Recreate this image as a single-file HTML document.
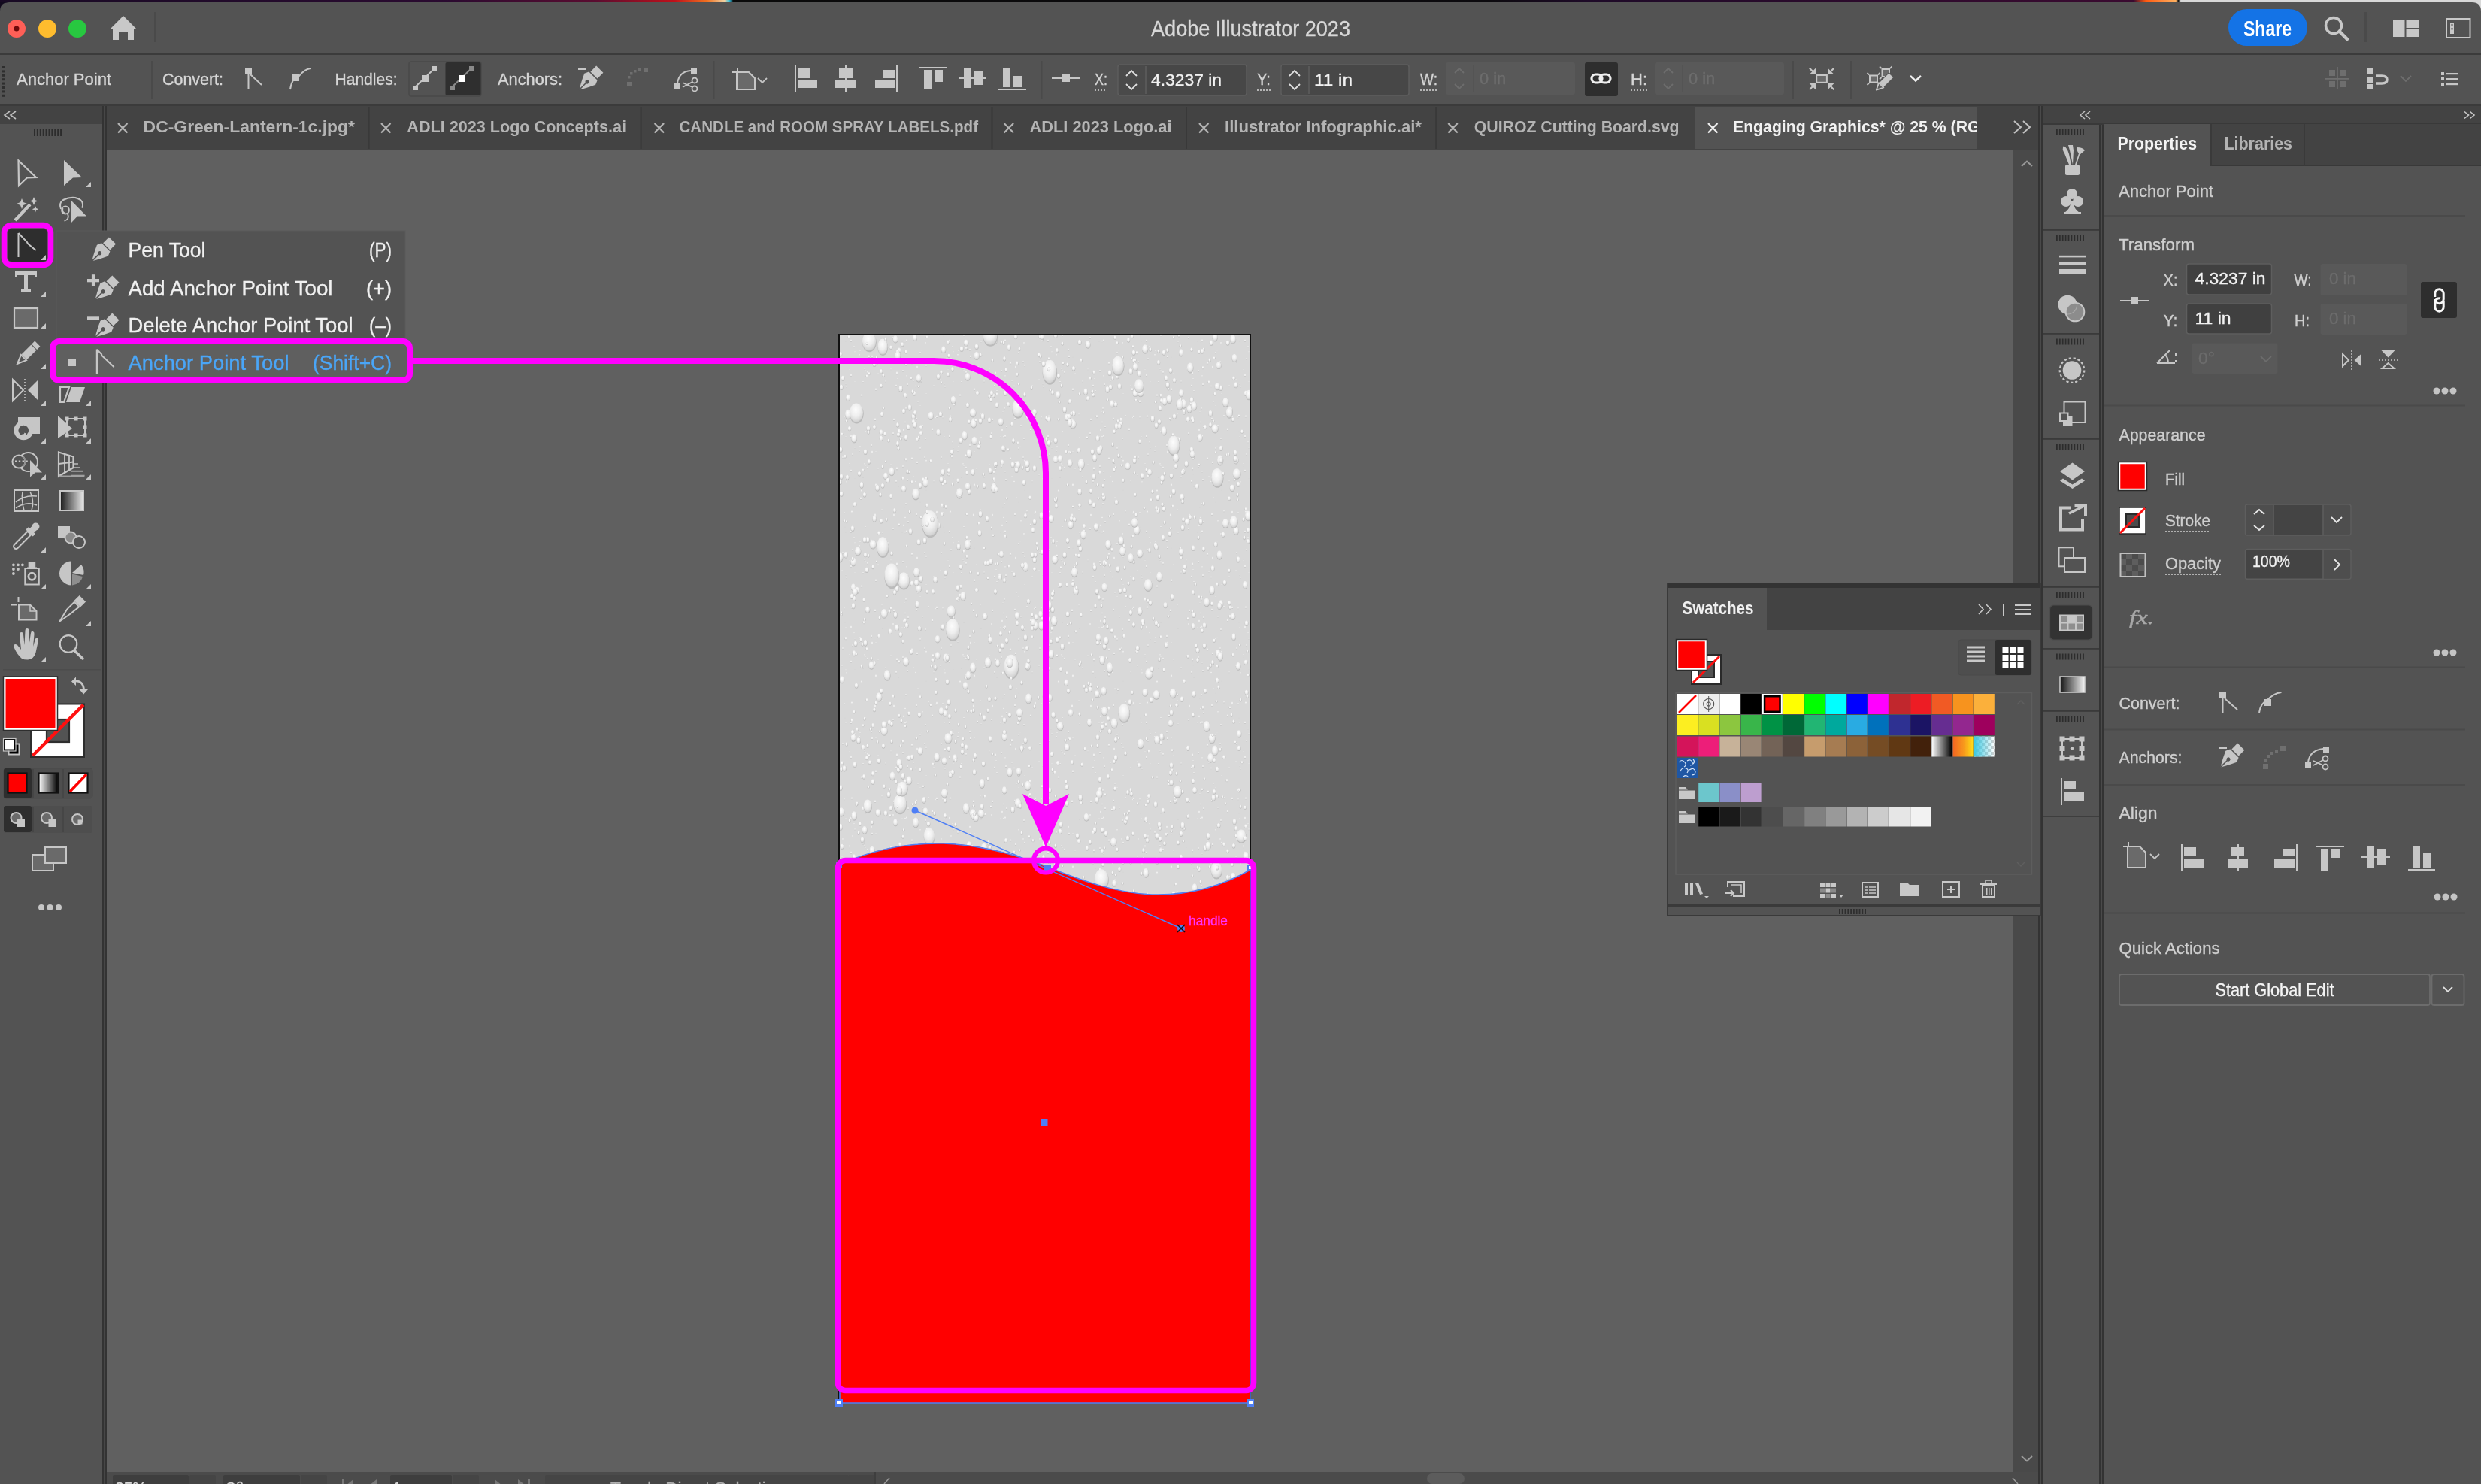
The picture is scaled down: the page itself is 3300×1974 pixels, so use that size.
<!DOCTYPE html>
<html><head><meta charset="utf-8"><title>Adobe Illustrator 2023</title>
<style>
*{margin:0;padding:0}
html,body{width:3300px;height:1974px;overflow:hidden;background:#535353}
svg{display:block;font-family:"Liberation Sans",sans-serif;will-change:transform}
</style></head><body>
<svg width="3300" height="1974" viewBox="0 0 3300 1974">
<rect x="0" y="0" width="3300" height="1974" rx="0" fill="#535353" />
<defs><linearGradient id="topg" x1="0" x2="1"><stop offset="0" stop-color="#180a24"/><stop offset="0.18" stop-color="#2a0a30"/><stop offset="0.24" stop-color="#5a0c30"/><stop offset="0.272" stop-color="#c0101a"/><stop offset="0.285" stop-color="#f07020"/><stop offset="0.292" stop-color="#f0d0a0"/><stop offset="0.294" stop-color="#30c0e0"/><stop offset="0.2955" stop-color="#0a0a0a"/><stop offset="0.6" stop-color="#0c0a0e"/><stop offset="0.64" stop-color="#1e0a28"/><stop offset="0.86" stop-color="#3a0a30"/><stop offset="0.865" stop-color="#ff5a10"/><stop offset="0.877" stop-color="#ffb060"/><stop offset="0.878" stop-color="#111"/><stop offset="0.879" stop-color="#d8d8d8"/><stop offset="1" stop-color="#d8d8d8"/></linearGradient></defs>
<rect x="0" y="0" width="3300" height="4" rx="0" fill="url(#topg)" />
<path d="M0 3 H3300 V72 H0 Z M0 3 V15 Q0 3 12 3 Z" fill="#535353" />
<path d="M0 3 H12 Q0 3 0 15 Z" fill="#120a1e" />
<path d="M3300 3 H3288 Q3300 3 3300 15 Z" fill="#d8d8d8" />
<rect x="0" y="71" width="3300" height="2" rx="0" fill="#3b3b3b" />
<rect x="0" y="139" width="3300" height="2" rx="0" fill="#3b3b3b" />
<rect x="0" y="141" width="136" height="1833" rx="0" fill="#535353" />
<rect x="0" y="141" width="136" height="24" rx="0" fill="#434343" />
<rect x="136" y="141" width="6" height="1833" rx="0" fill="#333333" />
<rect x="138" y="141" width="2" height="1833" rx="0" fill="#474747" />
<rect x="142" y="141" width="2570" height="58" rx="0" fill="#434343" />
<rect x="142" y="199" width="2536" height="1759" rx="0" fill="#606060" />
<rect x="2678" y="199" width="33" height="1759" rx="0" fill="#494949" />
<rect x="142" y="1958" width="2570" height="16" rx="0" fill="#4b4b4b" />
<rect x="2711" y="141" width="6" height="1833" rx="0" fill="#333333" />
<rect x="2713" y="141" width="2" height="1833" rx="0" fill="#4a4a4a" />
<rect x="2717" y="141" width="583" height="24" rx="0" fill="#434343" />
<rect x="2717" y="165" width="75" height="1809" rx="0" fill="#535353" />
<rect x="2792" y="165" width="6" height="1809" rx="0" fill="#333333" />
<rect x="2794" y="165" width="2" height="1809" rx="0" fill="#4a4a4a" />
<rect x="2798" y="165" width="502" height="1809" rx="0" fill="#535353" />
<circle cx="22" cy="38" r="12" fill="#fe5f57" />
<circle cx="22" cy="38" r="3.5" fill="#6e0a0a" />
<circle cx="63" cy="38" r="12" fill="#febc2e" />
<circle cx="103" cy="38" r="12" fill="#28c840" />
<path d="M164 21 L182 39 L178 39 L178 53 L170 53 L170 43 L158 43 L158 53 L150 53 L150 39 L146 39 Z" fill="#c8c8c8" />
<rect x="205" y="16" width="3" height="40" rx="0" fill="#4a4a4a" />
<text x="1531" y="47.5" font-size="29.07" fill="#d8d8d8" stroke="#d8d8d8" stroke-width="0.35" text-anchor="start" textLength="265" lengthAdjust="spacingAndGlyphs" >Adobe Illustrator 2023</text>
<rect x="2964" y="12" width="105" height="49" rx="24.5" fill="#1473e6" />
<text x="2984" y="47.5" font-size="29.07" font-weight="bold" fill="#ffffff" text-anchor="start" textLength="64" lengthAdjust="spacingAndGlyphs" >Share</text>
<circle cx="3104" cy="34" r="10.5" fill="none" stroke="#c8c8c8" stroke-width="3.5" />
<line x1="3112" y1="42" x2="3122" y2="52" stroke="#c8c8c8" stroke-width="4.5" stroke-linecap="round"/>
<rect x="3145" y="16" width="3" height="40" rx="0" fill="#4a4a4a" />
<rect x="3183" y="26" width="15.5" height="23" rx="0" fill="#c8c8c8" />
<rect x="3200.5" y="26" width="16.5" height="11" rx="0" fill="#c8c8c8" />
<rect x="3200.5" y="38.5" width="16.5" height="10.5" rx="0" fill="#c8c8c8" />
<rect x="3254" y="25" width="31.5" height="25" rx="0" fill="none" stroke="#c8c8c8" stroke-width="2" />
<rect x="3259" y="30" width="5" height="15" rx="0" fill="#c8c8c8" />
<rect x="3260.5" y="32" width="2" height="2.5" rx="0" fill="#535353" />
<rect x="3260.5" y="37" width="2" height="2.5" rx="0" fill="#535353" />
<rect x="3" y="88.0" width="4" height="3" rx="0" fill="#2e2e2e" />
<rect x="3" y="93.4" width="4" height="3" rx="0" fill="#2e2e2e" />
<rect x="3" y="98.8" width="4" height="3" rx="0" fill="#2e2e2e" />
<rect x="3" y="104.2" width="4" height="3" rx="0" fill="#2e2e2e" />
<rect x="3" y="109.6" width="4" height="3" rx="0" fill="#2e2e2e" />
<rect x="3" y="115.0" width="4" height="3" rx="0" fill="#2e2e2e" />
<rect x="3" y="120.4" width="4" height="3" rx="0" fill="#2e2e2e" />
<rect x="3" y="125.80000000000001" width="4" height="3" rx="0" fill="#2e2e2e" />
<text x="22" y="113" font-size="21.80" fill="#d6d6d6" stroke="#d6d6d6" stroke-width="0.35" text-anchor="start" textLength="126" lengthAdjust="spacingAndGlyphs" >Anchor Point</text>
<rect x="201" y="81" width="2" height="51" rx="0" fill="#4a4a4a" />
<text x="216" y="112.5" font-size="21.80" fill="#d6d6d6" stroke="#d6d6d6" stroke-width="0.35" text-anchor="start" textLength="81" lengthAdjust="spacingAndGlyphs" >Convert:</text>
<rect x="326" y="90" width="9" height="9" rx="0" fill="#c6c6c6" />
<line x1="330.5" y1="99" x2="330.5" y2="119" stroke="#c6c6c6" stroke-width="2" />
<line x1="333" y1="99" x2="348" y2="113" stroke="#c6c6c6" stroke-width="2" />
<rect x="389" y="99" width="9" height="9" rx="0" fill="#c6c6c6" />
<path d="M386 119 Q388 104 398 101 Q405 92 413 91" fill="none" stroke="#c6c6c6" stroke-width="2" />
<text x="445.5" y="112.5" font-size="21.80" fill="#d6d6d6" stroke="#d6d6d6" stroke-width="0.35" text-anchor="start" textLength="83" lengthAdjust="spacingAndGlyphs" >Handles:</text>
<rect x="544" y="82" width="96" height="46" rx="3" fill="none" stroke="#4a4a4a" stroke-width="1.5" />
<rect x="592.5" y="83" width="47" height="44" rx="2" fill="#2f2f2f" />
<line x1="551" y1="117" x2="578" y2="91" stroke="#c6c6c6" stroke-width="2" />
<rect x="550" y="114" width="6" height="6" rx="0" fill="#c6c6c6" />
<rect x="575" y="88" width="6" height="6" rx="0" fill="#c6c6c6" />
<rect x="561" y="100" width="9" height="9" rx="0" fill="#c6c6c6" />
<line x1="600" y1="117" x2="627" y2="91" stroke="#8a8a8a" stroke-width="2" />
<rect x="599" y="114" width="6" height="6" rx="0" fill="#8a8a8a" />
<rect x="624" y="88" width="6" height="6" rx="0" fill="#8a8a8a" />
<rect x="610" y="100" width="9" height="9" rx="0" fill="#ffffff" />
<text x="662" y="112.5" font-size="21.80" fill="#d6d6d6" stroke="#d6d6d6" stroke-width="0.35" text-anchor="start" textLength="86" lengthAdjust="spacingAndGlyphs" >Anchors:</text>
<rect x="769" y="90" width="11" height="3" rx="0" fill="#c6c6c6" />
<g transform="translate(784,106) rotate(45) scale(1.0)"><rect x="-6.5" y="-19.5" width="13" height="11" fill="#c6c6c6"/><path d="M-8 -7 L8 -7 L10.5 -1 Q5 11 0 19 Q-5 11 -10.5 -1 Z" fill="#c6c6c6"/><circle cx="0" cy="4.2" r="2.6" fill="#535353"/><line x1="0" y1="5" x2="0" y2="19.5" stroke="#535353" stroke-width="1.6"/></g>
<rect x="834" y="109" width="6" height="6" rx="0" fill="#6f6f6f" />
<rect x="835" y="101" width="3.5" height="3.5" rx="0" fill="#6f6f6f" />
<rect x="838" y="96" width="3.5" height="3.5" rx="0" fill="#6f6f6f" />
<rect x="843" y="93" width="3.5" height="3.5" rx="0" fill="#6f6f6f" />
<rect x="849" y="91" width="3.5" height="3.5" rx="0" fill="#6f6f6f" />
<rect x="856" y="90" width="6" height="6" rx="0" fill="#6f6f6f" />
<rect x="897" y="111" width="8" height="8" rx="0" fill="#c6c6c6" />
<rect x="919" y="91" width="8" height="8" rx="0" fill="#c6c6c6" />
<path d="M901 111 Q903 95 919 94" fill="none" stroke="#c6c6c6" stroke-width="2" />
<circle cx="924" cy="107" r="3.5" fill="none" stroke="#c6c6c6" stroke-width="1.8" />
<circle cx="924" cy="118" r="3.5" fill="none" stroke="#c6c6c6" stroke-width="1.8" />
<line x1="908" y1="110" x2="921" y2="116" stroke="#c6c6c6" stroke-width="1.8" />
<line x1="908" y1="116" x2="921" y2="109" stroke="#c6c6c6" stroke-width="1.8" />
<rect x="948.5" y="81" width="2" height="51" rx="0" fill="#4a4a4a" />
<rect x="974" y="95" width="8" height="2" rx="0" fill="#c6c6c6" />
<rect x="980" y="90" width="2" height="6" rx="0" fill="#c6c6c6" />
<path d="M980 96 H996 L1004 104 V119 H980 Z" fill="#6a6a6a" stroke="#c6c6c6" stroke-width="2" />
<path d="M1008 104 L1014 110 L1020 104" fill="none" stroke="#c6c6c6" stroke-width="1.8" />
<rect x="1057" y="87" width="2" height="36" rx="0" fill="#c6c6c6" />
<rect x="1061" y="91" width="16" height="13" rx="0" fill="#c6c6c6" />
<rect x="1061" y="107" width="26" height="10" rx="0" fill="#c6c6c6" />
<rect x="1124" y="87" width="2" height="36" rx="0" fill="#c6c6c6" />
<rect x="1116" y="91" width="18" height="13" rx="0" fill="#c6c6c6" />
<rect x="1111" y="107" width="27" height="10" rx="0" fill="#c6c6c6" />
<rect x="1192" y="87" width="2" height="36" rx="0" fill="#c6c6c6" />
<rect x="1174" y="93" width="16" height="11" rx="0" fill="#c6c6c6" />
<rect x="1164" y="107" width="26" height="10" rx="0" fill="#c6c6c6" />
<rect x="1223" y="89" width="36" height="2" rx="0" fill="#c6c6c6" />
<rect x="1229" y="93" width="10" height="26" rx="0" fill="#c6c6c6" />
<rect x="1243" y="93" width="11" height="16" rx="0" fill="#c6c6c6" />
<rect x="1275" y="103" width="37" height="2" rx="0" fill="#c6c6c6" />
<rect x="1282" y="91" width="10" height="26" rx="0" fill="#c6c6c6" />
<rect x="1296" y="95" width="12" height="18" rx="0" fill="#c6c6c6" />
<rect x="1328" y="118" width="37" height="2" rx="0" fill="#c6c6c6" />
<rect x="1334" y="91" width="10" height="25" rx="0" fill="#c6c6c6" />
<rect x="1348" y="101" width="12" height="15" rx="0" fill="#c6c6c6" />
<rect x="1384.5" y="81" width="2" height="51" rx="0" fill="#4a4a4a" />
<line x1="1399" y1="104" x2="1437" y2="104" stroke="#c6c6c6" stroke-width="1.8" />
<rect x="1413" y="99" width="10" height="10" rx="0" fill="#c6c6c6" />
<text x="1456" y="113" font-size="21.80" fill="#d6d6d6" stroke="#d6d6d6" stroke-width="0.35" text-anchor="start" textLength="17" lengthAdjust="spacingAndGlyphs" >X:</text>
<line x1="1456" y1="120" x2="1473" y2="120" stroke="#d6d6d6" stroke-width="1.5" stroke-dasharray="2 2"/>
<rect x="1487" y="86" width="171" height="41" rx="3" fill="#474747" stroke="#5e5e5e" stroke-width="1.5" />
<rect x="1488" y="87" width="36" height="39" rx="2" fill="#4a4a4a" />
<line x1="1524" y1="88" x2="1524" y2="125" stroke="#5e5e5e" stroke-width="1.5" />
<path d="M1498 101 L1505 94 L1512 101" fill="none" stroke="#e0e0e0" stroke-width="1.8" />
<path d="M1498 112 L1505 119 L1512 112" fill="none" stroke="#e0e0e0" stroke-width="1.8" />
<text x="1531" y="113.5" font-size="22.53" fill="#f2f2f2" stroke="#f2f2f2" stroke-width="0.35" text-anchor="start" textLength="94" lengthAdjust="spacingAndGlyphs" >4.3237 in</text>
<text x="1672" y="113" font-size="21.80" fill="#d6d6d6" stroke="#d6d6d6" stroke-width="0.35" text-anchor="start" textLength="18" lengthAdjust="spacingAndGlyphs" >Y:</text>
<line x1="1672" y1="120" x2="1690" y2="120" stroke="#d6d6d6" stroke-width="1.5" stroke-dasharray="2 2"/>
<rect x="1704" y="86" width="170" height="41" rx="3" fill="#474747" stroke="#5e5e5e" stroke-width="1.5" />
<rect x="1705" y="87" width="36" height="39" rx="2" fill="#4a4a4a" />
<line x1="1741" y1="88" x2="1741" y2="125" stroke="#5e5e5e" stroke-width="1.5" />
<path d="M1715 101 L1722 94 L1729 101" fill="none" stroke="#e0e0e0" stroke-width="1.8" />
<path d="M1715 112 L1722 119 L1729 112" fill="none" stroke="#e0e0e0" stroke-width="1.8" />
<text x="1748" y="113.5" font-size="22.53" fill="#f2f2f2" stroke="#f2f2f2" stroke-width="0.35" text-anchor="start" textLength="51" lengthAdjust="spacingAndGlyphs" >11 in</text>
<text x="1889" y="113" font-size="21.80" fill="#d6d6d6" stroke="#d6d6d6" stroke-width="0.35" text-anchor="start" textLength="23" lengthAdjust="spacingAndGlyphs" >W:</text>
<line x1="1889" y1="120" x2="1912" y2="120" stroke="#d6d6d6" stroke-width="1.5" stroke-dasharray="2 2"/>
<rect x="1923" y="83" width="172" height="43" rx="3" fill="#595959" />
<line x1="1960" y1="87" x2="1960" y2="122" stroke="#535353" stroke-width="1.5" />
<path d="M1935 97 L1941 91 L1947 97" fill="none" stroke="#6d6d6d" stroke-width="1.8" />
<path d="M1935 112 L1941 118 L1947 112" fill="none" stroke="#6d6d6d" stroke-width="1.8" />
<text x="1968" y="112.0" font-size="21.80" fill="#6d6d6d" stroke="#6d6d6d" stroke-width="0.35" text-anchor="start" >0 in</text>
<rect x="2108" y="83" width="44" height="45" rx="3" fill="#2e2e2e" />
<g fill="none" stroke="#f0f0f0" stroke-width="3.2"><rect x="2117" y="99" width="14" height="11" rx="5.5"/><rect x="2128" y="99" width="14" height="11" rx="5.5"/></g>
<text x="2169" y="113" font-size="21.80" fill="#d6d6d6" stroke="#d6d6d6" stroke-width="0.35" text-anchor="start" textLength="22" lengthAdjust="spacingAndGlyphs" >H:</text>
<line x1="2169" y1="120" x2="2191" y2="120" stroke="#d6d6d6" stroke-width="1.5" stroke-dasharray="2 2"/>
<rect x="2201" y="83" width="172" height="43" rx="3" fill="#595959" />
<line x1="2238" y1="87" x2="2238" y2="122" stroke="#535353" stroke-width="1.5" />
<path d="M2213 97 L2219 91 L2225 97" fill="none" stroke="#6d6d6d" stroke-width="1.8" />
<path d="M2213 112 L2219 118 L2225 112" fill="none" stroke="#6d6d6d" stroke-width="1.8" />
<text x="2246" y="112.0" font-size="21.80" fill="#6d6d6d" stroke="#6d6d6d" stroke-width="0.35" text-anchor="start" >0 in</text>
<rect x="2384" y="81" width="2" height="51" rx="0" fill="#4a4a4a" />
<rect x="2416.2" y="100" width="13.7" height="9.8" rx="0" fill="#6a6a6a" stroke="#c6c6c6" stroke-width="2" />
<path d="M2415.2 99 L2415.2 90.5 L2406.7 99 Z" fill="#c6c6c6" />
<line x1="2412.2" y1="96" x2="2406.8999999999996" y2="90.7" stroke="#c6c6c6" stroke-width="2.2" />
<path d="M2431 99 L2431 90.5 L2439.5 99 Z" fill="#c6c6c6" />
<line x1="2434" y1="96" x2="2439.3" y2="90.7" stroke="#c6c6c6" stroke-width="2.2" />
<path d="M2415.2 111 L2415.2 119.5 L2406.7 111 Z" fill="#c6c6c6" />
<line x1="2412.2" y1="114" x2="2406.8999999999996" y2="119.3" stroke="#c6c6c6" stroke-width="2.2" />
<path d="M2431 111 L2431 119.5 L2439.5 111 Z" fill="#c6c6c6" />
<line x1="2434" y1="114" x2="2439.3" y2="119.3" stroke="#c6c6c6" stroke-width="2.2" />
<rect x="2461" y="81" width="2" height="51" rx="0" fill="#4a4a4a" />
<rect x="2487" y="100.5" width="10" height="9.0" rx="0" fill="#6a6a6a" stroke="#c6c6c6" stroke-width="2" />
<line x1="2486" y1="99.5" x2="2483.5" y2="97.0" stroke="#c6c6c6" stroke-width="1.8" />
<line x1="2498" y1="99.5" x2="2500.5" y2="97.0" stroke="#c6c6c6" stroke-width="1.8" />
<line x1="2486" y1="110.5" x2="2483.5" y2="113.0" stroke="#c6c6c6" stroke-width="1.8" />
<line x1="2498" y1="110.5" x2="2500.5" y2="113.0" stroke="#c6c6c6" stroke-width="1.8" />
<rect x="2503.5" y="92" width="9.5" height="10" rx="0" fill="#6a6a6a" stroke="#c6c6c6" stroke-width="2" />
<line x1="2502.5" y1="91" x2="2500.0" y2="88.5" stroke="#c6c6c6" stroke-width="1.8" />
<line x1="2514" y1="91" x2="2516.5" y2="88.5" stroke="#c6c6c6" stroke-width="1.8" />
<line x1="2502.5" y1="103" x2="2500.0" y2="105.5" stroke="#c6c6c6" stroke-width="1.8" />
<line x1="2514" y1="103" x2="2516.5" y2="105.5" stroke="#c6c6c6" stroke-width="1.8" />
<g transform="translate(2505,110.5) rotate(45)"><rect x="-4.5" y="-15" width="9" height="19" fill="#c6c6c6" stroke="#535353" stroke-width="1"/><path d="M-4.5 4 L4.5 4 L0 13 Z" fill="#5a5a5a" stroke="#c6c6c6" stroke-width="1.8" stroke-linejoin="round"/></g>
<path d="M2541 101 L2548 107.5 L2555 101" fill="none" stroke="#f0f0f0" stroke-width="2.4" />
<rect x="3093" y="104" width="31" height="1.8" rx="0" fill="#6e6e6e" />
<rect x="3108" y="89" width="1.8" height="30" rx="0" fill="#6e6e6e" />
<rect x="3098" y="93" width="8" height="8" rx="0" fill="#6e6e6e" />
<rect x="3112" y="93" width="8" height="8" rx="0" fill="#6e6e6e" />
<rect x="3098" y="108" width="8" height="8" rx="0" fill="#6e6e6e" />
<rect x="3112" y="108" width="8" height="8" rx="0" fill="#6e6e6e" />
<rect x="3148" y="91" width="9" height="8" rx="0" fill="#c6c6c6" />
<rect x="3148" y="102" width="9" height="9" rx="0" fill="#c6c6c6" />
<rect x="3148" y="112" width="9" height="7" rx="0" fill="#c6c6c6" />
<path d="M3160 101 H3168 Q3175 101 3175 106 Q3175 111 3168 111 H3160" fill="none" stroke="#c6c6c6" stroke-width="3.5" />
<path d="M3193 101 L3200 108 L3207 101" fill="none" stroke="#6e6e6e" stroke-width="1.8" />
<rect x="3247" y="96" width="4" height="4" rx="0" fill="#c6c6c6" />
<rect x="3254" y="97" width="16" height="2.2" rx="0" fill="#c6c6c6" />
<rect x="3247" y="103" width="4" height="4" rx="0" fill="#c6c6c6" />
<rect x="3254" y="104" width="16" height="2.2" rx="0" fill="#c6c6c6" />
<rect x="3247" y="110" width="4" height="4" rx="0" fill="#c6c6c6" />
<rect x="3254" y="111" width="16" height="2.2" rx="0" fill="#c6c6c6" />
<rect x="489.6" y="142" width="2" height="56" rx="0" fill="#393939" />
<rect x="851.6" y="142" width="2" height="56" rx="0" fill="#393939" />
<rect x="1318.5" y="142" width="2" height="56" rx="0" fill="#393939" />
<rect x="1577" y="142" width="2" height="56" rx="0" fill="#393939" />
<rect x="1909.2" y="142" width="2" height="56" rx="0" fill="#393939" />
<rect x="2254" y="142" width="376" height="56" rx="0" fill="#535353" />
<line x1="157" y1="164" x2="169.5" y2="176.5" stroke="#b4b4b4" stroke-width="2.2" />
<line x1="169.5" y1="164" x2="157" y2="176.5" stroke="#b4b4b4" stroke-width="2.2" />
<text x="190.6" y="175.6" font-size="22.53" font-weight="bold" fill="#b4b4b4" text-anchor="start" textLength="281.4" lengthAdjust="spacingAndGlyphs" >DC-Green-Lantern-1c.jpg*</text>
<line x1="507" y1="164" x2="519.5" y2="176.5" stroke="#b4b4b4" stroke-width="2.2" />
<line x1="519.5" y1="164" x2="507" y2="176.5" stroke="#b4b4b4" stroke-width="2.2" />
<text x="541.3" y="175.6" font-size="22.53" font-weight="bold" fill="#b4b4b4" text-anchor="start" textLength="291.70000000000005" lengthAdjust="spacingAndGlyphs" >ADLI 2023 Logo Concepts.ai</text>
<line x1="870.6" y1="164" x2="883.1" y2="176.5" stroke="#b4b4b4" stroke-width="2.2" />
<line x1="883.1" y1="164" x2="870.6" y2="176.5" stroke="#b4b4b4" stroke-width="2.2" />
<text x="903.5" y="175.6" font-size="22.53" font-weight="bold" fill="#b4b4b4" text-anchor="start" textLength="397.5" lengthAdjust="spacingAndGlyphs" >CANDLE and ROOM SPRAY LABELS.pdf</text>
<line x1="1335.6" y1="164" x2="1348.1" y2="176.5" stroke="#b4b4b4" stroke-width="2.2" />
<line x1="1348.1" y1="164" x2="1335.6" y2="176.5" stroke="#b4b4b4" stroke-width="2.2" />
<text x="1369.5" y="175.6" font-size="22.53" font-weight="bold" fill="#b4b4b4" text-anchor="start" textLength="189.0" lengthAdjust="spacingAndGlyphs" >ADLI 2023 Logo.ai</text>
<line x1="1595" y1="164" x2="1607.5" y2="176.5" stroke="#b4b4b4" stroke-width="2.2" />
<line x1="1607.5" y1="164" x2="1595" y2="176.5" stroke="#b4b4b4" stroke-width="2.2" />
<text x="1629" y="175.6" font-size="22.53" font-weight="bold" fill="#b4b4b4" text-anchor="start" textLength="262" lengthAdjust="spacingAndGlyphs" >Illustrator Infographic.ai*</text>
<line x1="1926.3" y1="164" x2="1938.8" y2="176.5" stroke="#b4b4b4" stroke-width="2.2" />
<line x1="1938.8" y1="164" x2="1926.3" y2="176.5" stroke="#b4b4b4" stroke-width="2.2" />
<text x="1960.8" y="175.6" font-size="22.53" font-weight="bold" fill="#b4b4b4" text-anchor="start" textLength="272.79999999999995" lengthAdjust="spacingAndGlyphs" >QUIROZ Cutting Board.svg</text>
<line x1="2272" y1="164" x2="2284.5" y2="176.5" stroke="#f0f0f0" stroke-width="2.2" />
<line x1="2284.5" y1="164" x2="2272" y2="176.5" stroke="#f0f0f0" stroke-width="2.2" />
<clipPath id="tabclip"><rect x="2254" y="142" width="376" height="56"/></clipPath>
<text x="2305" y="175.8" font-size="22.53" font-weight="bold" fill="#f2f2f2" text-anchor="start" textLength="437" lengthAdjust="spacingAndGlyphs" clip-path="url(#tabclip)" id="acttab">Engaging Graphics* @ 25 % (RGB/Preview)</text>
<path d="M2679 161 L2688 169 L2679 177 M2691 161 L2700 169 L2691 177" fill="none" stroke="#c0c0c0" stroke-width="2" />
<path d="M13 148 L6 153 L13 158 M21 148 L14 153 L21 158" fill="none" stroke="#c0c0c0" stroke-width="1.6" />
<rect x="45.0" y="172" width="2" height="9" rx="0" fill="#2c2c2c" />
<rect x="48.9" y="172" width="2" height="9" rx="0" fill="#2c2c2c" />
<rect x="52.8" y="172" width="2" height="9" rx="0" fill="#2c2c2c" />
<rect x="56.7" y="172" width="2" height="9" rx="0" fill="#2c2c2c" />
<rect x="60.6" y="172" width="2" height="9" rx="0" fill="#2c2c2c" />
<rect x="64.5" y="172" width="2" height="9" rx="0" fill="#2c2c2c" />
<rect x="68.4" y="172" width="2" height="9" rx="0" fill="#2c2c2c" />
<rect x="72.3" y="172" width="2" height="9" rx="0" fill="#2c2c2c" />
<rect x="76.2" y="172" width="2" height="9" rx="0" fill="#2c2c2c" />
<rect x="80.1" y="172" width="2" height="9" rx="0" fill="#2c2c2c" />
<path d="M2689 221 L2696 214.5 L2703 221" fill="none" stroke="#9a9a9a" stroke-width="2" />
<path d="M2689 1937 L2696 1943.5 L2703 1937" fill="none" stroke="#9a9a9a" stroke-width="2" />
<path d="M2773 148 L2767 153 L2773 158 M2780 148 L2774 153 L2780 158" fill="none" stroke="#c0c0c0" stroke-width="1.6" />
<path d="M3278 148.5 L3283.5 153 L3278 157.5 M3285.5 148.5 L3291 153 L3285.5 157.5" fill="none" stroke="#c8c8c8" stroke-width="1.6" />
<rect x="2717" y="164" width="583" height="2" rx="0" fill="#393939" />
<path d="M24.5 213.5 L48 236 L36 236.5 L25 247 Z" fill="none" stroke="#c6c6c6" stroke-width="2.2" stroke-linejoin="miter"/>
<path d="M85 213 L109 236 L97 236.5 L85 247 Z" fill="#c6c6c6" />
<path d="M121 249 L121 242 L114 249 Z" fill="#c6c6c6" />
<line x1="20" y1="293" x2="40" y2="272" stroke="#c6c6c6" stroke-width="4" />
<g fill="#c6c6c6"><path d="M29 264 l2 5 l5 2 l-5 2 l-2 5 l-2 -5 l-5 -2 l5 -2z"/><path d="M45 262 l1.5 4 l4 1.5 l-4 1.5 l-1.5 4 l-1.5 -4 l-4 -1.5 l4 -1.5z"/><path d="M47 274 l1.2 3 l3 1.2 l-3 1.2 l-1.2 3 l-1.2 -3 l-3 -1.2 l3 -1.2z"/></g>
<path d="M81 278 Q78 270 84 266 Q92 262 100 263 Q109 265 110 271 Q110.5 274 109 276.5" fill="none" stroke="#c6c6c6" stroke-width="2" />
<circle cx="87" cy="279.5" r="5" fill="none" stroke="#c6c6c6" stroke-width="1.8" />
<path d="M83.5 277 Q82 282 86 283.5 M89 283.5 Q92 287 90 291 Q88.5 293 85.5 293.5" fill="none" stroke="#c6c6c6" stroke-width="1.8" />
<path d="M95 267 L95 296 L103 287.5 L115 287.5 Z" fill="#c6c6c6" />
<rect x="10" y="304" width="53" height="44" rx="6" fill="#2e2e2e" />
<line x1="24.5" y1="310" x2="24.5" y2="342" stroke="#c6c6c6" stroke-width="2" />
<path d="M24.5 310 L36 322 L37 324 L47.7 333" fill="none" stroke="#c6c6c6" stroke-width="2" />
<path d="M61 346 L61 339 L54 346 Z" fill="#c6c6c6" />
<rect x="5.5" y="299.5" width="62" height="53" rx="10" fill="none" stroke="#ff00ff" stroke-width="7.5" />
<path d="M20 361 H49 V369 H46 V366 H37 V384 H41 V388 H28 V384 H32 V366 H23 V369 H20 Z" fill="#c6c6c6" />
<path d="M61 395 L61 388 L54 395 Z" fill="#c6c6c6" />
<rect x="19" y="410" width="31" height="26" rx="0" fill="#6a6a6a" stroke="#c6c6c6" stroke-width="2.2" />
<path d="M61 437 L61 430 L54 437 Z" fill="#c6c6c6" />
<g transform="translate(35,472) rotate(45)"><rect x="-5" y="-21" width="10" height="6" fill="#c6c6c6"/><rect x="-5" y="-14" width="10" height="18" fill="#c6c6c6"/><path d="M-5 5 L5 5 L0 17 Z" fill="none" stroke="#c6c6c6" stroke-width="2"/></g>
<path d="M61 491 L61 484 L54 491 Z" fill="#c6c6c6" />
<path d="M17 505 L31 519 L17 533 Z" fill="none" stroke="#c6c6c6" stroke-width="2" />
<path d="M51 505 L37 519 L51 533 Z" fill="#c6c6c6" />
<line x1="33" y1="504" x2="33" y2="535" stroke="#c6c6c6" stroke-width="1.6" stroke-dasharray="2 2"/>
<path d="M61 540 L61 533 L54 540 Z" fill="#c6c6c6" />
<path d="M80 515 H92 L85 535 H80 Z" fill="none" stroke="#c6c6c6" stroke-width="2.2" />
<path d="M95 515 H113 L106 535 H88 Z" fill="#c6c6c6" />
<path d="M121 540 L121 533 L114 540 Z" fill="#c6c6c6" />
<rect x="24" y="555" width="29" height="22" rx="0" fill="#c6c6c6" />
<circle cx="31.3" cy="572.5" r="9.8" fill="none" stroke="#c6c6c6" stroke-width="6" />
<circle cx="31.3" cy="572.5" r="6.8" fill="#535353" />
<circle cx="32.3" cy="578.6" r="2.8" fill="#c6c6c6" />
<circle cx="30.8" cy="576.2" r="1.3" fill="#535353" />
<path d="M61 590 L61 583 L54 590 Z" fill="#c6c6c6" />
<path d="M77 553 L96 570 L77 583 Z" fill="#c6c6c6" />
<rect x="89" y="557" width="24" height="22" rx="0" fill="none" stroke="#c6c6c6" stroke-width="2" />
<rect x="86.5" y="554.5" width="5" height="5" rx="0" fill="#c6c6c6" />
<rect x="110.5" y="554.5" width="5" height="5" rx="0" fill="#c6c6c6" />
<rect x="86.5" y="576.5" width="5" height="5" rx="0" fill="#c6c6c6" />
<rect x="110.5" y="576.5" width="5" height="5" rx="0" fill="#c6c6c6" />
<rect x="98.5" y="554.5" width="5" height="5" rx="0" fill="#c6c6c6" />
<rect x="98.5" y="576.5" width="5" height="5" rx="0" fill="#c6c6c6" />
<rect x="110.5" y="565.5" width="5" height="5" rx="0" fill="#c6c6c6" />
<path d="M121 590 L121 583 L114 590 Z" fill="#c6c6c6" />
<circle cx="37.5" cy="614.5" r="12.5" fill="none" stroke="#c6c6c6" stroke-width="2" />
<circle cx="25" cy="614" r="8.6" fill="#535353" stroke="#c6c6c6" stroke-width="2" />
<path d="M30 607 A8.6 8.6 0 0 1 30 621" fill="none" stroke="#8f8f8f" stroke-width="2" />
<line x1="20" y1="613.8" x2="39" y2="613.8" stroke="#c6c6c6" stroke-width="2.4" stroke-dasharray="2.4 2.4"/>
<path d="M40 612 L56 628.5 L47 628.5 L40 634.5 Z" fill="#c6c6c6" />
<path d="M61 638 L61 631 L54 638 Z" fill="#c6c6c6" />
<line x1="95" y1="617" x2="104" y2="617" stroke="#a0a0a0" stroke-width="2" />
<line x1="95" y1="622" x2="106.7" y2="622" stroke="#a0a0a0" stroke-width="2" />
<line x1="95" y1="626.8" x2="110" y2="626.8" stroke="#a0a0a0" stroke-width="2" />
<line x1="95" y1="632.7" x2="112.6" y2="632.7" stroke="#a0a0a0" stroke-width="2" />
<path d="M78 601.5 L97.5 607.5 V622 L78 633.5 Z" fill="#535353" stroke="#c6c6c6" stroke-width="2.2" />
<line x1="78" y1="617" x2="97.5" y2="614.5" stroke="#c6c6c6" stroke-width="1.8" />
<line x1="86" y1="604" x2="86" y2="628.5" stroke="#c6c6c6" stroke-width="1.8" />
<line x1="92" y1="606" x2="92" y2="625" stroke="#c6c6c6" stroke-width="1.8" />
<line x1="78" y1="633.5" x2="112" y2="633.5" stroke="#a0a0a0" stroke-width="2" />
<path d="M121 638 L121 631 L114 638 Z" fill="#c6c6c6" />
<rect x="19" y="652" width="32" height="28" rx="0" fill="none" stroke="#c6c6c6" stroke-width="2" />
<path d="M21 668 Q32 658 49 660 M21 676 Q35 666 49 672 M30 654 Q28 665 32 679 M40 654 Q46 666 42 679" fill="none" stroke="#c6c6c6" stroke-width="1.5" />
<defs><linearGradient id="gtool" x1="0" x2="1"><stop offset="0" stop-color="#1a1a1a"/><stop offset="1" stop-color="#e8e8e8"/></linearGradient></defs>
<rect x="80" y="653" width="31" height="26" rx="0" fill="url(#gtool)" stroke="#c6c6c6" stroke-width="2" />
<g transform="translate(34,714) rotate(45)"><circle cx="0" cy="-19" r="5" fill="#c6c6c6"/><rect x="-4" y="-19" width="8" height="8" fill="#c6c6c6"/><rect x="-6.5" y="-12" width="13" height="5" rx="1" fill="#c6c6c6"/><path d="M-3.2 -7 H3.2 V18 A3.2 3.2 0 0 1 -3.2 18 Z" fill="none" stroke="#c6c6c6" stroke-width="2"/></g>
<path d="M61 735 L61 728 L54 735 Z" fill="#c6c6c6" />
<rect x="77" y="700" width="16" height="16" rx="0" fill="#c6c6c6" />
<circle cx="94" cy="715" r="7.5" fill="#8a8a8a" stroke="#c6c6c6" stroke-width="2" />
<circle cx="105" cy="721" r="8" fill="#535353" stroke="#c6c6c6" stroke-width="2" />
<circle cx="17.9" cy="751.3" r="1.9" fill="#c6c6c6" />
<circle cx="24" cy="751.3" r="1.9" fill="#c6c6c6" />
<circle cx="29.9" cy="751.3" r="1.9" fill="#c6c6c6" />
<circle cx="17.9" cy="757" r="1.9" fill="#c6c6c6" />
<circle cx="24" cy="757" r="1.9" fill="#c6c6c6" />
<circle cx="17.9" cy="763" r="1.9" fill="#c6c6c6" />
<rect x="33.3" y="756" width="18.5" height="21.5" rx="0" fill="none" stroke="#c6c6c6" stroke-width="2" />
<rect x="37.7" y="747.5" width="9.5" height="8" rx="0" fill="#c6c6c6" />
<rect x="36" y="754.5" width="13" height="2.5" rx="0" fill="#c6c6c6" />
<circle cx="42.5" cy="766.8" r="4.6" fill="none" stroke="#c6c6c6" stroke-width="2.8" />
<path d="M61 784 L61 777 L54 784 Z" fill="#c6c6c6" />
<path d="M95 762.5 L95 746.5 A16 16 0 0 0 95 778.5 Z" fill="#c6c6c6" />
<path d="M96 762 L108 751 A16 16 0 0 1 111 765 Z" fill="#c6c6c6" />
<path d="M96 763.5 L110 767 A15 15 0 0 1 96 778.5 Z" fill="#8e8e8e" />
<path d="M121 784 L121 777 L114 784 Z" fill="#c6c6c6" />
<line x1="14" y1="804.5" x2="22" y2="804.5" stroke="#c6c6c6" stroke-width="2" />
<line x1="24.5" y1="794" x2="24.5" y2="801" stroke="#c6c6c6" stroke-width="2" />
<path d="M25 804.5 H40 L48.5 813 V824.5 H25 Z" fill="#6a6a6a" stroke="#c6c6c6" stroke-width="2" />
<path d="M40 804.5 V813 H48.5" fill="none" stroke="#c6c6c6" stroke-width="1.5" />
<g transform="translate(95,811) rotate(45)"><rect x="-6" y="-21" width="12" height="10" fill="#c6c6c6"/><path d="M-4.5 -10 H4.5 L3 4 L0 22 L-4.5 4 Z" fill="none" stroke="#c6c6c6" stroke-width="2" stroke-linejoin="round"/></g>
<path d="M121 833 L121 826 L114 833 Z" fill="#c6c6c6" />
<path d="M29 876 Q23 871 19 862 L18.5 858 Q20 856 23 858 L28 864 L26 844 Q26 841 28.5 841 Q31 841 31 844 L32.5 858 L33.5 839 Q33.5 836 36 836 Q38.5 836 38.5 839 L38.5 858 L41 842 Q41.5 839 44 840 Q46 841 45.5 844 L44 860 L47 850 Q48 847.5 50 848.5 Q51.5 849.5 51 852 L47.5 868 Q45 877 37 877.5 Q32 877.5 29 876 Z" fill="#c6c6c6"/>
<path d="M61 881 L61 874 L54 881 Z" fill="#c6c6c6" />
<circle cx="91" cy="856.5" r="11.3" fill="none" stroke="#c6c6c6" stroke-width="2.2" />
<line x1="98.5" y1="865" x2="110" y2="876" stroke="#c6c6c6" stroke-width="3.5" stroke-linecap="round"/>
<rect x="4" y="890" width="130" height="1.5" rx="0" fill="#4c4c4c" />
<rect x="41" y="936.5" width="71" height="70.5" rx="0" fill="#ffffff" stroke="#2e2e2e" stroke-width="2" />
<rect x="62" y="957" width="30" height="30" rx="0" fill="#535353" stroke="#2e2e2e" stroke-width="2.2" />
<line x1="43.5" y1="1005" x2="111" y2="937.5" stroke="#ff1010" stroke-width="4.5" />
<rect x="6" y="901.5" width="69" height="68.5" rx="0" fill="#ff0000" stroke="#ffffff" stroke-width="3" />
<rect x="4.5" y="900" width="72" height="71.5" rx="0" fill="none" stroke="#2e2e2e" stroke-width="1.5" />
<path d="M99 906 Q111 905 111.5 918" fill="none" stroke="#c6c6c6" stroke-width="2.8" />
<path d="M95 906.5 L101 900.5 L101 912 Z M105.5 917 L117 917 L111.2 923.5 Z" fill="#c6c6c6" />
<rect x="11.5" y="989.5" width="14" height="14" rx="0" fill="#000" stroke="#c6c6c6" stroke-width="2" />
<rect x="6" y="984" width="13.5" height="13.5" rx="0" fill="#fff" stroke="#000" stroke-width="2" />
<rect x="4.5" y="982.5" width="16.5" height="16.5" rx="0" fill="none" stroke="#c6c6c6" stroke-width="1.2" />
<rect x="5" y="1022" width="118" height="40" rx="3" fill="#4e4e4e" stroke="#4a4a4a" stroke-width="1" />
<rect x="5" y="1022" width="37" height="40" rx="3" fill="#2e2e2e" />
<rect x="10.5" y="1028.5" width="25" height="26" rx="0" fill="#ff0000" stroke="#111" stroke-width="2.2" />
<rect x="51.5" y="1028.5" width="25.5" height="26" rx="0" fill="url(#gtool2)" stroke="#111" stroke-width="2.2" />
<defs><linearGradient id="gtool2" x1="0" x2="1"><stop offset="0" stop-color="#fff"/><stop offset="1" stop-color="#000"/></linearGradient></defs>
<rect x="91.5" y="1028.5" width="25" height="26" rx="0" fill="#fff" stroke="#111" stroke-width="2.2" />
<line x1="93" y1="1053" x2="115" y2="1030" stroke="#ff0000" stroke-width="3.5" />
<line x1="44" y1="1023" x2="44" y2="1061" stroke="#454545" stroke-width="1.5" />
<line x1="84" y1="1023" x2="84" y2="1061" stroke="#454545" stroke-width="1.5" />
<rect x="5" y="1072" width="118" height="36" rx="3" fill="#4e4e4e" />
<rect x="5" y="1072" width="37" height="35" rx="3" fill="#2e2e2e" />
<line x1="44" y1="1073" x2="44" y2="1107" stroke="#454545" stroke-width="1.5" />
<line x1="84" y1="1073" x2="84" y2="1107" stroke="#454545" stroke-width="1.5" />
<circle cx="21.5" cy="1088" r="7" fill="#6a6a6a" stroke="#c6c6c6" stroke-width="2" />
<rect x="22" y="1089" width="11" height="11" rx="0" fill="#c6c6c6" />
<circle cx="62" cy="1088" r="7" fill="#6a6a6a" stroke="#c6c6c6" stroke-width="2" />
<rect x="64.5" y="1090" width="10" height="10" rx="0" fill="#c6c6c6" />
<circle cx="103" cy="1090" r="7" fill="#6a6a6a" stroke="#c6c6c6" stroke-width="2" />
<rect x="103.5" y="1090.5" width="6" height="6" rx="0" fill="#c6c6c6" />
<rect x="43" y="1137" width="28" height="21" rx="0" fill="#6a6a6a" stroke="#c6c6c6" stroke-width="2" />
<rect x="60" y="1127" width="28" height="21" rx="0" fill="#6a6a6a" stroke="#c6c6c6" stroke-width="2" />
<circle cx="55.0" cy="1207" r="4" fill="#c6c6c6" />
<circle cx="66.5" cy="1207" r="4" fill="#c6c6c6" />
<circle cx="78.0" cy="1207" r="4" fill="#c6c6c6" />
<rect x="1115" y="444" width="549" height="1422" rx="0" fill="#111111" />
<defs><linearGradient id="wg" x1="0" y1="0" x2="1" y2="1"><stop offset="0" stop-color="#dcdcdc"/><stop offset="1" stop-color="#d6d6d7"/></linearGradient><radialGradient id="drop" cx="0.45" cy="0.4" r="0.6"><stop offset="0" stop-color="#f4f4f4"/><stop offset="0.6" stop-color="#e4e4e4"/><stop offset="0.85" stop-color="#c4c4c4"/><stop offset="1" stop-color="#b8b8b8"/></radialGradient><clipPath id="abclip"><rect x="1117" y="446" width="545" height="1418"/></clipPath></defs>
<rect x="1117" y="446" width="545" height="1418" rx="0" fill="#d9d9d9" />
<defs><radialGradient id="dg" cx="0.45" cy="0.35" r="0.65"><stop offset="0" stop-color="#fcfcfc"/><stop offset="0.55" stop-color="#eeeeee"/><stop offset="0.9" stop-color="#d8d8d8"/><stop offset="1" stop-color="#cfcfcf"/></radialGradient><g id="dp"><ellipse cx="0.04" cy="0.16" rx="1" ry="1.3" fill="#b3b3b3" opacity="0.8"/><ellipse cx="0" cy="0" rx="0.96" ry="1.26" fill="url(#dg)"/></g><pattern id="spk" width="131" height="127" patternUnits="userSpaceOnUse" x="1117" y="446"><ellipse cx="42" cy="19" rx="0.9" ry="1.2" fill="#f0f0f0"/><ellipse cx="42" cy="20.2" rx="0.9" ry="0.5" fill="#bdbdbd" opacity="0.7"/><ellipse cx="9" cy="68" rx="0.7" ry="0.9" fill="#f0f0f0"/><ellipse cx="9" cy="68.9" rx="0.7" ry="0.5" fill="#bdbdbd" opacity="0.7"/><ellipse cx="8" cy="64" rx="0.5" ry="0.7" fill="#f0f0f0"/><ellipse cx="8" cy="65.1" rx="0.5" ry="0.5" fill="#bdbdbd" opacity="0.7"/><ellipse cx="57" cy="9" rx="0.6" ry="0.7" fill="#f0f0f0"/><ellipse cx="57" cy="9.5" rx="0.6" ry="0.5" fill="#bdbdbd" opacity="0.7"/><ellipse cx="56" cy="105" rx="0.6" ry="0.7" fill="#f0f0f0"/><ellipse cx="56" cy="105.7" rx="0.6" ry="0.5" fill="#bdbdbd" opacity="0.7"/><ellipse cx="29" cy="80" rx="1.1" ry="1.4" fill="#f0f0f0"/><ellipse cx="29" cy="81.0" rx="1.1" ry="0.5" fill="#bdbdbd" opacity="0.7"/><ellipse cx="76" cy="50" rx="1.1" ry="1.4" fill="#f0f0f0"/><ellipse cx="76" cy="51.7" rx="1.1" ry="0.5" fill="#bdbdbd" opacity="0.7"/><ellipse cx="6" cy="109" rx="0.7" ry="0.9" fill="#f0f0f0"/><ellipse cx="6" cy="109.8" rx="0.7" ry="0.5" fill="#bdbdbd" opacity="0.7"/><ellipse cx="19" cy="15" rx="0.7" ry="0.9" fill="#f0f0f0"/><ellipse cx="19" cy="15.8" rx="0.7" ry="0.5" fill="#bdbdbd" opacity="0.7"/><ellipse cx="107" cy="23" rx="0.8" ry="1.1" fill="#f0f0f0"/><ellipse cx="107" cy="24.0" rx="0.8" ry="0.5" fill="#bdbdbd" opacity="0.7"/><ellipse cx="84" cy="47" rx="0.8" ry="1.1" fill="#f0f0f0"/><ellipse cx="84" cy="48.3" rx="0.8" ry="0.5" fill="#bdbdbd" opacity="0.7"/><ellipse cx="8" cy="8" rx="0.6" ry="0.8" fill="#f0f0f0"/><ellipse cx="8" cy="8.3" rx="0.6" ry="0.5" fill="#bdbdbd" opacity="0.7"/><ellipse cx="89" cy="54" rx="0.7" ry="0.9" fill="#f0f0f0"/><ellipse cx="89" cy="55.1" rx="0.7" ry="0.5" fill="#bdbdbd" opacity="0.7"/><ellipse cx="77" cy="58" rx="0.7" ry="0.9" fill="#f0f0f0"/><ellipse cx="77" cy="58.4" rx="0.7" ry="0.5" fill="#bdbdbd" opacity="0.7"/><ellipse cx="104" cy="89" rx="0.6" ry="0.8" fill="#f0f0f0"/><ellipse cx="104" cy="89.5" rx="0.6" ry="0.5" fill="#bdbdbd" opacity="0.7"/><ellipse cx="75" cy="67" rx="1.0" ry="1.3" fill="#f0f0f0"/><ellipse cx="75" cy="67.9" rx="1.0" ry="0.5" fill="#bdbdbd" opacity="0.7"/><ellipse cx="96" cy="37" rx="1.1" ry="1.4" fill="#f0f0f0"/><ellipse cx="96" cy="37.9" rx="1.1" ry="0.5" fill="#bdbdbd" opacity="0.7"/><ellipse cx="15" cy="53" rx="1.0" ry="1.2" fill="#f0f0f0"/><ellipse cx="15" cy="54.2" rx="1.0" ry="0.5" fill="#bdbdbd" opacity="0.7"/><ellipse cx="20" cy="62" rx="0.5" ry="0.7" fill="#f0f0f0"/><ellipse cx="20" cy="62.7" rx="0.5" ry="0.5" fill="#bdbdbd" opacity="0.7"/><ellipse cx="88" cy="97" rx="0.8" ry="1.1" fill="#f0f0f0"/><ellipse cx="88" cy="98.1" rx="0.8" ry="0.5" fill="#bdbdbd" opacity="0.7"/><ellipse cx="115" cy="40" rx="0.9" ry="1.2" fill="#f0f0f0"/><ellipse cx="115" cy="40.9" rx="0.9" ry="0.5" fill="#bdbdbd" opacity="0.7"/><ellipse cx="78" cy="74" rx="0.8" ry="1.0" fill="#f0f0f0"/><ellipse cx="78" cy="74.6" rx="0.8" ry="0.5" fill="#bdbdbd" opacity="0.7"/><ellipse cx="110" cy="120" rx="0.8" ry="1.0" fill="#f0f0f0"/><ellipse cx="110" cy="120.9" rx="0.8" ry="0.5" fill="#bdbdbd" opacity="0.7"/><ellipse cx="87" cy="8" rx="0.9" ry="1.2" fill="#f0f0f0"/><ellipse cx="87" cy="8.8" rx="0.9" ry="0.5" fill="#bdbdbd" opacity="0.7"/><ellipse cx="85" cy="126" rx="1.0" ry="1.3" fill="#f0f0f0"/><ellipse cx="85" cy="127.3" rx="1.0" ry="0.5" fill="#bdbdbd" opacity="0.7"/><ellipse cx="37" cy="49" rx="0.9" ry="1.2" fill="#f0f0f0"/><ellipse cx="37" cy="50.1" rx="0.9" ry="0.5" fill="#bdbdbd" opacity="0.7"/><ellipse cx="3" cy="59" rx="0.6" ry="0.8" fill="#f0f0f0"/><ellipse cx="3" cy="59.4" rx="0.6" ry="0.5" fill="#bdbdbd" opacity="0.7"/><ellipse cx="15" cy="7" rx="1.0" ry="1.2" fill="#f0f0f0"/><ellipse cx="15" cy="8.6" rx="1.0" ry="0.5" fill="#bdbdbd" opacity="0.7"/><ellipse cx="17" cy="31" rx="0.7" ry="1.0" fill="#f0f0f0"/><ellipse cx="17" cy="32.3" rx="0.7" ry="0.5" fill="#bdbdbd" opacity="0.7"/><ellipse cx="114" cy="10" rx="0.8" ry="1.0" fill="#f0f0f0"/><ellipse cx="114" cy="11.2" rx="0.8" ry="0.5" fill="#bdbdbd" opacity="0.7"/><ellipse cx="72" cy="112" rx="1.0" ry="1.3" fill="#f0f0f0"/><ellipse cx="72" cy="113.4" rx="1.0" ry="0.5" fill="#bdbdbd" opacity="0.7"/><ellipse cx="113" cy="35" rx="0.7" ry="1.0" fill="#f0f0f0"/><ellipse cx="113" cy="36.3" rx="0.7" ry="0.5" fill="#bdbdbd" opacity="0.7"/><ellipse cx="47" cy="112" rx="1.1" ry="1.4" fill="#f0f0f0"/><ellipse cx="47" cy="113.6" rx="1.1" ry="0.5" fill="#bdbdbd" opacity="0.7"/><ellipse cx="20" cy="22" rx="0.6" ry="0.8" fill="#f0f0f0"/><ellipse cx="20" cy="23.1" rx="0.6" ry="0.5" fill="#bdbdbd" opacity="0.7"/><ellipse cx="31" cy="62" rx="0.9" ry="1.1" fill="#f0f0f0"/><ellipse cx="31" cy="62.6" rx="0.9" ry="0.5" fill="#bdbdbd" opacity="0.7"/><ellipse cx="34" cy="1" rx="0.8" ry="1.0" fill="#f0f0f0"/><ellipse cx="34" cy="1.4" rx="0.8" ry="0.5" fill="#bdbdbd" opacity="0.7"/><ellipse cx="48" cy="72" rx="1.1" ry="1.4" fill="#f0f0f0"/><ellipse cx="48" cy="73.2" rx="1.1" ry="0.5" fill="#bdbdbd" opacity="0.7"/><ellipse cx="90" cy="65" rx="0.9" ry="1.1" fill="#f0f0f0"/><ellipse cx="90" cy="66.5" rx="0.9" ry="0.5" fill="#bdbdbd" opacity="0.7"/><ellipse cx="89" cy="7" rx="1.0" ry="1.4" fill="#f0f0f0"/><ellipse cx="89" cy="8.1" rx="1.0" ry="0.5" fill="#bdbdbd" opacity="0.7"/><ellipse cx="102" cy="111" rx="1.0" ry="1.3" fill="#f0f0f0"/><ellipse cx="102" cy="112.2" rx="1.0" ry="0.5" fill="#bdbdbd" opacity="0.7"/><ellipse cx="51" cy="51" rx="0.6" ry="0.7" fill="#f0f0f0"/><ellipse cx="51" cy="51.3" rx="0.6" ry="0.5" fill="#bdbdbd" opacity="0.7"/><ellipse cx="83" cy="8" rx="0.5" ry="0.7" fill="#f0f0f0"/><ellipse cx="83" cy="8.6" rx="0.5" ry="0.5" fill="#bdbdbd" opacity="0.7"/><ellipse cx="27" cy="21" rx="0.7" ry="0.9" fill="#f0f0f0"/><ellipse cx="27" cy="21.5" rx="0.7" ry="0.5" fill="#bdbdbd" opacity="0.7"/><ellipse cx="7" cy="0" rx="0.6" ry="0.8" fill="#f0f0f0"/><ellipse cx="7" cy="0.7" rx="0.6" ry="0.5" fill="#bdbdbd" opacity="0.7"/><ellipse cx="13" cy="46" rx="0.5" ry="0.7" fill="#f0f0f0"/><ellipse cx="13" cy="46.8" rx="0.5" ry="0.5" fill="#bdbdbd" opacity="0.7"/><ellipse cx="115" cy="78" rx="0.6" ry="0.8" fill="#f0f0f0"/><ellipse cx="115" cy="78.7" rx="0.6" ry="0.5" fill="#bdbdbd" opacity="0.7"/><ellipse cx="33" cy="44" rx="0.7" ry="0.9" fill="#f0f0f0"/><ellipse cx="33" cy="45.0" rx="0.7" ry="0.5" fill="#bdbdbd" opacity="0.7"/><ellipse cx="16" cy="108" rx="1.1" ry="1.4" fill="#f0f0f0"/><ellipse cx="16" cy="109.1" rx="1.1" ry="0.5" fill="#bdbdbd" opacity="0.7"/><ellipse cx="61" cy="61" rx="0.6" ry="0.7" fill="#f0f0f0"/><ellipse cx="61" cy="62.1" rx="0.6" ry="0.5" fill="#bdbdbd" opacity="0.7"/><ellipse cx="13" cy="44" rx="0.7" ry="0.9" fill="#f0f0f0"/><ellipse cx="13" cy="44.3" rx="0.7" ry="0.5" fill="#bdbdbd" opacity="0.7"/><ellipse cx="109" cy="21" rx="0.5" ry="0.7" fill="#f0f0f0"/><ellipse cx="109" cy="21.1" rx="0.5" ry="0.5" fill="#bdbdbd" opacity="0.7"/><ellipse cx="125" cy="67" rx="0.6" ry="0.8" fill="#f0f0f0"/><ellipse cx="125" cy="67.8" rx="0.6" ry="0.5" fill="#bdbdbd" opacity="0.7"/><ellipse cx="71" cy="3" rx="0.8" ry="1.1" fill="#f0f0f0"/><ellipse cx="71" cy="4.4" rx="0.8" ry="0.5" fill="#bdbdbd" opacity="0.7"/><ellipse cx="128" cy="110" rx="0.9" ry="1.2" fill="#f0f0f0"/><ellipse cx="128" cy="110.7" rx="0.9" ry="0.5" fill="#bdbdbd" opacity="0.7"/><ellipse cx="34" cy="47" rx="0.6" ry="0.8" fill="#f0f0f0"/><ellipse cx="34" cy="47.3" rx="0.6" ry="0.5" fill="#bdbdbd" opacity="0.7"/><ellipse cx="101" cy="68" rx="1.0" ry="1.3" fill="#f0f0f0"/><ellipse cx="101" cy="68.8" rx="1.0" ry="0.5" fill="#bdbdbd" opacity="0.7"/><ellipse cx="43" cy="28" rx="1.0" ry="1.3" fill="#f0f0f0"/><ellipse cx="43" cy="29.5" rx="1.0" ry="0.5" fill="#bdbdbd" opacity="0.7"/><ellipse cx="129" cy="108" rx="1.0" ry="1.3" fill="#f0f0f0"/><ellipse cx="129" cy="109.5" rx="1.0" ry="0.5" fill="#bdbdbd" opacity="0.7"/><ellipse cx="107" cy="94" rx="0.6" ry="0.8" fill="#f0f0f0"/><ellipse cx="107" cy="94.7" rx="0.6" ry="0.5" fill="#bdbdbd" opacity="0.7"/><ellipse cx="68" cy="45" rx="0.5" ry="0.7" fill="#f0f0f0"/><ellipse cx="68" cy="45.8" rx="0.5" ry="0.5" fill="#bdbdbd" opacity="0.7"/><ellipse cx="4" cy="35" rx="0.7" ry="0.9" fill="#f0f0f0"/><ellipse cx="4" cy="36.3" rx="0.7" ry="0.5" fill="#bdbdbd" opacity="0.7"/><ellipse cx="91" cy="121" rx="0.8" ry="1.0" fill="#f0f0f0"/><ellipse cx="91" cy="122.4" rx="0.8" ry="0.5" fill="#bdbdbd" opacity="0.7"/><ellipse cx="123" cy="125" rx="1.1" ry="1.4" fill="#f0f0f0"/><ellipse cx="123" cy="126.8" rx="1.1" ry="0.5" fill="#bdbdbd" opacity="0.7"/><ellipse cx="48" cy="28" rx="0.6" ry="0.8" fill="#f0f0f0"/><ellipse cx="48" cy="28.8" rx="0.6" ry="0.5" fill="#bdbdbd" opacity="0.7"/><ellipse cx="26" cy="26" rx="0.9" ry="1.1" fill="#f0f0f0"/><ellipse cx="26" cy="27.0" rx="0.9" ry="0.5" fill="#bdbdbd" opacity="0.7"/><ellipse cx="118" cy="107" rx="0.8" ry="1.0" fill="#f0f0f0"/><ellipse cx="118" cy="107.7" rx="0.8" ry="0.5" fill="#bdbdbd" opacity="0.7"/><ellipse cx="86" cy="102" rx="0.6" ry="0.7" fill="#f0f0f0"/><ellipse cx="86" cy="102.2" rx="0.6" ry="0.5" fill="#bdbdbd" opacity="0.7"/><ellipse cx="87" cy="116" rx="1.0" ry="1.3" fill="#f0f0f0"/><ellipse cx="87" cy="116.7" rx="1.0" ry="0.5" fill="#bdbdbd" opacity="0.7"/><ellipse cx="98" cy="61" rx="0.6" ry="0.8" fill="#f0f0f0"/><ellipse cx="98" cy="61.4" rx="0.6" ry="0.5" fill="#bdbdbd" opacity="0.7"/><ellipse cx="103" cy="42" rx="1.0" ry="1.3" fill="#f0f0f0"/><ellipse cx="103" cy="43.4" rx="1.0" ry="0.5" fill="#bdbdbd" opacity="0.7"/></pattern></defs>
<rect x="1117" y="446" width="545" height="800" rx="0" fill="url(#spk)" />
<g clip-path="url(#abclip)"><use href="#dp" transform="translate(1647,744) scale(2.5,3.0)"/><use href="#dp" transform="translate(1210,542) scale(2.5,3.0)"/><use href="#dp" transform="translate(1197,1069) scale(8.9,9.7)"/><use href="#dp" transform="translate(1416,545) scale(2.6,3.0)"/><use href="#dp" transform="translate(1404,1150) scale(2.4,2.9)"/><use href="#dp" transform="translate(1232,636) scale(1.5,1.8)"/><use href="#dp" transform="translate(1258,762) scale(2.5,2.7)"/><use href="#dp" transform="translate(1367,886) scale(3.4,4.2)"/><use href="#dp" transform="translate(1390,847) scale(1.2,1.4)"/><use href="#dp" transform="translate(1217,449) scale(2.9,3.3)"/><use href="#dp" transform="translate(1512,866) scale(1.9,2.2)"/><use href="#dp" transform="translate(1544,526) scale(1.5,1.7)"/><use href="#dp" transform="translate(1538,829) scale(2.3,2.8)"/><use href="#dp" transform="translate(1359,908) scale(1.9,2.2)"/><use href="#dp" transform="translate(1364,848) scale(2.5,3.0)"/><use href="#dp" transform="translate(1595,1156) scale(2.0,2.5)"/><use href="#dp" transform="translate(1575,549) scale(1.8,1.9)"/><use href="#dp" transform="translate(1248,501) scale(2.3,2.8)"/><use href="#dp" transform="translate(1201,986) scale(1.4,1.7)"/><use href="#dp" transform="translate(1644,612) scale(3.4,3.8)"/><use href="#dp" transform="translate(1656,1074) scale(1.8,2.0)"/><use href="#dp" transform="translate(1302,594) scale(2.2,2.2)"/><use href="#dp" transform="translate(1419,778) scale(1.7,1.9)"/><use href="#dp" transform="translate(1396,494) scale(9.7,12.1)"/><use href="#dp" transform="translate(1174,646) scale(2.3,2.4)"/><use href="#dp" transform="translate(1188,764) scale(4.2,4.4)"/><use href="#dp" transform="translate(1198,1139) scale(2.2,2.2)"/><use href="#dp" transform="translate(1148,965) scale(1.3,1.6)"/><use href="#dp" transform="translate(1463,1050) scale(2.4,2.4)"/><use href="#dp" transform="translate(1587,788) scale(2.0,2.4)"/><use href="#dp" transform="translate(1263,543) scale(1.5,1.6)"/><use href="#dp" transform="translate(1205,484) scale(1.6,1.8)"/><use href="#dp" transform="translate(1531,665) scale(1.4,1.6)"/><use href="#dp" transform="translate(1127,635) scale(2.2,2.5)"/><use href="#dp" transform="translate(1220,804) scale(2.8,3.4)"/><use href="#dp" transform="translate(1353,819) scale(3.3,3.8)"/><use href="#dp" transform="translate(1492,1187) scale(2.4,2.8)"/><use href="#dp" transform="translate(1464,751) scale(1.3,1.3)"/><use href="#dp" transform="translate(1156,1005) scale(1.4,1.5)"/><use href="#dp" transform="translate(1575,1102) scale(1.6,1.7)"/><use href="#dp" transform="translate(1277,792) scale(1.8,1.9)"/><use href="#dp" transform="translate(1641,1179) scale(1.5,1.9)"/><use href="#dp" transform="translate(1286,715) scale(1.7,1.9)"/><use href="#dp" transform="translate(1391,598) scale(1.2,1.3)"/><use href="#dp" transform="translate(1166,747) scale(1.2,1.3)"/><use href="#dp" transform="translate(1244,888) scale(2.3,2.6)"/><use href="#dp" transform="translate(1507,1109) scale(1.7,2.1)"/><use href="#dp" transform="translate(1198,992) scale(1.3,1.5)"/><use href="#dp" transform="translate(1603,919) scale(2.3,2.4)"/><use href="#dp" transform="translate(1402,826) scale(4.1,5.0)"/><use href="#dp" transform="translate(1435,1119) scale(2.2,2.3)"/><use href="#dp" transform="translate(1134,546) scale(1.3,1.6)"/><use href="#dp" transform="translate(1421,919) scale(2.2,2.4)"/><use href="#dp" transform="translate(1119,1047) scale(1.9,2.2)"/><use href="#dp" transform="translate(1476,496) scale(1.6,1.6)"/><use href="#dp" transform="translate(1262,996) scale(2.2,2.8)"/><use href="#dp" transform="translate(1386,734) scale(2.2,2.6)"/><use href="#dp" transform="translate(1453,931) scale(1.4,1.5)"/><use href="#dp" transform="translate(1522,676) scale(1.2,1.2)"/><use href="#dp" transform="translate(1263,953) scale(2.1,2.3)"/><use href="#dp" transform="translate(1399,796) scale(1.4,1.7)"/><use href="#dp" transform="translate(1226,1184) scale(2.6,2.9)"/><use href="#dp" transform="translate(1564,1176) scale(1.6,1.7)"/><use href="#dp" transform="translate(1632,605) scale(1.4,1.6)"/><use href="#dp" transform="translate(1636,546) scale(3.6,4.4)"/><use href="#dp" transform="translate(1500,620) scale(3.5,3.5)"/><use href="#dp" transform="translate(1119,817) scale(1.6,1.7)"/><use href="#dp" transform="translate(1304,684) scale(2.6,3.1)"/><use href="#dp" transform="translate(1574,537) scale(4.0,4.8)"/><use href="#dp" transform="translate(1275,727) scale(2.6,3.0)"/><use href="#dp" transform="translate(1314,769) scale(1.3,1.3)"/><use href="#dp" transform="translate(1572,661) scale(3.1,3.3)"/><use href="#dp" transform="translate(1395,589) scale(2.5,3.1)"/><use href="#dp" transform="translate(1560,922) scale(4.4,5.0)"/><use href="#dp" transform="translate(1509,483) scale(1.8,2.2)"/><use href="#dp" transform="translate(1468,662) scale(2.5,2.6)"/><use href="#dp" transform="translate(1374,705) scale(2.2,2.8)"/><use href="#dp" transform="translate(1259,941) scale(2.0,2.2)"/><use href="#dp" transform="translate(1208,568) scale(2.5,2.8)"/><use href="#dp" transform="translate(1237,1129) scale(7.7,8.0)"/><use href="#dp" transform="translate(1222,514) scale(1.3,1.4)"/><use href="#dp" transform="translate(1258,875) scale(4.0,4.4)"/><use href="#dp" transform="translate(1343,841) scale(1.7,1.7)"/><use href="#dp" transform="translate(1268,1176) scale(1.9,2.2)"/><use href="#dp" transform="translate(1587,609) scale(1.5,1.7)"/><use href="#dp" transform="translate(1360,1165) scale(4.3,4.3)"/><use href="#dp" transform="translate(1135,981) scale(3.5,4.0)"/><use href="#dp" transform="translate(1117,741) scale(4.2,5.1)"/><use href="#dp" transform="translate(1647,633) scale(1.4,1.6)"/><use href="#dp" transform="translate(1489,1156) scale(2.1,2.5)"/><use href="#dp" transform="translate(1366,862) scale(2.3,2.4)"/><use href="#dp" transform="translate(1618,933) scale(1.4,1.5)"/><use href="#dp" transform="translate(1464,973) scale(1.3,1.5)"/><use href="#dp" transform="translate(1435,739) scale(2.0,2.0)"/><use href="#dp" transform="translate(1281,793) scale(3.8,4.7)"/><use href="#dp" transform="translate(1376,623) scale(2.5,3.0)"/><use href="#dp" transform="translate(1285,462) scale(2.1,2.4)"/><use href="#dp" transform="translate(1257,949) scale(3.0,3.1)"/><use href="#dp" transform="translate(1301,763) scale(1.5,1.8)"/><use href="#dp" transform="translate(1520,827) scale(2.6,2.8)"/><use href="#dp" transform="translate(1564,620) scale(2.3,2.4)"/><use href="#dp" transform="translate(1636,820) scale(1.5,1.7)"/><use href="#dp" transform="translate(1480,1161) scale(1.8,1.8)"/><use href="#dp" transform="translate(1648,553) scale(1.3,1.4)"/><use href="#dp" transform="translate(1607,1112) scale(2.6,3.2)"/><use href="#dp" transform="translate(1296,586) scale(4.0,4.1)"/><use href="#dp" transform="translate(1479,731) scale(1.7,1.7)"/><use href="#dp" transform="translate(1119,657) scale(2.5,2.6)"/><use href="#dp" transform="translate(1643,602) scale(2.4,2.8)"/><use href="#dp" transform="translate(1353,483) scale(1.7,2.1)"/><use href="#dp" transform="translate(1222,721) scale(2.7,2.9)"/><use href="#dp" transform="translate(1559,1024) scale(1.2,1.3)"/><use href="#dp" transform="translate(1618,640) scale(2.5,2.7)"/><use href="#dp" transform="translate(1265,1168) scale(1.6,1.8)"/><use href="#dp" transform="translate(1289,654) scale(2.3,2.8)"/><use href="#dp" transform="translate(1463,1157) scale(1.5,1.7)"/><use href="#dp" transform="translate(1638,1165) scale(1.6,1.7)"/><use href="#dp" transform="translate(1386,1146) scale(2.3,2.8)"/><use href="#dp" transform="translate(1565,1029) scale(1.7,1.8)"/><use href="#dp" transform="translate(1314,1036) scale(1.5,1.8)"/><use href="#dp" transform="translate(1252,495) scale(2.0,2.1)"/><use href="#dp" transform="translate(1651,1112) scale(6.6,6.7)"/><use href="#dp" transform="translate(1170,822) scale(1.8,1.9)"/><use href="#dp" transform="translate(1344,914) scale(2.2,2.7)"/><use href="#dp" transform="translate(1479,537) scale(3.2,3.6)"/><use href="#dp" transform="translate(1320,1003) scale(1.5,1.6)"/><use href="#dp" transform="translate(1201,1113) scale(1.7,1.8)"/><use href="#dp" transform="translate(1658,829) scale(2.3,2.7)"/><use href="#dp" transform="translate(1657,523) scale(2.3,2.8)"/><use href="#dp" transform="translate(1615,476) scale(1.4,1.4)"/><use href="#dp" transform="translate(1647,886) scale(3.3,4.0)"/><use href="#dp" transform="translate(1362,642) scale(2.5,2.6)"/><use href="#dp" transform="translate(1442,913) scale(1.7,1.8)"/><use href="#dp" transform="translate(1228,638) scale(2.1,2.2)"/><use href="#dp" transform="translate(1123,693) scale(1.5,1.6)"/><use href="#dp" transform="translate(1228,1046) scale(1.3,1.3)"/><use href="#dp" transform="translate(1332,861) scale(1.3,1.4)"/><use href="#dp" transform="translate(1496,755) scale(1.6,2.0)"/><use href="#dp" transform="translate(1287,873) scale(1.8,2.2)"/><use href="#dp" transform="translate(1660,720) scale(2.2,2.3)"/><use href="#dp" transform="translate(1120,1126) scale(2.3,2.6)"/><use href="#dp" transform="translate(1598,794) scale(1.2,1.4)"/><use href="#dp" transform="translate(1466,1132) scale(2.1,2.3)"/><use href="#dp" transform="translate(1392,556) scale(1.9,2.4)"/><use href="#dp" transform="translate(1176,816) scale(4.4,4.7)"/><use href="#dp" transform="translate(1186,1157) scale(7.9,8.0)"/><use href="#dp" transform="translate(1622,738) scale(3.8,4.6)"/><use href="#dp" transform="translate(1204,1039) scale(1.8,2.1)"/><use href="#dp" transform="translate(1569,584) scale(1.8,2.0)"/><use href="#dp" transform="translate(1326,539) scale(2.2,2.7)"/><use href="#dp" transform="translate(1139,870) scale(1.3,1.5)"/><use href="#dp" transform="translate(1181,898) scale(2.1,2.2)"/><use href="#dp" transform="translate(1346,885) scale(2.1,2.4)"/><use href="#dp" transform="translate(1356,464) scale(1.9,2.0)"/><use href="#dp" transform="translate(1533,1034) scale(1.5,1.6)"/><use href="#dp" transform="translate(1175,543) scale(1.3,1.5)"/><use href="#dp" transform="translate(1395,477) scale(1.3,1.6)"/><use href="#dp" transform="translate(1541,832) scale(1.9,2.1)"/><use href="#dp" transform="translate(1635,549) scale(4.5,5.3)"/><use href="#dp" transform="translate(1561,592) scale(8.0,9.9)"/><use href="#dp" transform="translate(1616,570) scale(4.4,4.4)"/><use href="#dp" transform="translate(1308,1016) scale(2.5,2.6)"/><use href="#dp" transform="translate(1562,554) scale(2.5,2.6)"/><use href="#dp" transform="translate(1260,828) scale(1.3,1.3)"/><use href="#dp" transform="translate(1205,1152) scale(2.5,2.6)"/><use href="#dp" transform="translate(1545,533) scale(2.1,2.3)"/><use href="#dp" transform="translate(1593,865) scale(2.4,2.5)"/><use href="#dp" transform="translate(1658,921) scale(2.3,2.5)"/><use href="#dp" transform="translate(1657,881) scale(2.3,2.5)"/><use href="#dp" transform="translate(1213,1007) scale(2.3,2.5)"/><use href="#dp" transform="translate(1465,1188) scale(2.1,2.3)"/><use href="#dp" transform="translate(1118,471) scale(2.1,2.3)"/><use href="#dp" transform="translate(1396,1121) scale(1.5,1.8)"/><use href="#dp" transform="translate(1129,448) scale(1.3,1.5)"/><use href="#dp" transform="translate(1239,886) scale(1.5,1.7)"/><use href="#dp" transform="translate(1376,548) scale(3.1,3.2)"/><use href="#dp" transform="translate(1169,927) scale(4.1,4.5)"/><use href="#dp" transform="translate(1261,455) scale(2.0,2.2)"/><use href="#dp" transform="translate(1469,781) scale(4.0,4.2)"/><use href="#dp" transform="translate(1609,479) scale(1.8,1.9)"/><use href="#dp" transform="translate(1149,1033) scale(2.0,2.4)"/><use href="#dp" transform="translate(1195,596) scale(1.9,2.2)"/><use href="#dp" transform="translate(1560,578) scale(1.6,1.6)"/><use href="#dp" transform="translate(1602,1036) scale(1.2,1.5)"/><use href="#dp" transform="translate(1523,797) scale(1.8,1.9)"/><use href="#dp" transform="translate(1174,621) scale(1.7,2.0)"/><use href="#dp" transform="translate(1496,1083) scale(1.6,1.8)"/><use href="#dp" transform="translate(1355,1040) scale(1.6,1.8)"/><use href="#dp" transform="translate(1643,610) scale(2.6,2.8)"/><use href="#dp" transform="translate(1246,1007) scale(4.0,4.3)"/><use href="#dp" transform="translate(1597,694) scale(2.5,2.9)"/><use href="#dp" transform="translate(1495,948) scale(7.8,9.5)"/><use href="#dp" transform="translate(1497,1093) scale(2.2,2.5)"/><use href="#dp" transform="translate(1285,606) scale(1.3,1.6)"/><use href="#dp" transform="translate(1196,466) scale(2.5,2.7)"/><use href="#dp" transform="translate(1194,468) scale(2.2,2.5)"/><use href="#dp" transform="translate(1497,1002) scale(2.0,2.2)"/><use href="#dp" transform="translate(1563,1064) scale(2.7,3.3)"/><use href="#dp" transform="translate(1615,1158) scale(1.5,1.5)"/><use href="#dp" transform="translate(1136,1085) scale(3.8,4.6)"/><use href="#dp" transform="translate(1461,663) scale(1.3,1.6)"/><use href="#dp" transform="translate(1229,687) scale(1.2,1.3)"/><use href="#dp" transform="translate(1271,986) scale(1.6,2.0)"/><use href="#dp" transform="translate(1392,1088) scale(1.2,1.4)"/><use href="#dp" transform="translate(1355,1029) scale(2.2,2.5)"/><use href="#dp" transform="translate(1235,1096) scale(2.3,2.4)"/><use href="#dp" transform="translate(1118,598) scale(2.6,2.6)"/><use href="#dp" transform="translate(1384,817) scale(3.0,3.3)"/><use href="#dp" transform="translate(1306,1073) scale(2.5,2.7)"/><use href="#dp" transform="translate(1234,973) scale(1.4,1.6)"/><use href="#dp" transform="translate(1161,1040) scale(2.3,2.7)"/><use href="#dp" transform="translate(1311,749) scale(2.4,2.5)"/><use href="#dp" transform="translate(1601,465) scale(1.6,1.9)"/><use href="#dp" transform="translate(1390,732) scale(3.0,3.4)"/><use href="#dp" transform="translate(1407,1015) scale(2.1,2.3)"/><use href="#dp" transform="translate(1295,563) scale(3.9,4.6)"/><use href="#dp" transform="translate(1209,777) scale(2.0,2.1)"/><use href="#dp" transform="translate(1369,1113) scale(1.5,1.6)"/><use href="#dp" transform="translate(1500,1082) scale(1.4,1.5)"/><use href="#dp" transform="translate(1295,840) scale(1.7,1.7)"/><use href="#dp" transform="translate(1648,995) scale(2.5,2.6)"/><use href="#dp" transform="translate(1326,1188) scale(4.0,4.4)"/><use href="#dp" transform="translate(1224,927) scale(1.5,1.6)"/><use href="#dp" transform="translate(1135,747) scale(3.9,4.4)"/><use href="#dp" transform="translate(1462,795) scale(2.0,2.3)"/><use href="#dp" transform="translate(1521,1131) scale(2.0,2.4)"/><use href="#dp" transform="translate(1347,618) scale(2.4,2.9)"/><use href="#dp" transform="translate(1499,1089) scale(2.1,2.3)"/><use href="#dp" transform="translate(1288,920) scale(1.8,2.1)"/><use href="#dp" transform="translate(1506,921) scale(1.8,2.0)"/><use href="#dp" transform="translate(1456,755) scale(2.5,2.6)"/><use href="#dp" transform="translate(1474,1033) scale(1.9,2.3)"/><use href="#dp" transform="translate(1138,856) scale(2.3,2.8)"/><use href="#dp" transform="translate(1400,522) scale(2.0,2.3)"/><use href="#dp" transform="translate(1396,928) scale(3.6,4.0)"/><use href="#dp" transform="translate(1634,604) scale(1.7,2.1)"/><use href="#dp" transform="translate(1184,1188) scale(1.3,1.4)"/><use href="#dp" transform="translate(1335,456) scale(1.8,2.1)"/><use href="#dp" transform="translate(1309,646) scale(2.2,2.8)"/><use href="#dp" transform="translate(1404,611) scale(3.3,3.5)"/><use href="#dp" transform="translate(1187,1032) scale(3.8,4.3)"/><use href="#dp" transform="translate(1423,616) scale(3.3,3.8)"/><use href="#dp" transform="translate(1563,1061) scale(1.6,1.8)"/><use href="#dp" transform="translate(1185,1075) scale(2.4,2.6)"/><use href="#dp" transform="translate(1322,637) scale(1.5,1.5)"/><use href="#dp" transform="translate(1510,658) scale(1.6,1.8)"/><use href="#dp" transform="translate(1351,927) scale(1.7,2.1)"/><use href="#dp" transform="translate(1583,489) scale(4.3,5.2)"/><use href="#dp" transform="translate(1194,1073) scale(1.2,1.2)"/><use href="#dp" transform="translate(1636,941) scale(1.3,1.4)"/><use href="#dp" transform="translate(1244,1031) scale(1.4,1.7)"/><use href="#dp" transform="translate(1548,573) scale(3.8,4.5)"/><use href="#dp" transform="translate(1481,1120) scale(4.2,4.4)"/><use href="#dp" transform="translate(1495,846) scale(1.8,2.2)"/><use href="#dp" transform="translate(1420,645) scale(1.4,1.6)"/><use href="#dp" transform="translate(1149,798) scale(1.9,2.1)"/><use href="#dp" transform="translate(1411,1097) scale(2.4,2.7)"/><use href="#dp" transform="translate(1424,948) scale(3.3,3.7)"/><use href="#dp" transform="translate(1641,503) scale(2.1,2.1)"/><use href="#dp" transform="translate(1449,961) scale(3.2,4.0)"/><use href="#dp" transform="translate(1395,811) scale(2.7,3.1)"/><use href="#dp" transform="translate(1458,701) scale(3.3,3.7)"/><use href="#dp" transform="translate(1403,1027) scale(1.8,2.0)"/><use href="#dp" transform="translate(1419,1069) scale(2.4,2.6)"/><use href="#dp" transform="translate(1392,651) scale(2.6,3.0)"/><use href="#dp" transform="translate(1549,695) scale(1.6,1.9)"/><use href="#dp" transform="translate(1463,1037) scale(2.2,2.7)"/><use href="#dp" transform="translate(1414,483) scale(1.2,1.3)"/><use href="#dp" transform="translate(1619,905) scale(2.3,2.8)"/><use href="#dp" transform="translate(1450,911) scale(2.2,2.5)"/><use href="#dp" transform="translate(1488,606) scale(1.8,2.2)"/><use href="#dp" transform="translate(1172,583) scale(2.3,2.8)"/><use href="#dp" transform="translate(1474,724) scale(4.1,4.7)"/><use href="#dp" transform="translate(1258,674) scale(1.6,1.8)"/><use href="#dp" transform="translate(1467,1150) scale(2.0,2.0)"/><use href="#dp" transform="translate(1182,1057) scale(2.5,2.8)"/><use href="#dp" transform="translate(1125,738) scale(2.5,3.1)"/><use href="#dp" transform="translate(1376,757) scale(2.1,2.2)"/><use href="#dp" transform="translate(1200,458) scale(2.2,2.2)"/><use href="#dp" transform="translate(1644,512) scale(2.8,2.9)"/><use href="#dp" transform="translate(1509,629) scale(1.5,1.5)"/><use href="#dp" transform="translate(1539,984) scale(4.0,4.1)"/><use href="#dp" transform="translate(1460,981) scale(2.5,2.7)"/><use href="#dp" transform="translate(1643,987) scale(1.2,1.4)"/><use href="#dp" transform="translate(1562,506) scale(2.2,2.3)"/><use href="#dp" transform="translate(1586,813) scale(1.7,2.0)"/><use href="#dp" transform="translate(1356,956) scale(2.3,2.5)"/><use href="#dp" transform="translate(1468,921) scale(1.7,2.1)"/><use href="#dp" transform="translate(1632,1038) scale(1.6,1.6)"/><use href="#dp" transform="translate(1648,976) scale(3.2,3.7)"/><use href="#dp" transform="translate(1650,1073) scale(1.6,1.8)"/><use href="#dp" transform="translate(1601,730) scale(2.0,2.5)"/><use href="#dp" transform="translate(1557,660) scale(1.6,1.7)"/><use href="#dp" transform="translate(1437,1061) scale(2.7,3.2)"/><use href="#dp" transform="translate(1559,1100) scale(1.6,1.9)"/><use href="#dp" transform="translate(1557,962) scale(3.3,3.3)"/><use href="#dp" transform="translate(1419,1047) scale(2.3,2.8)"/><use href="#dp" transform="translate(1245,904) scale(1.9,1.9)"/><use href="#dp" transform="translate(1256,1012) scale(3.5,3.5)"/><use href="#dp" transform="translate(1557,1028) scale(2.0,2.5)"/><use href="#dp" transform="translate(1599,839) scale(2.0,2.1)"/><use href="#dp" transform="translate(1222,582) scale(1.7,1.9)"/><use href="#dp" transform="translate(1336,836) scale(1.3,1.6)"/><use href="#dp" transform="translate(1321,526) scale(2.3,2.4)"/><use href="#dp" transform="translate(1442,706) scale(1.2,1.2)"/><use href="#dp" transform="translate(1657,1099) scale(2.0,2.1)"/><use href="#dp" transform="translate(1542,767) scale(4.1,4.9)"/><use href="#dp" transform="translate(1642,638) scale(1.5,1.5)"/><use href="#dp" transform="translate(1163,484) scale(2.4,2.7)"/><use href="#dp" transform="translate(1633,1132) scale(2.0,2.2)"/><use href="#dp" transform="translate(1182,1169) scale(2.0,2.3)"/><use href="#dp" transform="translate(1638,951) scale(1.8,1.9)"/><use href="#dp" transform="translate(1643,1194) scale(1.3,1.3)"/><use href="#dp" transform="translate(1309,1127) scale(4.2,4.2)"/><use href="#dp" transform="translate(1546,981) scale(2.6,2.6)"/><use href="#dp" transform="translate(1196,1015) scale(3.9,4.2)"/><use href="#dp" transform="translate(1439,1017) scale(1.7,1.8)"/><use href="#dp" transform="translate(1185,809) scale(1.5,1.6)"/><use href="#dp" transform="translate(1486,456) scale(1.5,1.5)"/><use href="#dp" transform="translate(1623,612) scale(4.2,5.2)"/><use href="#dp" transform="translate(1193,783) scale(2.5,3.0)"/><use href="#dp" transform="translate(1459,787) scale(2.4,2.6)"/><use href="#dp" transform="translate(1459,554) scale(1.3,1.5)"/><use href="#dp" transform="translate(1419,555) scale(3.1,3.4)"/><use href="#dp" transform="translate(1202,650) scale(3.2,3.4)"/><use href="#dp" transform="translate(1385,686) scale(2.8,3.5)"/><use href="#dp" transform="translate(1148,1121) scale(1.5,1.7)"/><use href="#dp" transform="translate(1273,640) scale(1.7,2.1)"/><use href="#dp" transform="translate(1661,1144) scale(1.6,2.0)"/><use href="#dp" transform="translate(1148,994) scale(2.6,2.6)"/><use href="#dp" transform="translate(1557,703) scale(1.2,1.5)"/><use href="#dp" transform="translate(1404,586) scale(2.5,2.6)"/><use href="#dp" transform="translate(1428,550) scale(2.3,2.7)"/><use href="#dp" transform="translate(1224,506) scale(2.1,2.3)"/><use href="#dp" transform="translate(1266,601) scale(2.2,2.6)"/><use href="#dp" transform="translate(1435,599) scale(2.2,2.5)"/><use href="#dp" transform="translate(1510,488) scale(3.2,3.9)"/><use href="#dp" transform="translate(1588,818) scale(2.5,2.8)"/><use href="#dp" transform="translate(1592,647) scale(2.4,2.6)"/><use href="#dp" transform="translate(1206,726) scale(1.2,1.4)"/><use href="#dp" transform="translate(1360,835) scale(2.2,2.6)"/><use href="#dp" transform="translate(1589,688) scale(1.7,2.1)"/><use href="#dp" transform="translate(1150,1104) scale(3.5,4.0)"/><use href="#dp" transform="translate(1406,851) scale(2.6,2.7)"/><use href="#dp" transform="translate(1216,523) scale(2.3,2.4)"/><use href="#dp" transform="translate(1170,973) scale(1.2,1.4)"/><use href="#dp" transform="translate(1431,840) scale(1.3,1.6)"/><use href="#dp" transform="translate(1508,480) scale(1.9,2.1)"/><use href="#dp" transform="translate(1269,538) scale(1.4,1.6)"/><use href="#dp" transform="translate(1586,557) scale(2.2,2.3)"/><use href="#dp" transform="translate(1567,1153) scale(1.8,2.2)"/><use href="#dp" transform="translate(1403,744) scale(4.1,4.4)"/><use href="#dp" transform="translate(1248,699) scale(2.6,3.1)"/><use href="#dp" transform="translate(1614,1061) scale(2.7,3.1)"/><use href="#dp" transform="translate(1639,1150) scale(1.8,2.1)"/><use href="#dp" transform="translate(1316,846) scale(1.8,2.0)"/><use href="#dp" transform="translate(1128,551) scale(4.1,5.0)"/><use href="#dp" transform="translate(1462,1056) scale(4.3,4.3)"/><use href="#dp" transform="translate(1467,646) scale(1.6,1.8)"/><use href="#dp" transform="translate(1621,914) scale(1.9,2.1)"/><use href="#dp" transform="translate(1635,663) scale(2.1,2.2)"/><use href="#dp" transform="translate(1441,1167) scale(1.6,1.8)"/><use href="#dp" transform="translate(1408,558) scale(1.4,1.5)"/><use href="#dp" transform="translate(1339,663) scale(1.3,1.5)"/><use href="#dp" transform="translate(1575,906) scale(2.1,2.2)"/><use href="#dp" transform="translate(1504,794) scale(2.1,2.3)"/><use href="#dp" transform="translate(1286,629) scale(1.9,2.1)"/><use href="#dp" transform="translate(1436,455) scale(2.4,2.6)"/><use href="#dp" transform="translate(1420,817) scale(2.6,2.8)"/><use href="#dp" transform="translate(1538,566) scale(2.4,2.7)"/><use href="#dp" transform="translate(1151,738) scale(2.2,2.3)"/><use href="#dp" transform="translate(1240,1169) scale(1.4,1.5)"/><use href="#dp" transform="translate(1309,955) scale(2.4,2.9)"/><use href="#dp" transform="translate(1399,1003) scale(2.3,2.5)"/><use href="#dp" transform="translate(1545,980) scale(2.8,3.5)"/><use href="#dp" transform="translate(1119,1023) scale(1.9,2.4)"/><use href="#dp" transform="translate(1429,761) scale(4.3,4.9)"/><use href="#dp" transform="translate(1324,787) scale(2.2,2.4)"/><use href="#dp" transform="translate(1330,865) scale(1.7,2.0)"/><use href="#dp" transform="translate(1580,823) scale(1.5,1.6)"/><use href="#dp" transform="translate(1196,880) scale(1.3,1.6)"/><use href="#dp" transform="translate(1294,1082) scale(4.4,4.6)"/><use href="#dp" transform="translate(1349,1133) scale(1.3,1.4)"/><use href="#dp" transform="translate(1388,1140) scale(2.0,2.4)"/><use href="#dp" transform="translate(1399,836) scale(1.7,1.9)"/><use href="#dp" transform="translate(1441,711) scale(3.9,4.4)"/><use href="#dp" transform="translate(1171,728) scale(2.0,2.3)"/><use href="#dp" transform="translate(1597,1173) scale(1.8,2.1)"/><use href="#dp" transform="translate(1660,705) scale(2.3,2.4)"/><use href="#dp" transform="translate(1290,1184) scale(3.6,3.7)"/><use href="#dp" transform="translate(1605,966) scale(4.5,5.5)"/><use href="#dp" transform="translate(1346,564) scale(1.9,2.2)"/><use href="#dp" transform="translate(1220,584) scale(2.0,2.2)"/><use href="#dp" transform="translate(1659,926) scale(1.8,2.1)"/><use href="#dp" transform="translate(1284,967) scale(1.6,2.0)"/><use href="#dp" transform="translate(1436,950) scale(1.9,2.2)"/><use href="#dp" transform="translate(1262,934) scale(2.6,3.0)"/><use href="#dp" transform="translate(1341,538) scale(2.3,2.3)"/><use href="#dp" transform="translate(1172,575) scale(2.4,2.7)"/><use href="#dp" transform="translate(1557,493) scale(2.3,2.5)"/><use href="#dp" transform="translate(1507,713) scale(1.6,1.6)"/><use href="#dp" transform="translate(1610,885) scale(1.8,2.0)"/><use href="#dp" transform="translate(1147,1117) scale(2.5,2.8)"/><use href="#dp" transform="translate(1455,634) scale(2.5,3.0)"/><use href="#dp" transform="translate(1289,1124) scale(3.2,3.7)"/><use href="#dp" transform="translate(1640,820) scale(3.1,3.4)"/><use href="#dp" transform="translate(1509,613) scale(2.4,2.7)"/><use href="#dp" transform="translate(1549,630) scale(1.7,1.8)"/><use href="#dp" transform="translate(1646,665) scale(1.4,1.5)"/><use href="#dp" transform="translate(1327,750) scale(1.4,1.7)"/><use href="#dp" transform="translate(1308,631) scale(1.6,1.7)"/><use href="#dp" transform="translate(1136,947) scale(1.4,1.7)"/><use href="#dp" transform="translate(1167,649) scale(2.8,3.2)"/><use href="#dp" transform="translate(1573,1053) scale(1.7,2.0)"/><use href="#dp" transform="translate(1322,1169) scale(2.5,2.9)"/><use href="#dp" transform="translate(1241,787) scale(2.2,2.3)"/><use href="#dp" transform="translate(1607,889) scale(1.5,1.8)"/><use href="#dp" transform="translate(1233,1104) scale(1.9,2.2)"/><use href="#dp" transform="translate(1264,1028) scale(2.1,2.4)"/><use href="#dp" transform="translate(1286,740) scale(1.4,1.8)"/><use href="#dp" transform="translate(1292,946) scale(2.0,2.2)"/><use href="#dp" transform="translate(1390,670) scale(1.6,1.7)"/><use href="#dp" transform="translate(1186,986) scale(1.8,2.2)"/><use href="#dp" transform="translate(1539,1112) scale(2.9,3.0)"/><use href="#dp" transform="translate(1133,958) scale(1.7,1.9)"/><use href="#dp" transform="translate(1476,973) scale(2.4,2.6)"/><use href="#dp" transform="translate(1460,583) scale(2.5,2.9)"/><use href="#dp" transform="translate(1505,477) scale(1.4,1.5)"/><use href="#dp" transform="translate(1282,733) scale(1.6,1.9)"/><use href="#dp" transform="translate(1215,1079) scale(2.2,2.3)"/><use href="#dp" transform="translate(1354,962) scale(1.2,1.5)"/><use href="#dp" transform="translate(1540,662) scale(2.4,2.8)"/><use href="#dp" transform="translate(1143,630) scale(2.3,2.4)"/><use href="#dp" transform="translate(1615,1011) scale(2.2,2.4)"/><use href="#dp" transform="translate(1524,1071) scale(1.3,1.6)"/><use href="#dp" transform="translate(1348,1147) scale(2.2,2.7)"/><use href="#dp" transform="translate(1459,787) scale(2.2,2.4)"/><use href="#dp" transform="translate(1396,1146) scale(2.3,2.3)"/><use href="#dp" transform="translate(1500,1054) scale(2.0,2.4)"/><use href="#dp" transform="translate(1464,856) scale(1.3,1.4)"/><use href="#dp" transform="translate(1341,598) scale(1.4,1.6)"/><use href="#dp" transform="translate(1482,625) scale(1.9,2.1)"/><use href="#dp" transform="translate(1627,711) scale(2.4,2.5)"/><use href="#dp" transform="translate(1424,698) scale(3.6,4.3)"/><use href="#dp" transform="translate(1209,949) scale(1.8,2.2)"/><use href="#dp" transform="translate(1570,532) scale(1.7,1.8)"/><use href="#dp" transform="translate(1150,658) scale(2.2,2.4)"/><use href="#dp" transform="translate(1179,691) scale(1.7,1.8)"/><use href="#dp" transform="translate(1156,454) scale(9.5,9.7)"/><use href="#dp" transform="translate(1508,1185) scale(1.4,1.5)"/><use href="#dp" transform="translate(1354,589) scale(1.2,1.5)"/><use href="#dp" transform="translate(1468,919) scale(3.8,4.1)"/><use href="#dp" transform="translate(1251,551) scale(2.3,2.8)"/><use href="#dp" transform="translate(1278,586) scale(2.4,2.9)"/><use href="#dp" transform="translate(1209,1038) scale(4.0,4.3)"/><use href="#dp" transform="translate(1218,1068) scale(1.7,2.0)"/><use href="#dp" transform="translate(1318,1073) scale(1.3,1.4)"/><use href="#dp" transform="translate(1459,1064) scale(2.5,3.1)"/><use href="#dp" transform="translate(1386,823) scale(1.6,1.9)"/><use href="#dp" transform="translate(1161,965) scale(1.8,2.3)"/><use href="#dp" transform="translate(1166,476) scale(1.5,1.7)"/><use href="#dp" transform="translate(1119,1080) scale(4.1,4.5)"/><use href="#dp" transform="translate(1271,945) scale(1.8,1.9)"/><use href="#dp" transform="translate(1356,948) scale(4.3,4.5)"/><use href="#dp" transform="translate(1278,780) scale(1.7,1.8)"/><use href="#dp" transform="translate(1163,690) scale(2.6,3.1)"/><use href="#dp" transform="translate(1589,1181) scale(3.8,4.5)"/><use href="#dp" transform="translate(1150,956) scale(1.6,1.8)"/><use href="#dp" transform="translate(1636,808) scale(1.6,1.8)"/><use href="#dp" transform="translate(1599,467) scale(2.2,2.4)"/><use href="#dp" transform="translate(1163,944) scale(2.0,2.2)"/><use href="#dp" transform="translate(1406,872) scale(1.4,1.4)"/><use href="#dp" transform="translate(1602,859) scale(2.4,2.6)"/><use href="#dp" transform="translate(1169,846) scale(1.9,2.1)"/><use href="#dp" transform="translate(1240,878) scale(1.9,2.2)"/><use href="#dp" transform="translate(1161,754) scale(1.8,2.2)"/><use href="#dp" transform="translate(1417,985) scale(1.4,1.7)"/><use href="#dp" transform="translate(1510,523) scale(3.3,3.5)"/><use href="#dp" transform="translate(1640,871) scale(1.4,1.7)"/><use href="#dp" transform="translate(1148,625) scale(1.2,1.4)"/><use href="#dp" transform="translate(1233,672) scale(1.8,2.2)"/><use href="#dp" transform="translate(1456,1104) scale(2.5,3.0)"/><use href="#dp" transform="translate(1209,1008) scale(2.3,2.7)"/><use href="#dp" transform="translate(1567,539) scale(2.2,2.8)"/><use href="#dp" transform="translate(1510,479) scale(1.3,1.5)"/><use href="#dp" transform="translate(1555,531) scale(3.9,4.1)"/><use href="#dp" transform="translate(1222,783) scale(3.7,3.8)"/><use href="#dp" transform="translate(1128,529) scale(3.0,3.4)"/><use href="#dp" transform="translate(1275,964) scale(1.4,1.7)"/><use href="#dp" transform="translate(1410,966) scale(4.4,4.4)"/><use href="#dp" transform="translate(1304,560) scale(2.4,2.9)"/><use href="#dp" transform="translate(1136,583) scale(3.9,4.3)"/><use href="#dp" transform="translate(1376,565) scale(3.3,4.1)"/><use href="#dp" transform="translate(1450,503) scale(1.5,1.8)"/><use href="#dp" transform="translate(1438,479) scale(1.7,1.9)"/><use href="#dp" transform="translate(1431,738) scale(1.2,1.4)"/><use href="#dp" transform="translate(1299,461) scale(2.6,2.6)"/><use href="#dp" transform="translate(1196,952) scale(1.6,1.8)"/><use href="#dp" transform="translate(1260,875) scale(2.5,3.2)"/><use href="#dp" transform="translate(1136,869) scale(2.4,2.9)"/><use href="#dp" transform="translate(1462,925) scale(1.6,1.9)"/><use href="#dp" transform="translate(1593,1154) scale(1.6,1.9)"/><use href="#dp" transform="translate(1520,830) scale(1.7,1.9)"/><use href="#dp" transform="translate(1338,492) scale(1.7,2.1)"/><use href="#dp" transform="translate(1379,723) scale(1.5,1.7)"/><use href="#dp" transform="translate(1191,451) scale(3.5,3.8)"/><use href="#dp" transform="translate(1427,674) scale(1.3,1.4)"/><use href="#dp" transform="translate(1285,994) scale(2.5,2.7)"/><use href="#dp" transform="translate(1619,886) scale(1.5,1.7)"/><use href="#dp" transform="translate(1655,715) scale(1.8,2.2)"/><use href="#dp" transform="translate(1154,811) scale(3.1,3.3)"/><use href="#dp" transform="translate(1130,570) scale(2.2,2.3)"/><use href="#dp" transform="translate(1335,597) scale(2.4,2.8)"/><use href="#dp" transform="translate(1224,999) scale(3.7,3.8)"/><use href="#dp" transform="translate(1558,1106) scale(1.4,1.5)"/><use href="#dp" transform="translate(1410,1106) scale(2.5,2.6)"/><use href="#dp" transform="translate(1295,1011) scale(1.8,2.1)"/><use href="#dp" transform="translate(1301,489) scale(1.3,1.5)"/><use href="#dp" transform="translate(1299,819) scale(1.6,1.7)"/><use href="#dp" transform="translate(1124,1144) scale(2.6,2.6)"/><use href="#dp" transform="translate(1452,992) scale(1.3,1.4)"/><use href="#dp" transform="translate(1195,1024) scale(2.3,2.6)"/><use href="#dp" transform="translate(1411,890) scale(2.1,2.4)"/><use href="#dp" transform="translate(1297,1005) scale(2.2,2.6)"/><use href="#dp" transform="translate(1540,679) scale(2.6,2.9)"/><use href="#dp" transform="translate(1269,841) scale(2.9,2.9)"/><use href="#dp" transform="translate(1376,940) scale(1.7,2.1)"/><use href="#dp" transform="translate(1241,1016) scale(1.2,1.3)"/><use href="#dp" transform="translate(1150,824) scale(1.5,1.8)"/><use href="#dp" transform="translate(1316,559) scale(2.2,2.7)"/><use href="#dp" transform="translate(1205,468) scale(1.5,1.9)"/><use href="#dp" transform="translate(1389,926) scale(2.3,2.6)"/><use href="#dp" transform="translate(1293,1127) scale(2.2,2.3)"/><use href="#dp" transform="translate(1469,749) scale(2.7,3.1)"/><use href="#dp" transform="translate(1340,1139) scale(3.8,4.0)"/><use href="#dp" transform="translate(1254,644) scale(1.5,1.6)"/><use href="#dp" transform="translate(1531,931) scale(2.6,2.7)"/><use href="#dp" transform="translate(1427,564) scale(4.3,4.5)"/><use href="#dp" transform="translate(1527,1066) scale(1.7,1.9)"/><use href="#dp" transform="translate(1603,568) scale(2.0,2.3)"/><use href="#dp" transform="translate(1433,1112) scale(2.4,2.7)"/><use href="#dp" transform="translate(1542,1097) scale(2.4,3.0)"/><use href="#dp" transform="translate(1279,464) scale(2.6,2.6)"/><use href="#dp" transform="translate(1614,560) scale(1.3,1.4)"/><use href="#dp" transform="translate(1489,514) scale(2.5,2.9)"/><use href="#dp" transform="translate(1598,1185) scale(1.5,1.8)"/><use href="#dp" transform="translate(1493,475) scale(1.5,1.7)"/><use href="#dp" transform="translate(1174,461) scale(6.9,8.4)"/><use href="#dp" transform="translate(1183,813) scale(1.8,1.9)"/><use href="#dp" transform="translate(1491,558) scale(1.9,2.0)"/><use href="#dp" transform="translate(1310,820) scale(3.3,3.4)"/><use href="#dp" transform="translate(1644,1112) scale(1.6,1.7)"/><use href="#dp" transform="translate(1261,498) scale(1.9,2.1)"/><use href="#dp" transform="translate(1420,719) scale(2.2,2.5)"/><use href="#dp" transform="translate(1413,860) scale(2.6,3.1)"/><use href="#dp" transform="translate(1508,747) scale(1.8,2.2)"/><use href="#dp" transform="translate(1328,737) scale(1.4,1.7)"/><use href="#dp" transform="translate(1120,904) scale(3.1,3.6)"/><use href="#dp" transform="translate(1322,628) scale(1.4,1.6)"/><use href="#dp" transform="translate(1544,1131) scale(2.2,2.3)"/><use href="#dp" transform="translate(1469,860) scale(2.6,2.6)"/><use href="#dp" transform="translate(1524,1090) scale(2.0,2.5)"/><use href="#dp" transform="translate(1245,921) scale(1.7,2.0)"/><use href="#dp" transform="translate(1331,843) scale(2.1,2.3)"/><use href="#dp" transform="translate(1460,855) scale(2.1,2.2)"/><use href="#dp" transform="translate(1612,803) scale(1.9,2.2)"/><use href="#dp" transform="translate(1238,553) scale(3.6,4.1)"/><use href="#dp" transform="translate(1404,1059) scale(1.4,1.7)"/><use href="#dp" transform="translate(1368,929) scale(4.3,5.2)"/><use href="#dp" transform="translate(1141,733) scale(4.2,4.3)"/><use href="#dp" transform="translate(1201,636) scale(1.7,2.0)"/><use href="#dp" transform="translate(1401,787) scale(1.8,2.2)"/><use href="#dp" transform="translate(1496,785) scale(2.3,2.8)"/><use href="#dp" transform="translate(1199,959) scale(1.9,2.0)"/><use href="#dp" transform="translate(1319,702) scale(1.2,1.3)"/><use href="#dp" transform="translate(1428,490) scale(2.2,2.4)"/><use href="#dp" transform="translate(1294,628) scale(2.8,3.2)"/><use href="#dp" transform="translate(1585,598) scale(2.3,2.7)"/><use href="#dp" transform="translate(1320,479) scale(1.7,2.0)"/><use href="#dp" transform="translate(1278,754) scale(2.3,2.5)"/><use href="#dp" transform="translate(1327,882) scale(3.0,3.7)"/><use href="#dp" transform="translate(1505,727) scale(1.7,1.7)"/><use href="#dp" transform="translate(1529,732) scale(1.9,2.3)"/><use href="#dp" transform="translate(1530,465) scale(1.8,2.1)"/><use href="#dp" transform="translate(1575,759) scale(2.4,2.7)"/><use href="#dp" transform="translate(1385,832) scale(3.9,4.6)"/><use href="#dp" transform="translate(1336,477) scale(2.0,2.4)"/><use href="#dp" transform="translate(1537,535) scale(1.3,1.6)"/><use href="#dp" transform="translate(1172,513) scale(2.0,2.0)"/><use href="#dp" transform="translate(1488,982) scale(1.3,1.5)"/><use href="#dp" transform="translate(1345,886) scale(9.9,12.1)"/><use href="#dp" transform="translate(1196,698) scale(1.2,1.5)"/><use href="#dp" transform="translate(1267,644) scale(1.6,1.9)"/><use href="#dp" transform="translate(1420,831) scale(1.3,1.4)"/><use href="#dp" transform="translate(1589,1051) scale(3.1,3.2)"/><use href="#dp" transform="translate(1145,851) scale(1.8,2.1)"/><use href="#dp" transform="translate(1435,722) scale(3.0,3.7)"/><use href="#dp" transform="translate(1420,485) scale(1.9,2.1)"/><use href="#dp" transform="translate(1425,690) scale(2.3,2.5)"/><use href="#dp" transform="translate(1504,1051) scale(1.8,2.3)"/><use href="#dp" transform="translate(1359,1108) scale(1.8,2.1)"/><use href="#dp" transform="translate(1144,1096) scale(2.0,2.1)"/><use href="#dp" transform="translate(1620,869) scale(3.5,4.1)"/><use href="#dp" transform="translate(1485,668) scale(2.4,2.5)"/><use href="#dp" transform="translate(1617,602) scale(1.3,1.6)"/><use href="#dp" transform="translate(1635,759) scale(1.6,1.9)"/><use href="#dp" transform="translate(1491,563) scale(2.2,2.2)"/><use href="#dp" transform="translate(1573,667) scale(2.0,2.2)"/><use href="#dp" transform="translate(1423,562) scale(3.2,3.9)"/><use href="#dp" transform="translate(1200,1049) scale(7.3,7.4)"/><use href="#dp" transform="translate(1324,929) scale(2.0,2.0)"/><use href="#dp" transform="translate(1370,995) scale(2.2,2.2)"/><use href="#dp" transform="translate(1569,538) scale(4.5,5.5)"/><use href="#dp" transform="translate(1404,665) scale(2.3,2.5)"/><use href="#dp" transform="translate(1624,516) scale(2.4,2.8)"/><use href="#dp" transform="translate(1412,513) scale(1.6,1.9)"/><use href="#dp" transform="translate(1578,617) scale(2.7,3.1)"/><use href="#dp" transform="translate(1644,706) scale(3.8,3.9)"/><use href="#dp" transform="translate(1299,785) scale(2.2,2.3)"/><use href="#dp" transform="translate(1546,671) scale(2.0,2.0)"/><use href="#dp" transform="translate(1418,1040) scale(1.8,1.9)"/><use href="#dp" transform="translate(1397,519) scale(1.4,1.6)"/><use href="#dp" transform="translate(1309,729) scale(1.4,1.5)"/><use href="#dp" transform="translate(1630,696) scale(4.3,4.8)"/><use href="#dp" transform="translate(1198,517) scale(2.8,3.2)"/><use href="#dp" transform="translate(1409,535) scale(1.4,1.6)"/><use href="#dp" transform="translate(1393,723) scale(1.8,1.9)"/><use href="#dp" transform="translate(1186,627) scale(3.6,4.3)"/><use href="#dp" transform="translate(1125,1157) scale(2.3,2.6)"/><use href="#dp" transform="translate(1492,619) scale(1.4,1.5)"/><use href="#dp" transform="translate(1134,743) scale(1.6,2.0)"/><use href="#dp" transform="translate(1163,882) scale(2.0,2.4)"/><use href="#dp" transform="translate(1504,493) scale(2.0,2.5)"/><use href="#dp" transform="translate(1139,912) scale(2.3,2.5)"/><use href="#dp" transform="translate(1559,794) scale(2.6,3.2)"/><use href="#dp" transform="translate(1342,753) scale(1.5,1.8)"/><use href="#dp" transform="translate(1487,560) scale(1.4,1.5)"/><use href="#dp" transform="translate(1237,696) scale(11.0,13.2)"/><use href="#dp" transform="translate(1378,821) scale(2.5,2.9)"/><use href="#dp" transform="translate(1464,596) scale(2.4,2.9)"/><use href="#dp" transform="translate(1167,987) scale(1.4,1.8)"/><use href="#dp" transform="translate(1484,1008) scale(2.4,2.9)"/><use href="#dp" transform="translate(1610,1008) scale(4.1,4.7)"/><use href="#dp" transform="translate(1354,1068) scale(4.3,4.6)"/><use href="#dp" transform="translate(1641,847) scale(2.8,3.5)"/><use href="#dp" transform="translate(1546,636) scale(3.0,3.2)"/><use href="#dp" transform="translate(1367,624) scale(2.5,2.9)"/><use href="#dp" transform="translate(1504,742) scale(4.1,4.8)"/><use href="#dp" transform="translate(1630,1069) scale(1.3,1.5)"/><use href="#dp" transform="translate(1573,702) scale(2.4,2.8)"/><use href="#dp" transform="translate(1119,815) scale(1.4,1.6)"/><use href="#dp" transform="translate(1345,902) scale(1.7,1.8)"/><use href="#dp" transform="translate(1310,1083) scale(1.6,1.6)"/><use href="#dp" transform="translate(1265,975) scale(2.1,2.6)"/><use href="#dp" transform="translate(1183,961) scale(2.4,2.5)"/><use href="#dp" transform="translate(1265,1168) scale(1.5,1.9)"/><use href="#dp" transform="translate(1450,1120) scale(1.9,2.4)"/><use href="#dp" transform="translate(1393,1191) scale(2.4,2.5)"/><use href="#dp" transform="translate(1404,446) scale(2.5,2.8)"/><use href="#dp" transform="translate(1558,635) scale(1.3,1.5)"/><use href="#dp" transform="translate(1587,833) scale(2.5,3.1)"/><use href="#dp" transform="translate(1480,503) scale(1.8,2.3)"/><use href="#dp" transform="translate(1314,945) scale(1.7,2.0)"/><use href="#dp" transform="translate(1486,1130) scale(1.7,2.1)"/><use href="#dp" transform="translate(1148,1075) scale(2.0,2.2)"/><use href="#dp" transform="translate(1526,1118) scale(2.2,2.3)"/><use href="#dp" transform="translate(1294,549) scale(4.3,4.4)"/><use href="#dp" transform="translate(1437,881) scale(1.7,2.1)"/><use href="#dp" transform="translate(1467,658) scale(1.6,1.8)"/><use href="#dp" transform="translate(1346,1184) scale(2.3,2.7)"/><use href="#dp" transform="translate(1324,1172) scale(2.2,2.3)"/><use href="#dp" transform="translate(1205,880) scale(4.1,4.5)"/><use href="#dp" transform="translate(1193,835) scale(2.9,3.4)"/><use href="#dp" transform="translate(1210,681) scale(1.6,1.8)"/><use href="#dp" transform="translate(1644,1171) scale(1.6,2.0)"/><use href="#dp" transform="translate(1225,688) scale(1.4,1.4)"/><use href="#dp" transform="translate(1332,737) scale(3.1,3.3)"/><use href="#dp" transform="translate(1612,785) scale(3.8,4.6)"/><use href="#dp" transform="translate(1289,561) scale(1.9,2.1)"/><use href="#dp" transform="translate(1482,1013) scale(1.7,2.1)"/><use href="#dp" transform="translate(1405,663) scale(1.6,1.9)"/><use href="#dp" transform="translate(1140,1069) scale(1.7,2.1)"/><use href="#dp" transform="translate(1262,630) scale(2.0,2.3)"/><use href="#dp" transform="translate(1487,757) scale(2.8,3.0)"/><use href="#dp" transform="translate(1468,1175) scale(2.2,2.6)"/><use href="#dp" transform="translate(1332,1155) scale(1.7,1.8)"/><use href="#dp" transform="translate(1556,710) scale(2.4,2.7)"/><use href="#dp" transform="translate(1401,951) scale(2.9,3.1)"/><use href="#dp" transform="translate(1153,758) scale(2.4,2.8)"/><use href="#dp" transform="translate(1432,750) scale(1.6,1.9)"/><use href="#dp" transform="translate(1547,1078) scale(2.1,2.5)"/><use href="#dp" transform="translate(1390,1123) scale(4.0,4.8)"/><use href="#dp" transform="translate(1471,1109) scale(2.2,2.6)"/><use href="#dp" transform="translate(1451,653) scale(2.0,2.5)"/><use href="#dp" transform="translate(1266,607) scale(1.3,1.6)"/><use href="#dp" transform="translate(1648,1051) scale(2.2,2.2)"/><use href="#dp" transform="translate(1574,691) scale(2.1,2.2)"/><use href="#dp" transform="translate(1267,491) scale(2.0,2.4)"/><use href="#dp" transform="translate(1139,1070) scale(1.5,1.8)"/><use href="#dp" transform="translate(1302,696) scale(1.5,1.8)"/><use href="#dp" transform="translate(1231,1079) scale(3.6,3.6)"/><use href="#dp" transform="translate(1541,467) scale(1.8,1.8)"/><use href="#dp" transform="translate(1460,992) scale(1.8,2.0)"/><use href="#dp" transform="translate(1438,617) scale(4.5,5.4)"/><use href="#dp" transform="translate(1641,694) scale(5.4,6.1)"/><use href="#dp" transform="translate(1190,788) scale(2.2,2.4)"/><use href="#dp" transform="translate(1303,589) scale(1.6,1.7)"/><use href="#dp" transform="translate(1518,835) scale(1.5,1.7)"/><use href="#dp" transform="translate(1224,646) scale(2.2,2.7)"/><use href="#dp" transform="translate(1524,1161) scale(4.0,4.7)"/><use href="#dp" transform="translate(1151,601) scale(2.4,2.8)"/><use href="#dp" transform="translate(1460,645) scale(1.4,1.7)"/><use href="#dp" transform="translate(1657,677) scale(1.4,1.6)"/><use href="#dp" transform="translate(1607,1053) scale(1.3,1.4)"/><use href="#dp" transform="translate(1201,1032) scale(2.6,3.2)"/><use href="#dp" transform="translate(1550,805) scale(2.8,2.9)"/><use href="#dp" transform="translate(1424,829) scale(1.6,1.6)"/><use href="#dp" transform="translate(1612,982) scale(4.5,5.0)"/><use href="#dp" transform="translate(1516,736) scale(4.2,4.3)"/><use href="#dp" transform="translate(1124,607) scale(1.7,1.7)"/><use href="#dp" transform="translate(1570,1039) scale(1.3,1.5)"/><use href="#dp" transform="translate(1408,500) scale(2.1,2.5)"/><use href="#dp" transform="translate(1381,928) scale(1.5,1.9)"/><use href="#dp" transform="translate(1326,524) scale(1.4,1.4)"/><use href="#dp" transform="translate(1366,887) scale(2.2,2.4)"/><use href="#dp" transform="translate(1154,992) scale(1.9,2.0)"/><use href="#dp" transform="translate(1484,984) scale(2.1,2.5)"/><use href="#dp" transform="translate(1374,553) scale(3.7,3.8)"/><use href="#dp" transform="translate(1247,1190) scale(1.7,2.1)"/><use href="#dp" transform="translate(1566,924) scale(1.3,1.3)"/><use href="#dp" transform="translate(1649,1051) scale(1.3,1.3)"/><use href="#dp" transform="translate(1624,612) scale(2.5,2.9)"/><use href="#dp" transform="translate(1618,644) scale(1.2,1.5)"/><use href="#dp" transform="translate(1174,1180) scale(1.5,1.8)"/><use href="#dp" transform="translate(1206,832) scale(2.3,2.8)"/><use href="#dp" transform="translate(1616,448) scale(3.7,4.4)"/><use href="#dp" transform="translate(1391,913) scale(2.3,2.4)"/><use href="#dp" transform="translate(1147,857) scale(1.8,1.8)"/><use href="#dp" transform="translate(1523,464) scale(4.1,4.6)"/><use href="#dp" transform="translate(1184,936) scale(1.8,1.9)"/><use href="#dp" transform="translate(1649,858) scale(1.3,1.6)"/><use href="#dp" transform="translate(1580,1086) scale(1.7,1.8)"/><use href="#dp" transform="translate(1533,557) scale(2.6,3.1)"/><use href="#dp" transform="translate(1121,503) scale(2.2,2.5)"/><use href="#dp" transform="translate(1400,790) scale(2.1,2.4)"/><use href="#dp" transform="translate(1616,998) scale(4.3,5.2)"/><use href="#dp" transform="translate(1508,469) scale(2.4,2.6)"/><use href="#dp" transform="translate(1596,582) scale(3.4,4.0)"/><use href="#dp" transform="translate(1255,673) scale(1.7,1.7)"/><use href="#dp" transform="translate(1358,1186) scale(2.5,3.0)"/><use href="#dp" transform="translate(1573,1196) scale(1.6,1.7)"/><use href="#dp" transform="translate(1342,462) scale(2.4,3.0)"/><use href="#dp" transform="translate(1296,1027) scale(2.4,2.9)"/><use href="#dp" transform="translate(1407,525) scale(3.2,3.7)"/><use href="#dp" transform="translate(1317,851) scale(2.9,3.3)"/><use href="#dp" transform="translate(1471,852) scale(3.4,4.1)"/><use href="#dp" transform="translate(1493,1175) scale(1.5,1.6)"/><use href="#dp" transform="translate(1611,456) scale(2.2,2.7)"/><use href="#dp" transform="translate(1213,776) scale(2.2,2.6)"/><use href="#dp" transform="translate(1527,633) scale(1.2,1.5)"/><use href="#dp" transform="translate(1231,642) scale(3.8,4.4)"/><use href="#dp" transform="translate(1475,897) scale(1.6,1.7)"/><use href="#dp" transform="translate(1153,457) scale(1.4,1.4)"/><use href="#dp" transform="translate(1386,1177) scale(1.6,1.9)"/><use href="#dp" transform="translate(1214,521) scale(1.8,2.1)"/><use href="#dp" transform="translate(1359,995) scale(2.5,2.7)"/><use href="#dp" transform="translate(1571,469) scale(3.0,3.7)"/><use href="#dp" transform="translate(1555,952) scale(1.2,1.3)"/><use href="#dp" transform="translate(1610,565) scale(2.0,2.4)"/><use href="#dp" transform="translate(1215,554) scale(2.6,2.8)"/><use href="#dp" transform="translate(1472,875) scale(1.3,1.3)"/><use href="#dp" transform="translate(1582,544) scale(3.3,3.9)"/><use href="#dp" transform="translate(1192,1040) scale(1.7,1.9)"/><use href="#dp" transform="translate(1178,633) scale(3.1,3.4)"/><use href="#dp" transform="translate(1534,615) scale(1.5,1.7)"/><use href="#dp" transform="translate(1316,930) scale(2.4,2.4)"/><use href="#dp" transform="translate(1479,1077) scale(1.2,1.4)"/><use href="#dp" transform="translate(1180,793) scale(1.3,1.4)"/><use href="#dp" transform="translate(1378,577) scale(1.8,1.9)"/><use href="#dp" transform="translate(1154,718) scale(2.5,2.9)"/><use href="#dp" transform="translate(1156,614) scale(2.0,2.4)"/><use href="#dp" transform="translate(1642,1093) scale(2.5,2.9)"/><use href="#dp" transform="translate(1248,575) scale(3.0,3.1)"/><use href="#dp" transform="translate(1262,1143) scale(2.2,2.3)"/><use href="#dp" transform="translate(1364,686) scale(2.1,2.3)"/><use href="#dp" transform="translate(1182,1188) scale(1.5,1.5)"/><use href="#dp" transform="translate(1473,834) scale(1.9,2.2)"/><use href="#dp" transform="translate(1410,623) scale(2.0,2.4)"/><use href="#dp" transform="translate(1196,1052) scale(4.0,4.9)"/><use href="#dp" transform="translate(1317,1127) scale(1.5,1.7)"/><use href="#dp" transform="translate(1608,508) scale(1.3,1.4)"/><use href="#dp" transform="translate(1194,590) scale(2.0,2.5)"/><use href="#dp" transform="translate(1336,958) scale(2.5,2.7)"/><use href="#dp" transform="translate(1377,832) scale(3.5,4.4)"/><use href="#dp" transform="translate(1456,609) scale(3.0,3.7)"/><use href="#dp" transform="translate(1366,617) scale(3.2,3.5)"/><use href="#dp" transform="translate(1304,950) scale(1.7,1.8)"/><use href="#dp" transform="translate(1568,446) scale(1.6,1.7)"/><use href="#dp" transform="translate(1423,983) scale(1.5,1.6)"/><use href="#dp" transform="translate(1640,558) scale(1.9,2.2)"/><use href="#dp" transform="translate(1600,489) scale(1.4,1.6)"/><use href="#dp" transform="translate(1364,754) scale(3.9,4.7)"/><use href="#dp" transform="translate(1639,649) scale(3.4,3.4)"/><use href="#dp" transform="translate(1616,524) scale(1.6,1.7)"/><use href="#dp" transform="translate(1644,1102) scale(1.9,2.4)"/><use href="#dp" transform="translate(1557,939) scale(1.4,1.4)"/><use href="#dp" transform="translate(1476,888) scale(4.3,5.3)"/><use href="#dp" transform="translate(1222,503) scale(3.7,3.9)"/><use href="#dp" transform="translate(1494,639) scale(1.7,1.9)"/><use href="#dp" transform="translate(1486,501) scale(2.1,2.3)"/><use href="#dp" transform="translate(1483,1049) scale(1.9,2.2)"/><use href="#dp" transform="translate(1503,934) scale(2.5,3.0)"/><use href="#dp" transform="translate(1244,771) scale(3.0,3.3)"/><use href="#dp" transform="translate(1641,1125) scale(2.2,2.4)"/><use href="#dp" transform="translate(1479,1024) scale(1.5,1.6)"/><use href="#dp" transform="translate(1262,473) scale(1.8,2.0)"/><use href="#dp" transform="translate(1159,885) scale(3.7,4.0)"/><use href="#dp" transform="translate(1501,776) scale(1.9,1.9)"/><use href="#dp" transform="translate(1485,567) scale(2.5,3.0)"/><use href="#dp" transform="translate(1572,930) scale(2.2,2.7)"/><use href="#dp" transform="translate(1224,1024) scale(1.6,1.9)"/><use href="#dp" transform="translate(1445,1087) scale(3.7,3.9)"/><use href="#dp" transform="translate(1125,849) scale(1.6,1.6)"/><use href="#dp" transform="translate(1120,577) scale(1.2,1.3)"/><use href="#dp" transform="translate(1261,982) scale(5.1,5.3)"/><use href="#dp" transform="translate(1626,1177) scale(1.7,1.9)"/><use href="#dp" transform="translate(1291,761) scale(1.6,1.6)"/><use href="#dp" transform="translate(1163,568) scale(2.1,2.4)"/><use href="#dp" transform="translate(1260,1043) scale(1.7,1.9)"/><use href="#dp" transform="translate(1220,1146) scale(1.3,1.3)"/><use href="#dp" transform="translate(1494,736) scale(1.5,1.8)"/><use href="#dp" transform="translate(1554,517) scale(1.5,1.7)"/><use href="#dp" transform="translate(1555,1043) scale(1.3,1.6)"/><use href="#dp" transform="translate(1425,550) scale(2.0,2.1)"/><use href="#dp" transform="translate(1463,628) scale(1.8,2.0)"/><use href="#dp" transform="translate(1512,469) scale(1.5,1.6)"/><use href="#dp" transform="translate(1466,967) scale(2.5,2.6)"/><use href="#dp" transform="translate(1287,946) scale(1.4,1.5)"/><use href="#dp" transform="translate(1537,1070) scale(2.5,3.0)"/><use href="#dp" transform="translate(1286,684) scale(1.3,1.5)"/><use href="#dp" transform="translate(1166,483) scale(1.4,1.7)"/><use href="#dp" transform="translate(1595,794) scale(1.4,1.5)"/><use href="#dp" transform="translate(1401,720) scale(1.9,2.3)"/><use href="#dp" transform="translate(1175,499) scale(1.9,2.0)"/><use href="#dp" transform="translate(1481,613) scale(1.9,2.2)"/><use href="#dp" transform="translate(1537,726) scale(2.5,3.1)"/><use href="#dp" transform="translate(1454,525) scale(2.1,2.2)"/><use href="#dp" transform="translate(1137,1186) scale(2.8,3.2)"/><use href="#dp" transform="translate(1455,672) scale(2.3,2.7)"/><use href="#dp" transform="translate(1355,511) scale(1.3,1.7)"/><use href="#dp" transform="translate(1145,663) scale(1.4,1.4)"/><use href="#dp" transform="translate(1155,570) scale(2.4,2.5)"/><use href="#dp" transform="translate(1212,1023) scale(1.7,1.7)"/><use href="#dp" transform="translate(1249,1179) scale(1.6,1.9)"/><use href="#dp" transform="translate(1603,1128) scale(2.5,2.9)"/><use href="#dp" transform="translate(1274,797) scale(2.2,2.3)"/><use href="#dp" transform="translate(1223,1169) scale(2.3,2.5)"/><use href="#dp" transform="translate(1252,638) scale(2.6,2.7)"/><use href="#dp" transform="translate(1583,688) scale(2.2,2.4)"/><use href="#dp" transform="translate(1219,761) scale(4.2,4.8)"/><use href="#dp" transform="translate(1123,1022) scale(2.5,3.0)"/><use href="#dp" transform="translate(1295,1086) scale(3.1,3.4)"/><use href="#dp" transform="translate(1321,712) scale(1.4,1.4)"/><use href="#dp" transform="translate(1613,756) scale(2.4,2.9)"/><use href="#dp" transform="translate(1250,1139) scale(4.5,5.3)"/><use href="#dp" transform="translate(1528,1059) scale(2.1,2.3)"/><use href="#dp" transform="translate(1575,547) scale(1.7,2.0)"/><use href="#dp" transform="translate(1305,1082) scale(4.3,4.4)"/><use href="#dp" transform="translate(1628,1007) scale(2.1,2.1)"/><use href="#dp" transform="translate(1591,859) scale(1.7,2.0)"/><use href="#dp" transform="translate(1543,1102) scale(1.7,1.8)"/><use href="#dp" transform="translate(1172,693) scale(2.3,2.4)"/><use href="#dp" transform="translate(1156,497) scale(1.5,1.6)"/><use href="#dp" transform="translate(1336,1051) scale(3.2,3.7)"/><use href="#dp" transform="translate(1605,801) scale(4.0,4.3)"/><use href="#dp" transform="translate(1593,878) scale(2.0,2.4)"/><use href="#dp" transform="translate(1400,811) scale(2.4,2.8)"/><use href="#dp" transform="translate(1230,719) scale(2.5,3.0)"/><use href="#dp" transform="translate(1185,1135) scale(2.0,2.2)"/><use href="#dp" transform="translate(1508,770) scale(1.9,2.3)"/><use href="#dp" transform="translate(1547,715) scale(2.2,2.7)"/><use href="#dp" transform="translate(1236,1112) scale(7.6,8.3)"/><use href="#dp" transform="translate(1504,1147) scale(1.6,1.8)"/><use href="#dp" transform="translate(1516,587) scale(1.9,2.2)"/><use href="#dp" transform="translate(1195,1167) scale(8.4,10.0)"/><use href="#dp" transform="translate(1217,1132) scale(2.3,2.8)"/><use href="#dp" transform="translate(1314,1143) scale(1.2,1.4)"/><use href="#dp" transform="translate(1607,1125) scale(3.6,4.4)"/><use href="#dp" transform="translate(1422,554) scale(2.3,2.6)"/><use href="#dp" transform="translate(1445,641) scale(1.8,2.0)"/><use href="#dp" transform="translate(1372,516) scale(1.7,2.0)"/><use href="#dp" transform="translate(1525,625) scale(1.9,2.0)"/><use href="#dp" transform="translate(1446,1128) scale(2.0,2.4)"/><use href="#dp" transform="translate(1525,983) scale(1.6,1.9)"/><use href="#dp" transform="translate(1621,486) scale(3.4,3.5)"/><use href="#dp" transform="translate(1155,1047) scale(1.4,1.6)"/><use href="#dp" transform="translate(1465,1198) scale(2.3,2.4)"/><use href="#dp" transform="translate(1225,568) scale(2.1,2.2)"/><use href="#dp" transform="translate(1205,611) scale(1.5,1.6)"/><use href="#dp" transform="translate(1392,584) scale(1.8,2.3)"/><use href="#dp" transform="translate(1382,1158) scale(1.5,1.7)"/><use href="#dp" transform="translate(1196,574) scale(2.2,2.7)"/><use href="#dp" transform="translate(1337,713) scale(1.7,2.0)"/><use href="#dp" transform="translate(1331,561) scale(3.7,3.7)"/><use href="#dp" transform="translate(1580,995) scale(2.1,2.6)"/><use href="#dp" transform="translate(1336,772) scale(2.0,2.3)"/><use href="#dp" transform="translate(1518,1162) scale(1.7,2.1)"/><use href="#dp" transform="translate(1548,891) scale(1.7,2.1)"/><use href="#dp" transform="translate(1416,750) scale(1.4,1.7)"/><use href="#dp" transform="translate(1553,466) scale(1.9,2.1)"/><use href="#dp" transform="translate(1315,1121) scale(1.9,2.4)"/><use href="#dp" transform="translate(1465,806) scale(1.7,2.0)"/><use href="#dp" transform="translate(1545,642) scale(1.7,1.9)"/><use href="#dp" transform="translate(1615,852) scale(1.7,2.0)"/><use href="#dp" transform="translate(1204,966) scale(1.5,1.5)"/><use href="#dp" transform="translate(1556,557) scale(1.3,1.4)"/><use href="#dp" transform="translate(1517,989) scale(4.4,5.0)"/><use href="#dp" transform="translate(1619,514) scale(3.4,3.6)"/><use href="#dp" transform="translate(1525,1093) scale(1.3,1.6)"/><use href="#dp" transform="translate(1528,896) scale(5.2,5.3)"/><use href="#dp" transform="translate(1185,462) scale(2.1,2.1)"/><use href="#dp" transform="translate(1205,582) scale(2.1,2.7)"/><use href="#dp" transform="translate(1314,1184) scale(1.7,1.9)"/><use href="#dp" transform="translate(1244,1181) scale(9.2,9.6)"/><use href="#dp" transform="translate(1215,561) scale(2.2,2.3)"/><use href="#dp" transform="translate(1406,959) scale(1.8,2.2)"/><use href="#dp" transform="translate(1431,786) scale(3.7,4.1)"/><use href="#dp" transform="translate(1333,1157) scale(4.3,4.9)"/><use href="#dp" transform="translate(1195,578) scale(2.2,2.2)"/><use href="#dp" transform="translate(1554,1039) scale(1.2,1.4)"/><use href="#dp" transform="translate(1343,951) scale(2.2,2.4)"/><use href="#dp" transform="translate(1640,1166) scale(3.8,4.1)"/><use href="#dp" transform="translate(1322,649) scale(4.1,4.9)"/><use href="#dp" transform="translate(1565,1193) scale(1.6,2.0)"/><use href="#dp" transform="translate(1260,907) scale(2.4,2.7)"/><use href="#dp" transform="translate(1267,1142) scale(2.5,3.0)"/><use href="#dp" transform="translate(1198,1020) scale(2.5,2.8)"/><use href="#dp" transform="translate(1350,1150) scale(2.3,2.3)"/><use href="#dp" transform="translate(1268,532) scale(3.4,4.1)"/><use href="#dp" transform="translate(1257,997) scale(1.3,1.5)"/><use href="#dp" transform="translate(1510,608) scale(1.6,1.7)"/><use href="#dp" transform="translate(1618,1157) scale(7.6,8.6)"/><use href="#dp" transform="translate(1558,1018) scale(2.4,2.7)"/><use href="#dp" transform="translate(1635,802) scale(2.2,2.3)"/><use href="#dp" transform="translate(1487,486) scale(8.2,9.8)"/><use href="#dp" transform="translate(1188,926) scale(1.5,1.9)"/><use href="#dp" transform="translate(1135,806) scale(2.4,2.9)"/><use href="#dp" transform="translate(1136,796) scale(2.2,2.6)"/><use href="#dp" transform="translate(1304,1149) scale(1.4,1.7)"/><use href="#dp" transform="translate(1182,586) scale(1.7,1.7)"/><use href="#dp" transform="translate(1624,803) scale(3.1,3.8)"/><use href="#dp" transform="translate(1238,1129) scale(2.6,3.1)"/><use href="#dp" transform="translate(1461,848) scale(3.4,3.5)"/><use href="#dp" transform="translate(1615,1053) scale(2.2,2.4)"/><use href="#dp" transform="translate(1370,1066) scale(4.4,4.5)"/><use href="#dp" transform="translate(1490,864) scale(1.4,1.5)"/><use href="#dp" transform="translate(1373,818) scale(1.7,2.0)"/><use href="#dp" transform="translate(1532,890) scale(2.4,2.7)"/><use href="#dp" transform="translate(1640,1186) scale(2.0,2.5)"/><use href="#dp" transform="translate(1327,859) scale(1.2,1.3)"/><use href="#dp" transform="translate(1185,660) scale(2.0,2.5)"/><use href="#dp" transform="translate(1491,719) scale(3.8,4.3)"/><use href="#dp" transform="translate(1587,951) scale(2.0,2.2)"/><use href="#dp" transform="translate(1645,630) scale(5.4,5.4)"/><use href="#dp" transform="translate(1418,601) scale(1.4,1.7)"/><use href="#dp" transform="translate(1482,962) scale(4.5,5.2)"/><use href="#dp" transform="translate(1506,447) scale(1.8,2.2)"/><use href="#dp" transform="translate(1288,875) scale(1.8,2.2)"/><use href="#dp" transform="translate(1438,1068) scale(1.5,1.6)"/><use href="#dp" transform="translate(1571,523) scale(3.1,3.8)"/><use href="#dp" transform="translate(1398,690) scale(3.4,4.0)"/><use href="#dp" transform="translate(1154,1072) scale(5.7,6.7)"/><use href="#dp" transform="translate(1264,558) scale(2.1,2.6)"/><use href="#dp" transform="translate(1659,1195) scale(2.1,2.2)"/><use href="#dp" transform="translate(1513,862) scale(2.5,2.6)"/><use href="#dp" transform="translate(1194,565) scale(2.0,2.4)"/><use href="#dp" transform="translate(1204,825) scale(2.0,2.2)"/><use href="#dp" transform="translate(1413,457) scale(1.8,1.9)"/><use href="#dp" transform="translate(1529,628) scale(3.1,3.1)"/><use href="#dp" transform="translate(1377,738) scale(2.3,2.4)"/><use href="#dp" transform="translate(1482,1075) scale(1.9,2.3)"/><use href="#dp" transform="translate(1446,582) scale(1.3,1.4)"/><use href="#dp" transform="translate(1165,935) scale(1.6,1.8)"/><use href="#dp" transform="translate(1627,630) scale(1.6,1.8)"/><use href="#dp" transform="translate(1613,978) scale(1.4,1.4)"/><use href="#dp" transform="translate(1184,1085) scale(1.4,1.6)"/><use href="#dp" transform="translate(1149,828) scale(1.3,1.6)"/><use href="#dp" transform="translate(1508,831) scale(2.1,2.4)"/><use href="#dp" transform="translate(1477,515) scale(2.6,2.8)"/><use href="#dp" transform="translate(1334,596) scale(2.2,2.7)"/><use href="#dp" transform="translate(1300,647) scale(1.5,1.7)"/><use href="#dp" transform="translate(1492,771) scale(1.3,1.5)"/><use href="#dp" transform="translate(1657,1140) scale(1.9,2.1)"/><use href="#dp" transform="translate(1223,951) scale(2.3,2.5)"/><use href="#dp" transform="translate(1626,1060) scale(1.4,1.6)"/><use href="#dp" transform="translate(1186,963) scale(2.0,2.5)"/><use href="#dp" transform="translate(1142,985) scale(2.8,3.0)"/><use href="#dp" transform="translate(1146,886) scale(1.7,2.0)"/><use href="#dp" transform="translate(1317,983) scale(2.6,2.9)"/><use href="#dp" transform="translate(1119,515) scale(2.4,2.8)"/><use href="#dp" transform="translate(1202,1104) scale(1.4,1.5)"/><use href="#dp" transform="translate(1483,449) scale(1.7,2.1)"/><use href="#dp" transform="translate(1660,686) scale(4.1,5.0)"/><use href="#dp" transform="translate(1438,1177) scale(2.5,2.9)"/><use href="#dp" transform="translate(1224,837) scale(1.7,1.8)"/><use href="#dp" transform="translate(1395,889) scale(1.6,1.8)"/><use href="#dp" transform="translate(1392,762) scale(1.5,1.7)"/><use href="#dp" transform="translate(1267,1027) scale(2.3,2.6)"/><use href="#dp" transform="translate(1253,1144) scale(1.7,1.9)"/><use href="#dp" transform="translate(1336,980) scale(3.5,4.2)"/><use href="#dp" transform="translate(1233,787) scale(1.6,1.8)"/><use href="#dp" transform="translate(1528,999) scale(1.5,1.8)"/><use href="#dp" transform="translate(1474,956) scale(2.2,2.3)"/><use href="#dp" transform="translate(1150,718) scale(2.5,2.9)"/><use href="#dp" transform="translate(1482,1175) scale(3.0,3.3)"/><use href="#dp" transform="translate(1176,1046) scale(1.9,2.1)"/><use href="#dp" transform="translate(1264,813) scale(2.5,3.0)"/><use href="#dp" transform="translate(1590,777) scale(1.6,2.0)"/><use href="#dp" transform="translate(1217,565) scale(2.5,3.0)"/><use href="#dp" transform="translate(1298,1088) scale(3.4,3.6)"/><use href="#dp" transform="translate(1538,728) scale(2.5,2.7)"/><use href="#dp" transform="translate(1334,895) scale(1.2,1.3)"/><use href="#dp" transform="translate(1324,454) scale(2.3,2.5)"/><use href="#dp" transform="translate(1487,917) scale(1.2,1.4)"/><use href="#dp" transform="translate(1450,668) scale(2.4,2.9)"/><use href="#dp" transform="translate(1244,888) scale(1.7,1.7)"/><use href="#dp" transform="translate(1294,932) scale(1.9,2.0)"/><use href="#dp" transform="translate(1233,681) scale(1.7,2.1)"/><use href="#dp" transform="translate(1180,1190) scale(2.4,2.5)"/><use href="#dp" transform="translate(1437,730) scale(2.3,2.8)"/><use href="#dp" transform="translate(1264,1031) scale(2.6,2.6)"/><use href="#dp" transform="translate(1324,618) scale(2.3,2.8)"/><use href="#dp" transform="translate(1416,738) scale(2.8,3.0)"/><use href="#dp" transform="translate(1527,778) scale(5.5,6.2)"/><use href="#dp" transform="translate(1233,448) scale(1.3,1.4)"/><use href="#dp" transform="translate(1353,829) scale(2.2,2.5)"/><use href="#dp" transform="translate(1652,574) scale(1.9,2.1)"/><use href="#dp" transform="translate(1586,604) scale(3.3,3.6)"/><use href="#dp" transform="translate(1452,871) scale(1.3,1.6)"/><use href="#dp" transform="translate(1318,532) scale(1.9,2.1)"/><use href="#dp" transform="translate(1296,1083) scale(1.8,2.2)"/><use href="#dp" transform="translate(1314,749) scale(2.1,2.5)"/><use href="#dp" transform="translate(1360,752) scale(2.3,2.6)"/><use href="#dp" transform="translate(1570,729) scale(1.2,1.3)"/><use href="#dp" transform="translate(1641,960) scale(1.9,2.1)"/><use href="#dp" transform="translate(1225,576) scale(2.2,2.3)"/><use href="#dp" transform="translate(1468,549) scale(1.4,1.6)"/><use href="#dp" transform="translate(1288,861) scale(1.9,2.2)"/><use href="#dp" transform="translate(1190,679) scale(2.0,2.3)"/><use href="#dp" transform="translate(1542,877) scale(1.8,2.2)"/><use href="#dp" transform="translate(1426,1014) scale(1.8,2.3)"/><use href="#dp" transform="translate(1565,938) scale(2.1,2.1)"/><use href="#dp" transform="translate(1626,1179) scale(1.6,1.9)"/><use href="#dp" transform="translate(1214,1070) scale(1.2,1.5)"/><use href="#dp" transform="translate(1357,1072) scale(1.9,2.4)"/><use href="#dp" transform="translate(1228,1124) scale(1.2,1.3)"/><use href="#dp" transform="translate(1153,500) scale(1.4,1.4)"/><use href="#dp" transform="translate(1276,656) scale(4.3,5.3)"/><use href="#dp" transform="translate(1656,778) scale(3.1,3.9)"/><use href="#dp" transform="translate(1559,998) scale(1.3,1.6)"/><use href="#dp" transform="translate(1418,908) scale(2.9,3.4)"/><use href="#dp" transform="translate(1370,1039) scale(1.5,1.8)"/><use href="#dp" transform="translate(1270,1008) scale(3.1,3.6)"/><use href="#dp" transform="translate(1333,615) scale(2.5,2.8)"/><use href="#dp" transform="translate(1395,824) scale(2.3,2.7)"/><use href="#dp" transform="translate(1594,715) scale(1.7,2.0)"/><use href="#dp" transform="translate(1476,752) scale(1.4,1.7)"/><use href="#dp" transform="translate(1374,828) scale(3.0,3.5)"/><use href="#dp" transform="translate(1310,1059) scale(1.6,1.8)"/><use href="#dp" transform="translate(1380,730) scale(1.5,1.7)"/><use href="#dp" transform="translate(1118,1048) scale(2.4,2.7)"/><use href="#dp" transform="translate(1445,918) scale(2.3,2.5)"/><use href="#dp" transform="translate(1587,1039) scale(2.3,2.6)"/><use href="#dp" transform="translate(1484,1164) scale(1.3,1.5)"/><use href="#dp" transform="translate(1395,558) scale(2.4,2.6)"/><use href="#dp" transform="translate(1198,584) scale(1.5,1.6)"/><use href="#dp" transform="translate(1410,778) scale(2.4,2.4)"/><use href="#dp" transform="translate(1624,596) scale(2.3,2.6)"/><use href="#dp" transform="translate(1410,610) scale(3.2,3.8)"/><use href="#dp" transform="translate(1241,878) scale(1.7,1.9)"/><use href="#dp" transform="translate(1153,931) scale(1.4,1.6)"/><use href="#dp" transform="translate(1517,522) scale(4.3,4.3)"/><use href="#dp" transform="translate(1252,509) scale(1.3,1.5)"/><use href="#dp" transform="translate(1253,672) scale(1.7,2.1)"/><use href="#dp" transform="translate(1511,532) scale(1.2,1.3)"/><use href="#dp" transform="translate(1176,972) scale(4.5,4.7)"/><use href="#dp" transform="translate(1137,1017) scale(2.5,2.7)"/><use href="#dp" transform="translate(1287,501) scale(3.6,4.0)"/><use href="#dp" transform="translate(1355,1026) scale(3.5,3.7)"/><use href="#dp" transform="translate(1338,1118) scale(2.1,2.4)"/><use href="#dp" transform="translate(1368,879) scale(2.0,2.4)"/><use href="#dp" transform="translate(1161,724) scale(4.5,4.5)"/><use href="#dp" transform="translate(1459,923) scale(3.5,3.6)"/><use href="#dp" transform="translate(1281,983) scale(1.5,1.7)"/><use href="#dp" transform="translate(1475,942) scale(1.8,2.0)"/><use href="#dp" transform="translate(1442,700) scale(2.1,2.3)"/><use href="#dp" transform="translate(1548,677) scale(2.3,2.4)"/><use href="#dp" transform="translate(1515,497) scale(2.6,3.1)"/><use href="#dp" transform="translate(1318,581) scale(1.9,2.1)"/><use href="#dp" transform="translate(1184,840) scale(2.6,2.8)"/><use href="#dp" transform="translate(1354,618) scale(3.2,3.7)"/><use href="#dp" transform="translate(1571,742) scale(1.6,1.6)"/><use href="#dp" transform="translate(1140,785) scale(3.0,3.3)"/><use href="#dp" transform="translate(1533,654) scale(1.9,2.1)"/><use href="#dp" transform="translate(1628,1123) scale(2.0,2.2)"/><use href="#dp" transform="translate(1135,781) scale(3.2,3.6)"/><use href="#dp" transform="translate(1504,494) scale(2.8,3.0)"/><use href="#dp" transform="translate(1507,461) scale(1.4,1.5)"/><use href="#dp" transform="translate(1126,560) scale(1.3,1.3)"/><use href="#dp" transform="translate(1223,836) scale(2.3,2.6)"/><use href="#dp" transform="translate(1254,628) scale(2.7,3.2)"/><use href="#dp" transform="translate(1170,1158) scale(2.0,2.5)"/><use href="#dp" transform="translate(1172,494) scale(2.0,2.4)"/><use href="#dp" transform="translate(1268,821) scale(1.8,1.9)"/><use href="#dp" transform="translate(1436,672) scale(2.1,2.1)"/><use href="#dp" transform="translate(1554,820) scale(1.4,1.5)"/><use href="#dp" transform="translate(1392,989) scale(1.8,2.2)"/><use href="#dp" transform="translate(1266,1186) scale(4.5,5.5)"/><use href="#dp" transform="translate(1257,1060) scale(1.5,1.9)"/><use href="#dp" transform="translate(1470,1057) scale(1.3,1.6)"/><use href="#dp" transform="translate(1213,641) scale(1.5,1.6)"/><use href="#dp" transform="translate(1506,518) scale(1.3,1.5)"/><use href="#dp" transform="translate(1471,964) scale(1.5,1.8)"/><use href="#dp" transform="translate(1330,766) scale(2.2,2.6)"/><use href="#dp" transform="translate(1471,749) scale(1.9,2.0)"/><use href="#dp" transform="translate(1634,1174) scale(2.6,2.9)"/><use href="#dp" transform="translate(1574,627) scale(2.2,2.7)"/><use href="#dp" transform="translate(1571,1109) scale(2.3,2.6)"/><use href="#dp" transform="translate(1287,724) scale(4.2,5.1)"/><use href="#dp" transform="translate(1482,574) scale(2.0,2.1)"/><use href="#dp" transform="translate(1300,523) scale(2.2,2.3)"/><use href="#dp" transform="translate(1579,694) scale(3.2,3.4)"/><use href="#dp" transform="translate(1332,455) scale(1.7,1.7)"/><use href="#dp" transform="translate(1587,729) scale(2.5,2.7)"/><use href="#dp" transform="translate(1255,464) scale(2.2,2.5)"/><use href="#dp" transform="translate(1392,632) scale(2.6,2.8)"/><use href="#dp" transform="translate(1656,1115) scale(2.4,2.4)"/><use href="#dp" transform="translate(1505,1056) scale(2.0,2.4)"/><use href="#dp" transform="translate(1201,853) scale(1.8,1.8)"/><use href="#dp" transform="translate(1503,878) scale(2.1,2.4)"/><use href="#dp" transform="translate(1619,1059) scale(1.7,2.0)"/><use href="#dp" transform="translate(1319,523) scale(2.2,2.7)"/><use href="#dp" transform="translate(1469,946) scale(4.1,4.5)"/><use href="#dp" transform="translate(1369,1019) scale(1.4,1.6)"/><use href="#dp" transform="translate(1558,633) scale(2.4,2.5)"/><use href="#dp" transform="translate(1191,818) scale(2.5,3.2)"/><use href="#dp" transform="translate(1360,1044) scale(1.4,1.8)"/><use href="#dp" transform="translate(1212,503) scale(1.2,1.4)"/><use href="#dp" transform="translate(1342,1166) scale(2.4,2.9)"/><use href="#dp" transform="translate(1437,625) scale(1.9,2.1)"/><use href="#dp" transform="translate(1469,827) scale(2.0,2.6)"/><use href="#dp" transform="translate(1227,699) scale(1.3,1.3)"/><use href="#dp" transform="translate(1347,1077) scale(2.6,3.1)"/><use href="#dp" transform="translate(1436,884) scale(1.7,1.9)"/><use href="#dp" transform="translate(1455,495) scale(1.7,1.9)"/><use href="#dp" transform="translate(1337,523) scale(2.3,2.7)"/><use href="#dp" transform="translate(1180,898) scale(4.5,5.3)"/><use href="#dp" transform="translate(1142,1108) scale(1.6,2.0)"/><use href="#dp" transform="translate(1567,1121) scale(2.0,2.2)"/><use href="#dp" transform="translate(1278,1020) scale(1.7,1.9)"/><use href="#dp" transform="translate(1623,873) scale(3.7,4.6)"/><use href="#dp" transform="translate(1133,793) scale(2.2,2.8)"/><use href="#dp" transform="translate(1457,806) scale(1.9,2.3)"/><use href="#dp" transform="translate(1633,456) scale(2.4,2.5)"/><use href="#dp" transform="translate(1548,469) scale(2.3,2.5)"/><use href="#dp" transform="translate(1325,617) scale(1.9,2.2)"/><use href="#dp" transform="translate(1294,888) scale(4.1,5.1)"/><use href="#dp" transform="translate(1252,835) scale(1.7,2.0)"/><use href="#dp" transform="translate(1212,867) scale(2.5,2.5)"/><use href="#dp" transform="translate(1265,818) scale(2.9,3.5)"/><use href="#dp" transform="translate(1333,859) scale(2.7,2.9)"/><use href="#dp" transform="translate(1202,547) scale(2.2,2.5)"/><use href="#dp" transform="translate(1183,1050) scale(1.4,1.7)"/><use href="#dp" transform="translate(1564,609) scale(4.1,4.4)"/><use href="#dp" transform="translate(1118,1100) scale(2.8,3.3)"/><use href="#dp" transform="translate(1538,924) scale(4.5,4.8)"/><use href="#dp" transform="translate(1571,1140) scale(2.2,2.5)"/><use href="#dp" transform="translate(1580,873) scale(1.6,1.8)"/><use href="#dp" transform="translate(1191,1094) scale(3.1,3.6)"/><use href="#dp" transform="translate(1484,538) scale(2.3,2.4)"/><use href="#dp" transform="translate(1171,658) scale(1.9,2.2)"/><use href="#dp" transform="translate(1204,526) scale(2.4,2.5)"/><use href="#dp" transform="translate(1157,1014) scale(2.1,2.2)"/><use href="#dp" transform="translate(1252,946) scale(3.4,3.8)"/><use href="#dp" transform="translate(1134,703) scale(2.3,2.7)"/><use href="#dp" transform="translate(1544,847) scale(1.4,1.5)"/><use href="#dp" transform="translate(1277,659) scale(1.5,1.6)"/><use href="#dp" transform="translate(1271,1097) scale(1.9,2.1)"/><use href="#dp" transform="translate(1619,1154) scale(2.0,2.4)"/><use href="#dp" transform="translate(1257,641) scale(1.9,2.3)"/><use href="#dp" transform="translate(1202,772) scale(7.9,8.6)"/><use href="#dp" transform="translate(1574,1119) scale(1.4,1.6)"/><use href="#dp" transform="translate(1521,1142) scale(1.6,1.8)"/><use href="#dp" transform="translate(1274,782) scale(2.5,3.0)"/><use href="#dp" transform="translate(1622,806) scale(2.9,3.5)"/><use href="#dp" transform="translate(1466,1104) scale(2.6,2.6)"/><use href="#dp" transform="translate(1579,1064) scale(2.4,2.5)"/><use href="#dp" transform="translate(1527,799) scale(1.5,1.8)"/><use href="#dp" transform="translate(1515,513) scale(6.3,6.9)"/><use href="#dp" transform="translate(1343,881) scale(4.4,5.1)"/><use href="#dp" transform="translate(1316,527) scale(1.9,2.2)"/><use href="#dp" transform="translate(1361,1187) scale(1.7,1.9)"/><use href="#dp" transform="translate(1211,1154) scale(2.0,2.2)"/><use href="#dp" transform="translate(1253,684) scale(1.8,2.3)"/><use href="#dp" transform="translate(1424,602) scale(1.4,1.5)"/><use href="#dp" transform="translate(1543,1116) scale(2.3,2.5)"/><use href="#dp" transform="translate(1410,848) scale(1.3,1.5)"/><use href="#dp" transform="translate(1493,733) scale(4.2,4.5)"/><use href="#dp" transform="translate(1153,863) scale(1.5,1.5)"/><use href="#dp" transform="translate(1382,472) scale(2.1,2.2)"/><use href="#dp" transform="translate(1360,622) scale(1.5,1.8)"/><use href="#dp" transform="translate(1364,985) scale(2.3,2.7)"/><use href="#dp" transform="translate(1473,742) scale(1.5,1.8)"/><use href="#dp" transform="translate(1483,847) scale(1.3,1.5)"/><use href="#dp" transform="translate(1243,1082) scale(1.8,2.2)"/><use href="#dp" transform="translate(1544,988) scale(1.5,1.8)"/><use href="#dp" transform="translate(1280,991) scale(2.3,2.6)"/><use href="#dp" transform="translate(1561,1189) scale(2.6,2.6)"/><use href="#dp" transform="translate(1595,468) scale(1.7,2.1)"/><use href="#dp" transform="translate(1289,603) scale(3.6,4.3)"/><use href="#dp" transform="translate(1384,474) scale(1.5,1.7)"/><use href="#dp" transform="translate(1117,641) scale(2.3,2.6)"/><use href="#dp" transform="translate(1359,998) scale(1.5,1.7)"/><use href="#dp" transform="translate(1443,996) scale(1.6,1.8)"/><use href="#dp" transform="translate(1169,709) scale(2.0,2.1)"/><use href="#dp" transform="translate(1516,534) scale(1.4,1.4)"/><use href="#dp" transform="translate(1254,834) scale(2.4,3.0)"/><use href="#dp" transform="translate(1271,1011) scale(2.0,2.1)"/><use href="#dp" transform="translate(1635,1167) scale(1.7,1.8)"/><use href="#dp" transform="translate(1225,770) scale(2.6,3.2)"/><use href="#dp" transform="translate(1285,456) scale(3.1,3.3)"/><use href="#dp" transform="translate(1181,723) scale(1.5,1.5)"/><use href="#dp" transform="translate(1432,782) scale(1.9,2.3)"/><use href="#dp" transform="translate(1512,705) scale(4.1,4.7)"/><use href="#dp" transform="translate(1376,694) scale(2.4,2.8)"/><use href="#dp" transform="translate(1171,1144) scale(2.7,3.1)"/><use href="#dp" transform="translate(1247,850) scale(3.3,3.7)"/><use href="#dp" transform="translate(1480,591) scale(1.8,2.2)"/><use href="#dp" transform="translate(1219,982) scale(1.6,1.6)"/><use href="#dp" transform="translate(1198,844) scale(2.3,2.4)"/><use href="#dp" transform="translate(1457,1095) scale(1.5,1.8)"/><use href="#dp" transform="translate(1373,1149) scale(1.8,2.2)"/><use href="#dp" transform="translate(1304,1175) scale(3.0,3.4)"/><use href="#dp" transform="translate(1630,535) scale(4.1,4.8)"/><use href="#dp" transform="translate(1444,521) scale(2.8,3.3)"/><use href="#dp" transform="translate(1511,685) scale(1.8,2.1)"/><use href="#dp" transform="translate(1141,1150) scale(2.3,2.6)"/><use href="#dp" transform="translate(1560,673) scale(1.2,1.4)"/><use href="#dp" transform="translate(1160,1094) scale(1.8,2.2)"/><use href="#dp" transform="translate(1633,1167) scale(2.2,2.6)"/><use href="#dp" transform="translate(1447,458) scale(3.4,3.9)"/><use href="#dp" transform="translate(1561,654) scale(2.5,2.7)"/><use href="#dp" transform="translate(1139,549) scale(9.4,9.9)"/><use href="#dp" transform="translate(1197,1123) scale(2.0,2.1)"/><use href="#dp" transform="translate(1342,1160) scale(1.8,1.8)"/><use href="#dp" transform="translate(1661,525) scale(4.2,5.0)"/><use href="#dp" transform="translate(1140,970) scale(1.9,2.0)"/><use href="#dp" transform="translate(1396,1051) scale(2.4,2.7)"/><use href="#dp" transform="translate(1262,626) scale(2.1,2.4)"/><use href="#dp" transform="translate(1602,832) scale(2.6,2.7)"/><use href="#dp" transform="translate(1126,694) scale(1.4,1.5)"/><use href="#dp" transform="translate(1136,1140) scale(2.4,2.9)"/><use href="#dp" transform="translate(1515,1018) scale(2.2,2.3)"/><use href="#dp" transform="translate(1419,895) scale(1.4,1.6)"/><use href="#dp" transform="translate(1566,1053) scale(5.7,6.0)"/><use href="#dp" transform="translate(1175,992) scale(2.1,2.5)"/><use href="#dp" transform="translate(1398,870) scale(3.8,4.5)"/><use href="#dp" transform="translate(1438,818) scale(2.0,2.1)"/><use href="#dp" transform="translate(1349,764) scale(2.0,2.2)"/><use href="#dp" transform="translate(1330,768) scale(2.6,2.6)"/><use href="#dp" transform="translate(1126,990) scale(1.8,2.1)"/><use href="#dp" transform="translate(1317,626) scale(2.4,3.0)"/><use href="#dp" transform="translate(1273,797) scale(1.3,1.6)"/><use href="#dp" transform="translate(1573,628) scale(2.2,2.6)"/><use href="#dp" transform="translate(1373,738) scale(2.3,2.8)"/><use href="#dp" transform="translate(1585,532) scale(2.6,3.0)"/><use href="#dp" transform="translate(1367,555) scale(2.2,2.3)"/><use href="#dp" transform="translate(1558,948) scale(2.4,3.0)"/><use href="#dp" transform="translate(1453,521) scale(1.8,1.9)"/><use href="#dp" transform="translate(1623,997) scale(1.5,1.7)"/><use href="#dp" transform="translate(1429,691) scale(2.3,2.4)"/><use href="#dp" transform="translate(1509,695) scale(4.4,4.8)"/><use href="#dp" transform="translate(1447,530) scale(2.1,2.4)"/><use href="#dp" transform="translate(1304,472) scale(2.0,2.1)"/><use href="#dp" transform="translate(1284,912) scale(3.6,3.8)"/><use href="#dp" transform="translate(1436,654) scale(2.9,3.1)"/><use href="#dp" transform="translate(1356,1131) scale(1.5,1.5)"/><use href="#dp" transform="translate(1233,697) scale(2.3,2.5)"/><use href="#dp" transform="translate(1376,745) scale(2.5,2.7)"/><use href="#dp" transform="translate(1619,635) scale(8.2,9.5)"/><use href="#dp" transform="translate(1325,651) scale(2.4,2.7)"/><use href="#dp" transform="translate(1498,793) scale(1.5,1.6)"/><use href="#dp" transform="translate(1300,960) scale(1.2,1.4)"/><use href="#dp" transform="translate(1353,498) scale(1.5,1.8)"/><use href="#dp" transform="translate(1417,692) scale(1.6,1.7)"/><use href="#dp" transform="translate(1306,1042) scale(3.9,4.8)"/><use href="#dp" transform="translate(1473,532) scale(1.4,1.5)"/><use href="#dp" transform="translate(1405,1066) scale(1.8,1.9)"/><use href="#dp" transform="translate(1652,1014) scale(1.3,1.6)"/><use href="#dp" transform="translate(1257,1085) scale(2.1,2.3)"/><use href="#dp" transform="translate(1601,670) scale(1.5,1.8)"/><use href="#dp" transform="translate(1650,931) scale(1.6,1.7)"/><use href="#dp" transform="translate(1164,1189) scale(2.1,2.2)"/><use href="#dp" transform="translate(1219,775) scale(3.1,3.2)"/><use href="#dp" transform="translate(1460,941) scale(1.5,1.8)"/><use href="#dp" transform="translate(1177,577) scale(1.9,2.1)"/><use href="#dp" transform="translate(1419,994) scale(3.5,3.5)"/><use href="#dp" transform="translate(1570,460) scale(1.4,1.6)"/><use href="#dp" transform="translate(1543,543) scale(2.4,2.8)"/><use href="#dp" transform="translate(1176,964) scale(3.4,3.5)"/><use href="#dp" transform="translate(1476,687) scale(1.4,1.6)"/><use href="#dp" transform="translate(1186,736) scale(2.0,2.2)"/><use href="#dp" transform="translate(1553,512) scale(2.5,3.0)"/><use href="#dp" transform="translate(1619,1023) scale(2.3,2.6)"/><use href="#dp" transform="translate(1181,639) scale(2.4,2.6)"/><use href="#dp" transform="translate(1339,852) scale(2.2,2.6)"/><use href="#dp" transform="translate(1551,1110) scale(1.4,1.7)"/><use href="#dp" transform="translate(1495,726) scale(1.4,1.7)"/><use href="#dp" transform="translate(1368,1058) scale(1.6,1.9)"/><use href="#dp" transform="translate(1523,1112) scale(2.2,2.4)"/><use href="#dp" transform="translate(1587,1019) scale(1.7,1.8)"/><use href="#dp" transform="translate(1599,1050) scale(1.3,1.4)"/><use href="#dp" transform="translate(1642,476) scale(3.6,4.1)"/><use href="#dp" transform="translate(1411,755) scale(1.3,1.6)"/><use href="#dp" transform="translate(1173,551) scale(2.1,2.5)"/><use href="#dp" transform="translate(1494,1148) scale(1.2,1.3)"/><use href="#dp" transform="translate(1542,561) scale(2.3,2.4)"/><use href="#dp" transform="translate(1404,1125) scale(1.8,2.0)"/><use href="#dp" transform="translate(1268,1170) scale(3.9,4.2)"/><use href="#dp" transform="translate(1516,813) scale(3.3,4.0)"/><use href="#dp" transform="translate(1490,786) scale(2.3,2.6)"/><use href="#dp" transform="translate(1640,451) scale(4.0,4.4)"/><use href="#dp" transform="translate(1580,558) scale(2.2,2.7)"/><use href="#dp" transform="translate(1320,1196) scale(1.3,1.3)"/><use href="#dp" transform="translate(1159,876) scale(1.6,1.7)"/><use href="#dp" transform="translate(1160,1131) scale(3.7,4.1)"/><use href="#dp" transform="translate(1285,900) scale(2.6,3.2)"/><use href="#dp" transform="translate(1513,1069) scale(1.4,1.5)"/><use href="#dp" transform="translate(1186,765) scale(10.0,12.4)"/><use href="#dp" transform="translate(1238,613) scale(1.6,1.6)"/><use href="#dp" transform="translate(1405,673) scale(2.0,2.3)"/><use href="#dp" transform="translate(1280,1000) scale(2.2,2.5)"/><use href="#dp" transform="translate(1370,662) scale(1.9,2.1)"/><use href="#dp" transform="translate(1218,1094) scale(4.2,5.1)"/><use href="#dp" transform="translate(1383,579) scale(2.2,2.8)"/><use href="#dp" transform="translate(1178,451) scale(1.7,1.9)"/><use href="#dp" transform="translate(1178,1082) scale(2.5,2.7)"/><use href="#dp" transform="translate(1283,579) scale(3.7,4.5)"/><use href="#dp" transform="translate(1151,855) scale(2.6,3.2)"/><use href="#dp" transform="translate(1174,727) scale(8.2,10.2)"/><use href="#dp" transform="translate(1255,465) scale(3.1,3.5)"/><use href="#dp" transform="translate(1314,881) scale(4.4,5.4)"/><use href="#dp" transform="translate(1257,1065) scale(1.8,2.2)"/><use href="#dp" transform="translate(1256,723) scale(1.5,1.8)"/><use href="#dp" transform="translate(1473,518) scale(2.7,3.2)"/><use href="#dp" transform="translate(1307,554) scale(2.6,3.1)"/><use href="#dp" transform="translate(1367,1045) scale(4.4,4.9)"/><use href="#dp" transform="translate(1267,837) scale(9.4,11.0)"/><use href="#dp" transform="translate(1576,754) scale(2.4,2.5)"/><use href="#dp" transform="translate(1585,465) scale(2.0,2.1)"/><use href="#dp" transform="translate(1619,777) scale(1.8,2.0)"/><use href="#dp" transform="translate(1351,448) scale(2.2,2.3)"/><use href="#dp" transform="translate(1256,1055) scale(4.3,4.5)"/><use href="#dp" transform="translate(1120,1015) scale(1.7,1.7)"/><use href="#dp" transform="translate(1352,625) scale(2.6,2.7)"/><use href="#dp" transform="translate(1158,970) scale(1.5,1.7)"/><use href="#dp" transform="translate(1654,691) scale(1.9,1.9)"/><use href="#dp" transform="translate(1336,974) scale(2.3,2.4)"/><use href="#dp" transform="translate(1172,919) scale(2.5,2.6)"/><use href="#dp" transform="translate(1524,951) scale(1.4,1.6)"/><use href="#dp" transform="translate(1530,802) scale(2.2,2.5)"/><use href="#dp" transform="translate(1348,586) scale(2.0,2.4)"/><use href="#dp" transform="translate(1659,866) scale(1.5,1.8)"/><use href="#dp" transform="translate(1519,633) scale(2.6,2.9)"/><use href="#dp" transform="translate(1629,775) scale(2.4,2.5)"/><use href="#dp" transform="translate(1305,1188) scale(1.6,1.8)"/><use href="#dp" transform="translate(1523,921) scale(3.9,3.9)"/><use href="#dp" transform="translate(1156,474) scale(1.2,1.4)"/><use href="#dp" transform="translate(1462,599) scale(3.4,4.2)"/><use href="#dp" transform="translate(1312,913) scale(1.6,1.9)"/><use href="#dp" transform="translate(1119,634) scale(2.4,2.7)"/><use href="#dp" transform="translate(1137,671) scale(2.3,2.4)"/><use href="#dp" transform="translate(1542,740) scale(1.8,2.0)"/><use href="#dp" transform="translate(1657,1139) scale(4.0,4.7)"/><use href="#dp" transform="translate(1194,473) scale(3.9,4.5)"/><use href="#dp" transform="translate(1287,647) scale(3.6,3.6)"/><use href="#dp" transform="translate(1303,709) scale(2.6,3.1)"/><use href="#dp" transform="translate(1561,449) scale(1.4,1.6)"/><use href="#dp" transform="translate(1558,1041) scale(2.8,2.8)"/><use href="#dp" transform="translate(1168,1081) scale(3.6,3.8)"/><use href="#dp" transform="translate(1584,537) scale(1.2,1.5)"/><use href="#dp" transform="translate(1343,1027) scale(3.7,4.6)"/><use href="#dp" transform="translate(1539,1145) scale(2.8,3.3)"/><use href="#dp" transform="translate(1240,691) scale(2.6,2.6)"/><use href="#dp" transform="translate(1354,543) scale(8.0,9.4)"/><use href="#dp" transform="translate(1400,1024) scale(1.8,2.1)"/><use href="#dp" transform="translate(1500,1115) scale(2.4,2.8)"/><use href="#dp" transform="translate(1429,754) scale(1.3,1.3)"/><use href="#dp" transform="translate(1287,539) scale(2.2,2.6)"/><use href="#dp" transform="translate(1453,601) scale(2.4,2.7)"/><use href="#dp" transform="translate(1241,872) scale(1.6,1.6)"/><use href="#dp" transform="translate(1588,923) scale(2.9,3.1)"/><use href="#dp" transform="translate(1395,491) scale(2.0,2.2)"/><use href="#dp" transform="translate(1613,881) scale(2.0,2.4)"/><use href="#dp" transform="translate(1317,446) scale(9.8,10.1)"/><use href="#dp" transform="translate(1178,614) scale(1.4,1.4)"/><use href="#dp" transform="translate(1386,451) scale(1.7,1.8)"/><use href="#dp" transform="translate(1118,642) scale(1.7,1.8)"/><use href="#dp" transform="translate(1313,690) scale(2.4,2.8)"/><use href="#dp" transform="translate(1386,448) scale(2.5,2.7)"/><use href="#dp" transform="translate(1229,1064) scale(2.8,3.2)"/><use href="#dp" transform="translate(1423,534) scale(2.1,2.4)"/><use href="#dp" transform="translate(1460,914) scale(1.3,1.3)"/><use href="#dp" transform="translate(1573,1098) scale(2.7,3.3)"/><use href="#dp" transform="translate(1211,707) scale(2.4,2.9)"/><use href="#dp" transform="translate(1571,734) scale(3.1,3.5)"/><use href="#dp" transform="translate(1484,622) scale(1.3,1.6)"/><use href="#dp" transform="translate(1217,549) scale(2.1,2.4)"/><use href="#dp" transform="translate(1403,1090) scale(1.5,1.7)"/><use href="#dp" transform="translate(1209,628) scale(1.3,1.4)"/><use href="#dp" transform="translate(1600,941) scale(1.5,1.7)"/><use href="#dp" transform="translate(1406,466) scale(2.0,2.3)"/><use href="#dp" transform="translate(1161,1029) scale(2.0,2.3)"/><use href="#dp" transform="translate(1302,1160) scale(1.8,2.0)"/><use href="#dp" transform="translate(1575,1191) scale(2.0,2.3)"/><use href="#dp" transform="translate(1465,1169) scale(9.6,10.1)"/><use href="#dp" transform="translate(1427,777) scale(2.3,2.4)"/><use href="#dp" transform="translate(1504,815) scale(2.2,2.6)"/><use href="#dp" transform="translate(1656,1199) scale(3.1,3.6)"/><use href="#dp" transform="translate(1387,1155) scale(1.7,1.7)"/><use href="#dp" transform="translate(1373,847) scale(1.3,1.5)"/><use href="#dp" transform="translate(1155,575) scale(1.7,1.9)"/><use href="#dp" transform="translate(1406,739) scale(1.2,1.4)"/><use href="#dp" transform="translate(1646,658) scale(1.6,2.0)"/><use href="#dp" transform="translate(1386,1046) scale(1.4,1.5)"/><use href="#dp" transform="translate(1318,747) scale(2.6,2.8)"/><use href="#dp" transform="translate(1431,1172) scale(2.0,2.5)"/><use href="#dp" transform="translate(1299,473) scale(3.6,4.1)"/><use href="#dp" transform="translate(1153,1008) scale(2.1,2.2)"/><use href="#dp" transform="translate(1617,724) scale(2.5,2.6)"/><use href="#dp" transform="translate(1265,813) scale(5.7,6.0)"/><use href="#dp" transform="translate(1551,503) scale(2.3,2.7)"/><use href="#dp" transform="translate(1549,534) scale(3.3,3.9)"/><use href="#dp" transform="translate(1374,1118) scale(1.6,1.6)"/><use href="#dp" transform="translate(1388,484) scale(2.4,2.8)"/><use href="#dp" transform="translate(1587,560) scale(1.9,1.9)"/><use href="#dp" transform="translate(1261,1141) scale(1.9,2.2)"/><use href="#dp" transform="translate(1586,1165) scale(1.3,1.5)"/><use href="#dp" transform="translate(1207,627) scale(1.9,2.2)"/><use href="#dp" transform="translate(1368,800) scale(2.2,2.5)"/><use href="#dp" transform="translate(1285,1075) scale(4.4,5.4)"/><use href="#dp" transform="translate(1155,739) scale(1.6,1.8)"/><use href="#dp" transform="translate(1610,550) scale(2.6,3.1)"/><use href="#dp" transform="translate(1363,525) scale(1.9,2.3)"/><use href="#dp" transform="translate(1218,657) scale(5.1,5.8)"/><use href="#dp" transform="translate(1169,1012) scale(2.5,2.6)"/><use href="#dp" transform="translate(1595,618) scale(1.3,1.3)"/><use href="#dp" transform="translate(1329,1179) scale(2.2,2.2)"/><use href="#dp" transform="translate(1398,853) scale(2.0,2.2)"/><use href="#dp" transform="translate(1295,1072) scale(1.4,1.4)"/><use href="#dp" transform="translate(1146,645) scale(2.6,3.2)"/><use href="#dp" transform="translate(1588,540) scale(4.0,4.5)"/><use href="#dp" transform="translate(1660,898) scale(1.5,1.6)"/><use href="#dp" transform="translate(1450,917) scale(2.6,2.6)"/><use href="#dp" transform="translate(1647,644) scale(2.4,2.5)"/><use href="#dp" transform="translate(1549,1122) scale(2.1,2.1)"/><use href="#dp" transform="translate(1448,909) scale(1.9,2.0)"/><use href="#dp" transform="translate(1238,938) scale(1.3,1.4)"/><use href="#dp" transform="translate(1551,858) scale(2.5,2.9)"/><use href="#dp" transform="translate(1247,872) scale(3.3,3.7)"/><use href="#dp" transform="translate(1432,1190) scale(1.5,1.7)"/><use href="#dp" transform="translate(1292,803) scale(1.2,1.4)"/><use href="#dp" transform="translate(1288,898) scale(3.5,4.0)"/><use href="#dp" transform="translate(1274,639) scale(1.9,2.1)"/><use href="#dp" transform="translate(1534,823) scale(1.6,1.9)"/><use href="#dp" transform="translate(1609,1153) scale(1.3,1.5)"/><use href="#dp" transform="translate(1130,1092) scale(1.7,1.9)"/><use href="#dp" transform="translate(1489,567) scale(2.3,2.7)"/><use href="#dp" transform="translate(1436,524) scale(1.6,1.6)"/><use href="#dp" transform="translate(1466,878) scale(3.7,4.5)"/><use href="#dp" transform="translate(1373,836) scale(1.8,2.3)"/><use href="#dp" transform="translate(1383,448) scale(1.5,1.7)"/><use href="#dp" transform="translate(1395,805) scale(4.0,4.1)"/><use href="#dp" transform="translate(1134,974) scale(2.1,2.4)"/><use href="#dp" transform="translate(1137,787) scale(3.7,3.8)"/><use href="#dp" transform="translate(1185,1128) scale(1.4,1.7)"/><use href="#dp" transform="translate(1621,1098) scale(2.3,2.4)"/><use href="#dp" transform="translate(1370,1057) scale(1.4,1.7)"/><use href="#dp" transform="translate(1501,452) scale(2.0,2.5)"/><use href="#dp" transform="translate(1454,1107) scale(2.0,2.1)"/><use href="#dp" transform="translate(1298,559) scale(1.3,1.5)"/><use href="#dp" transform="translate(1469,1128) scale(1.3,1.6)"/><use href="#dp" transform="translate(1413,1152) scale(1.3,1.5)"/><use href="#dp" transform="translate(1211,1188) scale(2.5,2.8)"/><use href="#dp" transform="translate(1295,945) scale(1.8,2.0)"/><use href="#dp" transform="translate(1346,985) scale(1.4,1.6)"/><use href="#dp" transform="translate(1476,496) scale(2.6,2.7)"/><use href="#dp" transform="translate(1538,676) scale(1.9,2.3)"/><use href="#dp" transform="translate(1541,482) scale(2.1,2.3)"/><use href="#dp" transform="translate(1479,839) scale(2.2,2.2)"/></g>
<path d="M1117 1150 C1165 1128 1210 1121 1255 1122 C1310 1124 1355 1138 1393 1153 C1440 1172 1490 1190 1540 1190 C1590 1190 1630 1176 1663 1157 L1663 1866 L1117 1866 Z" fill="#ff0000" />
<path d="M1117 1150 C1165 1128 1210 1121 1255 1122 C1310 1124 1355 1138 1393 1153 C1440 1172 1490 1190 1540 1190 C1590 1190 1630 1176 1663 1157 L1663 1866 L1117 1866 Z" fill="none" stroke="#4f7ff5" stroke-width="1.5" />
<line x1="1217" y1="1078" x2="1571" y2="1235" stroke="#4f7ff5" stroke-width="1.5" />
<circle cx="1217" cy="1078" r="4.5" fill="#4f7ff5" />
<rect x="1389" y="1150" width="9" height="8" rx="0" fill="#4f7ff5" />
<circle cx="1571" cy="1235" r="5" fill="#4f7ff5" />
<line x1="1566" y1="1230" x2="1576" y2="1240" stroke="#111" stroke-width="1.6" />
<line x1="1576" y1="1230" x2="1566" y2="1240" stroke="#111" stroke-width="1.6" />
<rect x="1112" y="1146" width="8" height="8" rx="0" fill="#4f7ff5" />
<rect x="1114" y="1148" width="4" height="4" rx="0" fill="#ffffff" />
<rect x="1659" y="1150" width="8" height="8" rx="0" fill="#4f7ff5" />
<rect x="1661" y="1152" width="4" height="4" rx="0" fill="#ffffff" />
<rect x="1111" y="1861" width="10" height="10" rx="0" fill="#4f7ff5" />
<rect x="1113" y="1863" width="5" height="5" rx="0" fill="#ffffff" />
<rect x="1658" y="1861" width="10" height="10" rx="0" fill="#4f7ff5" />
<rect x="1661" y="1863" width="5" height="5" rx="0" fill="#ffffff" />
<rect x="1384.5" y="1489" width="9" height="9" rx="0" fill="#4f7ff5" />
<text x="1581" y="1231" font-size="18.17" fill="#ff33ff" stroke="#ff33ff" stroke-width="0.35" text-anchor="start" textLength="52" lengthAdjust="spacingAndGlyphs" >handle</text>
<rect x="1114.5" y="1144.5" width="553" height="705" rx="10" fill="none" stroke="#ff00ff" stroke-width="7.5" />
<path d="M548 480 H1242 A149 149 0 0 1 1391 629 V1070" fill="none" stroke="#ff00ff" stroke-width="8" />
<path d="M1360 1056 L1391 1072 L1422 1056 L1391 1127 Z" fill="#ff00ff" />
<circle cx="1391" cy="1144.5" r="16" fill="none" stroke="#ff00ff" stroke-width="6" />
<rect x="75" y="307" width="464" height="147" rx="0" fill="#535353" stroke="#5a5a5a" stroke-width="1" />
<rect x="72" y="456" width="471" height="48" rx="0" fill="#5f5f5f" />
<text x="170.5" y="341.5" font-size="27.62" fill="#f0f0f0" stroke="#f0f0f0" stroke-width="0.35" text-anchor="start" textLength="103" lengthAdjust="spacingAndGlyphs" >Pen Tool</text>
<text x="521" y="341.5" font-size="27.62" fill="#f0f0f0" stroke="#f0f0f0" stroke-width="0.35" text-anchor="end" textLength="30" lengthAdjust="spacingAndGlyphs" >(P)</text>
<g transform="translate(135.7,333.8) rotate(45) scale(1.0)"><rect x="-6.5" y="-19.5" width="13" height="11" fill="#c6c6c6"/><path d="M-8 -7 L8 -7 L10.5 -1 Q5 11 0 19 Q-5 11 -10.5 -1 Z" fill="#c6c6c6"/><circle cx="0" cy="4.2" r="2.6" fill="#535353"/><line x1="0" y1="5" x2="0" y2="19.5" stroke="#535353" stroke-width="1.6"/></g>
<text x="170.5" y="392.5" font-size="27.62" fill="#f0f0f0" stroke="#f0f0f0" stroke-width="0.35" text-anchor="start" textLength="272" lengthAdjust="spacingAndGlyphs" >Add Anchor Point Tool</text>
<text x="521" y="392.5" font-size="27.62" fill="#f0f0f0" stroke="#f0f0f0" stroke-width="0.35" text-anchor="end" textLength="34" lengthAdjust="spacingAndGlyphs" >(+)</text>
<g transform="translate(140.1,384.9) rotate(45) scale(1.0)"><rect x="-6.5" y="-19.5" width="13" height="11" fill="#c6c6c6"/><path d="M-8 -7 L8 -7 L10.5 -1 Q5 11 0 19 Q-5 11 -10.5 -1 Z" fill="#c6c6c6"/><circle cx="0" cy="4.2" r="2.6" fill="#535353"/><line x1="0" y1="5" x2="0" y2="19.5" stroke="#535353" stroke-width="1.6"/></g>
<rect x="116" y="371" width="16" height="4.3" rx="0" fill="#c6c6c6" />
<rect x="121.9" y="365.2" width="4.3" height="15.7" rx="0" fill="#c6c6c6" />
<text x="170.5" y="441.5" font-size="27.62" fill="#f0f0f0" stroke="#f0f0f0" stroke-width="0.35" text-anchor="start" textLength="299" lengthAdjust="spacingAndGlyphs" >Delete Anchor Point Tool</text>
<text x="521" y="441.5" font-size="27.62" fill="#f0f0f0" stroke="#f0f0f0" stroke-width="0.35" text-anchor="end" textLength="30" lengthAdjust="spacingAndGlyphs" >(–)</text>
<g transform="translate(140.1,434.9) rotate(45) scale(1.0)"><rect x="-6.5" y="-19.5" width="13" height="11" fill="#c6c6c6"/><path d="M-8 -7 L8 -7 L10.5 -1 Q5 11 0 19 Q-5 11 -10.5 -1 Z" fill="#c6c6c6"/><circle cx="0" cy="4.2" r="2.6" fill="#535353"/><line x1="0" y1="5" x2="0" y2="19.5" stroke="#535353" stroke-width="1.6"/></g>
<rect x="116" y="421.3" width="16" height="3.8" rx="0" fill="#c6c6c6" />
<text x="170.5" y="491.5" font-size="27.62" fill="#4aa6f8" stroke="#4aa6f8" stroke-width="0.35" text-anchor="start" textLength="214" lengthAdjust="spacingAndGlyphs" >Anchor Point Tool</text>
<text x="521" y="491.5" font-size="27.62" fill="#4aa6f8" stroke="#4aa6f8" stroke-width="0.35" text-anchor="end" textLength="105" lengthAdjust="spacingAndGlyphs" >(Shift+C)</text>
<rect x="91" y="477" width="10" height="10" rx="0" fill="#c6c6c6" />
<line x1="128.9" y1="464.5" x2="128.9" y2="497" stroke="#c6c6c6" stroke-width="2.2" />
<path d="M129 465 L135 471 L135.5 473 L151.7 488.3" fill="none" stroke="#c6c6c6" stroke-width="2" />
<rect x="70" y="454" width="475" height="52" rx="9" fill="none" stroke="#ff00ff" stroke-width="8" />
<rect x="2217" y="775" width="498" height="444" rx="0" fill="#535353" />
<rect x="2217" y="775" width="498" height="7" rx="0" fill="#333333" />
<rect x="2217" y="782" width="498" height="56" rx="0" fill="#434343" />
<rect x="2219" y="782" width="131" height="56" rx="0" fill="#535353" />
<rect x="2217" y="775" width="2" height="444" rx="0" fill="#3a3a3a" />
<rect x="2713" y="775" width="2" height="444" rx="0" fill="#3a3a3a" />
<text x="2237.5" y="817" font-size="23.26" font-weight="bold" fill="#f0f0f0" text-anchor="start" textLength="95" lengthAdjust="spacingAndGlyphs" >Swatches</text>
<path d="M2632 804 L2638 810.5 L2632 817 M2642 804 L2648 810.5 L2642 817" fill="none" stroke="#c8c8c8" stroke-width="1.6" />
<rect x="2664" y="803" width="1.8" height="16" rx="0" fill="#c8c8c8" />
<rect x="2680" y="804" width="21" height="2" rx="0" fill="#c8c8c8" />
<rect x="2680" y="810" width="21" height="2" rx="0" fill="#c8c8c8" />
<rect x="2680" y="816" width="21" height="2" rx="0" fill="#c8c8c8" />
<rect x="2250" y="871" width="39" height="39" rx="0" fill="#ffffff" stroke="#2a2a2a" stroke-width="2" />
<rect x="2259" y="880" width="21" height="21" rx="0" fill="#535353" stroke="#2a2a2a" stroke-width="2" />
<line x1="2252" y1="908" x2="2287" y2="873" stroke="#ff1010" stroke-width="3" />
<rect x="2231" y="852" width="38" height="38" rx="0" fill="#ff0000" stroke="#ffffff" stroke-width="2.5" />
<rect x="2229.5" y="850.5" width="41" height="41" rx="0" fill="none" stroke="#2a2a2a" stroke-width="1.5" />
<rect x="2605" y="851" width="97" height="47" rx="3" fill="#4e4e4e" stroke="#4a4a4a" stroke-width="1" />
<rect x="2653.5" y="851" width="48.5" height="47" rx="3" fill="#2e2e2e" />
<rect x="2616" y="859.5" width="24" height="3" rx="0" fill="#c8c8c8" />
<rect x="2616" y="865.5" width="24" height="3" rx="0" fill="#c8c8c8" />
<rect x="2616" y="871.5" width="24" height="3" rx="0" fill="#c8c8c8" />
<rect x="2616" y="877.5" width="24" height="3" rx="0" fill="#c8c8c8" />
<rect x="2663.5" y="861" width="8" height="8" rx="0" fill="#ffffff" />
<rect x="2663.5" y="871" width="8" height="8" rx="0" fill="#ffffff" />
<rect x="2663.5" y="881" width="8" height="8" rx="0" fill="#ffffff" />
<rect x="2673.5" y="861" width="8" height="8" rx="0" fill="#ffffff" />
<rect x="2673.5" y="871" width="8" height="8" rx="0" fill="#ffffff" />
<rect x="2673.5" y="881" width="8" height="8" rx="0" fill="#ffffff" />
<rect x="2683.5" y="861" width="8" height="8" rx="0" fill="#ffffff" />
<rect x="2683.5" y="871" width="8" height="8" rx="0" fill="#ffffff" />
<rect x="2683.5" y="881" width="8" height="8" rx="0" fill="#ffffff" />
<rect x="2229" y="921.5" width="473.5" height="241.5" rx="0" fill="none" stroke="#5d5d5d" stroke-width="1.5" />
<path d="M2683 937 L2688 932 L2693 937" fill="none" stroke="#5f5f5f" stroke-width="1.5" />
<path d="M2683 1147 L2688 1152 L2693 1147" fill="none" stroke="#5f5f5f" stroke-width="1.5" />
<defs><linearGradient id="sg1" x1="0" x2="1"><stop offset="0" stop-color="#fff"/><stop offset="1" stop-color="#000"/></linearGradient><linearGradient id="sg2" x1="0" x2="1"><stop offset="0" stop-color="#f26522"/><stop offset="0.5" stop-color="#f7941d"/><stop offset="1" stop-color="#ffde17"/></linearGradient><pattern id="chk" width="8" height="8" patternUnits="userSpaceOnUse"><rect width="8" height="8" fill="#ffffff"/><rect width="4" height="4" fill="#cfcfcf"/><rect x="4" y="4" width="4" height="4" fill="#cfcfcf"/></pattern><linearGradient id="cyg" x1="0" x2="1"><stop offset="0" stop-color="#3cc8e0"/><stop offset="1" stop-color="#3cc8e0" stop-opacity="0"/></linearGradient></defs>
<rect x="2231.0" y="923" width="27" height="27" rx="0" fill="#ffffff" />
<line x1="2233.0" y1="948" x2="2256.0" y2="925" stroke="#ff0000" stroke-width="2.5" />
<rect x="2259.2" y="923" width="27" height="27" rx="0" fill="#eeeeee" />
<circle cx="2272.7" cy="936.5" r="7" fill="none" stroke="#555" stroke-width="1.2" />
<circle cx="2272.7" cy="936.5" r="2.5" fill="none" stroke="#555" stroke-width="1.2" />
<line x1="2262.2" y1="936.5" x2="2283.2" y2="936.5" stroke="#555" stroke-width="1" />
<line x1="2272.7" y1="926" x2="2272.7" y2="947" stroke="#555" stroke-width="1" />
<rect x="2287.4" y="923" width="27" height="27" rx="0" fill="#ffffff" />
<rect x="2315.6" y="923" width="27" height="27" rx="0" fill="#000000" />
<rect x="2343.8" y="923" width="27" height="27" rx="0" fill="#ffffff" />
<rect x="2345.8" y="925" width="23" height="23" rx="0" fill="#000" />
<rect x="2348.3" y="927.5" width="18" height="18" rx="0" fill="#ff0000" />
<rect x="2372.0" y="923" width="27" height="27" rx="0" fill="#ffff00" />
<rect x="2400.2" y="923" width="27" height="27" rx="0" fill="#00ff00" />
<rect x="2428.4" y="923" width="27" height="27" rx="0" fill="#00ffff" />
<rect x="2456.6" y="923" width="27" height="27" rx="0" fill="#0000ff" />
<rect x="2484.8" y="923" width="27" height="27" rx="0" fill="#ff00ff" />
<rect x="2513.0" y="923" width="27" height="27" rx="0" fill="#c1272d" />
<rect x="2541.2" y="923" width="27" height="27" rx="0" fill="#ed1c24" />
<rect x="2569.4" y="923" width="27" height="27" rx="0" fill="#f15a24" />
<rect x="2597.6" y="923" width="27" height="27" rx="0" fill="#f7931e" />
<rect x="2625.8" y="923" width="27" height="27" rx="0" fill="#fbb03b" />
<rect x="2231.0" y="951" width="27" height="27" rx="0" fill="#fcee21" />
<rect x="2259.2" y="951" width="27" height="27" rx="0" fill="#d9e021" />
<rect x="2287.4" y="951" width="27" height="27" rx="0" fill="#8cc63f" />
<rect x="2315.6" y="951" width="27" height="27" rx="0" fill="#39b54a" />
<rect x="2343.8" y="951" width="27" height="27" rx="0" fill="#009245" />
<rect x="2372.0" y="951" width="27" height="27" rx="0" fill="#006837" />
<rect x="2400.2" y="951" width="27" height="27" rx="0" fill="#22b573" />
<rect x="2428.4" y="951" width="27" height="27" rx="0" fill="#00a99d" />
<rect x="2456.6" y="951" width="27" height="27" rx="0" fill="#29abe2" />
<rect x="2484.8" y="951" width="27" height="27" rx="0" fill="#0071bc" />
<rect x="2513.0" y="951" width="27" height="27" rx="0" fill="#2e3192" />
<rect x="2541.2" y="951" width="27" height="27" rx="0" fill="#1b1464" />
<rect x="2569.4" y="951" width="27" height="27" rx="0" fill="#662d91" />
<rect x="2597.6" y="951" width="27" height="27" rx="0" fill="#93278f" />
<rect x="2625.8" y="951" width="27" height="27" rx="0" fill="#9e005d" />
<rect x="2231.0" y="979.5" width="27" height="27" rx="0" fill="#d4145a" />
<rect x="2259.2" y="979.5" width="27" height="27" rx="0" fill="#ed1e79" />
<rect x="2287.4" y="979.5" width="27" height="27" rx="0" fill="#c7b299" />
<rect x="2315.6" y="979.5" width="27" height="27" rx="0" fill="#998675" />
<rect x="2343.8" y="979.5" width="27" height="27" rx="0" fill="#736357" />
<rect x="2372.0" y="979.5" width="27" height="27" rx="0" fill="#534741" />
<rect x="2400.2" y="979.5" width="27" height="27" rx="0" fill="#c69c6d" />
<rect x="2428.4" y="979.5" width="27" height="27" rx="0" fill="#a67c52" />
<rect x="2456.6" y="979.5" width="27" height="27" rx="0" fill="#8c6239" />
<rect x="2484.8" y="979.5" width="27" height="27" rx="0" fill="#754c24" />
<rect x="2513.0" y="979.5" width="27" height="27" rx="0" fill="#603813" />
<rect x="2541.2" y="979.5" width="27" height="27" rx="0" fill="#42210b" />
<rect x="2569.4" y="979.5" width="27" height="27" rx="0" fill="url(#sg1)" />
<rect x="2597.6" y="979.5" width="27" height="27" rx="0" fill="url(#sg2)" />
<rect x="2625.8" y="979.5" width="27" height="27" rx="0" fill="url(#chk)" />
<rect x="2625.8" y="979.5" width="27" height="27" rx="0" fill="url(#cyg)" />
<rect x="2231" y="1008" width="27" height="27" rx="0" fill="#1f57a4" />
<g fill="none" stroke="#d8e6f8" stroke-width="1.2"><path d="M2233 1014 q4 -5 8 0 q3 4 -1 6"/><path d="M2244 1012 q5 -3 7 2 q1 4 -3 4"/><path d="M2235 1026 q2 -6 8 -4 q4 2 1 6"/><path d="M2247 1024 q6 -4 8 2 q0 5 -5 5"/><path d="M2239 1033 q4 -3 7 1"/><path d="M2252 1010 q3 3 0 6"/></g>
<path d="M2233 1047 H2242 L2245 1051 H2255 V1063 H2233 Z" fill="#c8c8c8" />
<path d="M2233 1051 H2255" fill="none" stroke="#535353" stroke-width="1" />
<rect x="2259.2" y="1041" width="27" height="26" rx="0" fill="#6cc6cc" />
<rect x="2287.4" y="1041" width="27" height="26" rx="0" fill="#8a8fc8" />
<rect x="2315.6" y="1041" width="27" height="26" rx="0" fill="#bd9ecf" />
<path d="M2233 1079 H2242 L2245 1083 H2255 V1095 H2233 Z" fill="#c8c8c8" />
<path d="M2233 1083 H2255" fill="none" stroke="#535353" stroke-width="1" />
<rect x="2259.2" y="1073.5" width="27" height="26" rx="0" fill="#000000" />
<rect x="2287.4" y="1073.5" width="27" height="26" rx="0" fill="#1a1a1a" />
<rect x="2315.6" y="1073.5" width="27" height="26" rx="0" fill="#333333" />
<rect x="2343.8" y="1073.5" width="27" height="26" rx="0" fill="#4d4d4d" />
<rect x="2372.0" y="1073.5" width="27" height="26" rx="0" fill="#666666" />
<rect x="2400.2" y="1073.5" width="27" height="26" rx="0" fill="#808080" />
<rect x="2428.4" y="1073.5" width="27" height="26" rx="0" fill="#999999" />
<rect x="2456.6" y="1073.5" width="27" height="26" rx="0" fill="#b3b3b3" />
<rect x="2484.8" y="1073.5" width="27" height="26" rx="0" fill="#cccccc" />
<rect x="2513.0" y="1073.5" width="27" height="26" rx="0" fill="#e6e6e6" />
<rect x="2541.2" y="1073.5" width="27" height="26" rx="0" fill="#f2f2f2" />
<rect x="2241" y="1175" width="4" height="15" rx="0" fill="#c8c8c8" />
<rect x="2248" y="1175" width="4" height="15" rx="0" fill="#c8c8c8" />
<path d="M2255 1175 L2259 1174 L2265 1189 L2261 1190 Z" fill="#c8c8c8" />
<path d="M2267 1192 L2273 1192 L2270 1195 Z" fill="#c8c8c8" />
<path d="M2298 1180 V1173 H2320 V1192 H2305" fill="none" stroke="#c8c8c8" stroke-width="2" />
<path d="M2302 1177 H2316 V1188" fill="none" stroke="#c8c8c8" stroke-width="1.5" />
<path d="M2294 1188 H2306 M2302 1184 L2306 1188 L2302 1192" fill="none" stroke="#c8c8c8" stroke-width="2" />
<rect x="2421.0" y="1174.0" width="6" height="6" rx="0" fill="#c8c8c8" />
<rect x="2421.0" y="1181.5" width="6" height="6" rx="0" fill="#8a8a8a" />
<rect x="2421.0" y="1189.0" width="6" height="6" rx="0" fill="#c8c8c8" />
<rect x="2428.5" y="1174.0" width="6" height="6" rx="0" fill="#c8c8c8" />
<rect x="2428.5" y="1181.5" width="6" height="6" rx="0" fill="#c8c8c8" />
<rect x="2428.5" y="1189.0" width="6" height="6" rx="0" fill="#8a8a8a" />
<rect x="2436.0" y="1174.0" width="6" height="6" rx="0" fill="#c8c8c8" />
<rect x="2436.0" y="1181.5" width="6" height="6" rx="0" fill="#8a8a8a" />
<rect x="2436.0" y="1189.0" width="6" height="6" rx="0" fill="#c8c8c8" />
<path d="M2446 1190 L2452 1190 L2449 1194 Z" fill="#c8c8c8" />
<rect x="2477" y="1174" width="21" height="19" rx="0" fill="none" stroke="#c8c8c8" stroke-width="2" />
<rect x="2481" y="1179.25" width="3" height="1.5" rx="0" fill="#c8c8c8" />
<rect x="2486" y="1179.25" width="9" height="1.5" rx="0" fill="#c8c8c8" />
<rect x="2481" y="1183.25" width="3" height="1.5" rx="0" fill="#c8c8c8" />
<rect x="2486" y="1183.25" width="9" height="1.5" rx="0" fill="#c8c8c8" />
<rect x="2481" y="1187.25" width="3" height="1.5" rx="0" fill="#c8c8c8" />
<rect x="2486" y="1187.25" width="9" height="1.5" rx="0" fill="#c8c8c8" />
<path d="M2527 1174 H2537 L2540 1177 H2553 V1192 H2527 Z" fill="#c8c8c8" />
<rect x="2584" y="1173" width="22" height="20" rx="0" fill="none" stroke="#c8c8c8" stroke-width="2" />
<rect x="2594" y="1178" width="2" height="10" rx="0" fill="#c8c8c8" />
<rect x="2590" y="1182" width="10" height="2" rx="0" fill="#c8c8c8" />
<rect x="2634" y="1175" width="22" height="2" rx="0" fill="#c8c8c8" />
<rect x="2641" y="1171" width="8" height="4" rx="0" fill="none" stroke="#c8c8c8" stroke-width="1.5" />
<path d="M2637 1178 H2653 V1193 H2637 Z" fill="none" stroke="#c8c8c8" stroke-width="2" />
<rect x="2642" y="1181" width="1.5" height="9" rx="0" fill="#c8c8c8" />
<rect x="2645" y="1181" width="1.5" height="9" rx="0" fill="#c8c8c8" />
<rect x="2648" y="1181" width="1.5" height="9" rx="0" fill="#c8c8c8" />
<rect x="2217" y="1202" width="498" height="4" rx="0" fill="#3a3a3a" />
<rect x="2446.0" y="1209" width="1.8" height="7" rx="0" fill="#2e2e2e" />
<rect x="2449.8" y="1209" width="1.8" height="7" rx="0" fill="#2e2e2e" />
<rect x="2453.6" y="1209" width="1.8" height="7" rx="0" fill="#2e2e2e" />
<rect x="2457.4" y="1209" width="1.8" height="7" rx="0" fill="#2e2e2e" />
<rect x="2461.2" y="1209" width="1.8" height="7" rx="0" fill="#2e2e2e" />
<rect x="2465.0" y="1209" width="1.8" height="7" rx="0" fill="#2e2e2e" />
<rect x="2468.8" y="1209" width="1.8" height="7" rx="0" fill="#2e2e2e" />
<rect x="2472.6" y="1209" width="1.8" height="7" rx="0" fill="#2e2e2e" />
<rect x="2476.4" y="1209" width="1.8" height="7" rx="0" fill="#2e2e2e" />
<rect x="2480.2" y="1209" width="1.8" height="7" rx="0" fill="#2e2e2e" />
<rect x="2217" y="1217" width="498" height="2" rx="0" fill="#3a3a3a" />
<rect x="2717" y="305" width="75" height="1.8" rx="0" fill="#3a3a3a" />
<rect x="2735.0" y="171.5" width="1.8" height="8" rx="0" fill="#2c2c2c" />
<rect x="2738.9" y="171.5" width="1.8" height="8" rx="0" fill="#2c2c2c" />
<rect x="2742.8" y="171.5" width="1.8" height="8" rx="0" fill="#2c2c2c" />
<rect x="2746.7" y="171.5" width="1.8" height="8" rx="0" fill="#2c2c2c" />
<rect x="2750.6" y="171.5" width="1.8" height="8" rx="0" fill="#2c2c2c" />
<rect x="2754.5" y="171.5" width="1.8" height="8" rx="0" fill="#2c2c2c" />
<rect x="2758.4" y="171.5" width="1.8" height="8" rx="0" fill="#2c2c2c" />
<rect x="2762.3" y="171.5" width="1.8" height="8" rx="0" fill="#2c2c2c" />
<rect x="2766.2" y="171.5" width="1.8" height="8" rx="0" fill="#2c2c2c" />
<rect x="2770.1" y="171.5" width="1.8" height="8" rx="0" fill="#2c2c2c" />
<rect x="2717" y="443" width="75" height="1.8" rx="0" fill="#3a3a3a" />
<rect x="2735.0" y="312.5" width="1.8" height="8" rx="0" fill="#2c2c2c" />
<rect x="2738.9" y="312.5" width="1.8" height="8" rx="0" fill="#2c2c2c" />
<rect x="2742.8" y="312.5" width="1.8" height="8" rx="0" fill="#2c2c2c" />
<rect x="2746.7" y="312.5" width="1.8" height="8" rx="0" fill="#2c2c2c" />
<rect x="2750.6" y="312.5" width="1.8" height="8" rx="0" fill="#2c2c2c" />
<rect x="2754.5" y="312.5" width="1.8" height="8" rx="0" fill="#2c2c2c" />
<rect x="2758.4" y="312.5" width="1.8" height="8" rx="0" fill="#2c2c2c" />
<rect x="2762.3" y="312.5" width="1.8" height="8" rx="0" fill="#2c2c2c" />
<rect x="2766.2" y="312.5" width="1.8" height="8" rx="0" fill="#2c2c2c" />
<rect x="2770.1" y="312.5" width="1.8" height="8" rx="0" fill="#2c2c2c" />
<rect x="2717" y="583" width="75" height="1.8" rx="0" fill="#3a3a3a" />
<rect x="2735.0" y="450.5" width="1.8" height="8" rx="0" fill="#2c2c2c" />
<rect x="2738.9" y="450.5" width="1.8" height="8" rx="0" fill="#2c2c2c" />
<rect x="2742.8" y="450.5" width="1.8" height="8" rx="0" fill="#2c2c2c" />
<rect x="2746.7" y="450.5" width="1.8" height="8" rx="0" fill="#2c2c2c" />
<rect x="2750.6" y="450.5" width="1.8" height="8" rx="0" fill="#2c2c2c" />
<rect x="2754.5" y="450.5" width="1.8" height="8" rx="0" fill="#2c2c2c" />
<rect x="2758.4" y="450.5" width="1.8" height="8" rx="0" fill="#2c2c2c" />
<rect x="2762.3" y="450.5" width="1.8" height="8" rx="0" fill="#2c2c2c" />
<rect x="2766.2" y="450.5" width="1.8" height="8" rx="0" fill="#2c2c2c" />
<rect x="2770.1" y="450.5" width="1.8" height="8" rx="0" fill="#2c2c2c" />
<rect x="2717" y="780" width="75" height="1.8" rx="0" fill="#3a3a3a" />
<rect x="2735.0" y="590.5" width="1.8" height="8" rx="0" fill="#2c2c2c" />
<rect x="2738.9" y="590.5" width="1.8" height="8" rx="0" fill="#2c2c2c" />
<rect x="2742.8" y="590.5" width="1.8" height="8" rx="0" fill="#2c2c2c" />
<rect x="2746.7" y="590.5" width="1.8" height="8" rx="0" fill="#2c2c2c" />
<rect x="2750.6" y="590.5" width="1.8" height="8" rx="0" fill="#2c2c2c" />
<rect x="2754.5" y="590.5" width="1.8" height="8" rx="0" fill="#2c2c2c" />
<rect x="2758.4" y="590.5" width="1.8" height="8" rx="0" fill="#2c2c2c" />
<rect x="2762.3" y="590.5" width="1.8" height="8" rx="0" fill="#2c2c2c" />
<rect x="2766.2" y="590.5" width="1.8" height="8" rx="0" fill="#2c2c2c" />
<rect x="2770.1" y="590.5" width="1.8" height="8" rx="0" fill="#2c2c2c" />
<rect x="2717" y="862" width="75" height="1.8" rx="0" fill="#3a3a3a" />
<rect x="2735.0" y="787.5" width="1.8" height="8" rx="0" fill="#2c2c2c" />
<rect x="2738.9" y="787.5" width="1.8" height="8" rx="0" fill="#2c2c2c" />
<rect x="2742.8" y="787.5" width="1.8" height="8" rx="0" fill="#2c2c2c" />
<rect x="2746.7" y="787.5" width="1.8" height="8" rx="0" fill="#2c2c2c" />
<rect x="2750.6" y="787.5" width="1.8" height="8" rx="0" fill="#2c2c2c" />
<rect x="2754.5" y="787.5" width="1.8" height="8" rx="0" fill="#2c2c2c" />
<rect x="2758.4" y="787.5" width="1.8" height="8" rx="0" fill="#2c2c2c" />
<rect x="2762.3" y="787.5" width="1.8" height="8" rx="0" fill="#2c2c2c" />
<rect x="2766.2" y="787.5" width="1.8" height="8" rx="0" fill="#2c2c2c" />
<rect x="2770.1" y="787.5" width="1.8" height="8" rx="0" fill="#2c2c2c" />
<rect x="2717" y="945" width="75" height="1.8" rx="0" fill="#3a3a3a" />
<rect x="2735.0" y="869.5" width="1.8" height="8" rx="0" fill="#2c2c2c" />
<rect x="2738.9" y="869.5" width="1.8" height="8" rx="0" fill="#2c2c2c" />
<rect x="2742.8" y="869.5" width="1.8" height="8" rx="0" fill="#2c2c2c" />
<rect x="2746.7" y="869.5" width="1.8" height="8" rx="0" fill="#2c2c2c" />
<rect x="2750.6" y="869.5" width="1.8" height="8" rx="0" fill="#2c2c2c" />
<rect x="2754.5" y="869.5" width="1.8" height="8" rx="0" fill="#2c2c2c" />
<rect x="2758.4" y="869.5" width="1.8" height="8" rx="0" fill="#2c2c2c" />
<rect x="2762.3" y="869.5" width="1.8" height="8" rx="0" fill="#2c2c2c" />
<rect x="2766.2" y="869.5" width="1.8" height="8" rx="0" fill="#2c2c2c" />
<rect x="2770.1" y="869.5" width="1.8" height="8" rx="0" fill="#2c2c2c" />
<rect x="2717" y="1085" width="75" height="1.8" rx="0" fill="#3a3a3a" />
<rect x="2735.0" y="952.5" width="1.8" height="8" rx="0" fill="#2c2c2c" />
<rect x="2738.9" y="952.5" width="1.8" height="8" rx="0" fill="#2c2c2c" />
<rect x="2742.8" y="952.5" width="1.8" height="8" rx="0" fill="#2c2c2c" />
<rect x="2746.7" y="952.5" width="1.8" height="8" rx="0" fill="#2c2c2c" />
<rect x="2750.6" y="952.5" width="1.8" height="8" rx="0" fill="#2c2c2c" />
<rect x="2754.5" y="952.5" width="1.8" height="8" rx="0" fill="#2c2c2c" />
<rect x="2758.4" y="952.5" width="1.8" height="8" rx="0" fill="#2c2c2c" />
<rect x="2762.3" y="952.5" width="1.8" height="8" rx="0" fill="#2c2c2c" />
<rect x="2766.2" y="952.5" width="1.8" height="8" rx="0" fill="#2c2c2c" />
<rect x="2770.1" y="952.5" width="1.8" height="8" rx="0" fill="#2c2c2c" />
<rect x="2747" y="219" width="19" height="14" rx="2" fill="#c6c6c6" />
<path d="M2752 219 L2746 204 Q2742 198 2745 194 Q2750 197 2752 205 L2755 219 Z" fill="#c6c6c6" />
<path d="M2757 219 L2753 200 L2751 193 H2757 L2758 200 Z" fill="#c6c6c6" />
<path d="M2760 219 L2765 204 Q2761 199 2763 196 Q2770 196 2773 200 L2766 206 L2762 219 Z" fill="#c6c6c6" />
<circle cx="2756" cy="258" r="7" fill="#c6c6c6" />
<circle cx="2748" cy="268" r="7" fill="#c6c6c6" />
<circle cx="2764" cy="268" r="7" fill="#c6c6c6" />
<path d="M2754 268 Q2754 278 2746 283 H2766 Q2758 278 2758 268 Z" fill="#c6c6c6" />
<rect x="2745" y="282" width="23" height="2" rx="0" fill="#c6c6c6" />
<rect x="2739" y="339.8" width="35" height="2.6" rx="0" fill="#c6c6c6" />
<rect x="2739" y="348" width="35" height="4" rx="0" fill="#c6c6c6" />
<rect x="2739" y="358" width="35" height="6" rx="0" fill="#c6c6c6" />
<circle cx="2750" cy="405.3" r="12.6" fill="#c6c6c6" />
<circle cx="2760" cy="415" r="12.3" fill="#8c8c8c" stroke="#c6c6c6" stroke-width="2" />
<path d="M2749.5 418 A12.6 12.6 0 0 0 2762.6 405" fill="none" stroke="#a8a8a8" stroke-width="1.2" />
<circle cx="2756" cy="492.5" r="12.3" fill="#c6c6c6" />
<circle cx="2756" cy="492.5" r="16.3" fill="none" stroke="#c6c6c6" stroke-width="2.2" stroke-dasharray="3.2 2.8"/>
<rect x="2745.5" y="534.5" width="28" height="27.5" rx="0" fill="none" stroke="#c6c6c6" stroke-width="2" />
<rect x="2744" y="553" width="12.5" height="13" rx="0" fill="#c6c6c6" />
<rect x="2740" y="549.5" width="10.5" height="10.5" rx="0" fill="#535353" stroke="#c6c6c6" stroke-width="2" />
<path d="M2756.5 615.5 L2773 627 L2756.5 638.5 L2740 627 Z" fill="#c6c6c6" />
<path d="M2740 639.5 L2744 636.5 L2756.5 644.5 L2769 636.5 L2773 639.5 L2756.5 650 Z" fill="#c6c6c6" />
<path d="M2755 675.5 H2741 V704.5 H2770 V690" fill="none" stroke="#c6c6c6" stroke-width="4" />
<line x1="2752" y1="683" x2="2772" y2="673" stroke="#c6c6c6" stroke-width="3.5" />
<path d="M2759.5 672 H2774 V686" fill="none" stroke="#c6c6c6" stroke-width="4" />
<rect x="2738.5" y="728.3" width="19.5" height="25" rx="0" fill="none" stroke="#c6c6c6" stroke-width="2" />
<rect x="2746" y="742" width="27" height="19" rx="0" fill="#535353" stroke="#c6c6c6" stroke-width="2" />
<rect x="2726.5" y="805" width="56.5" height="46" rx="5" fill="#333333" stroke="#4c4c4c" stroke-width="1.2" />
<rect x="2739" y="817.5" width="33" height="22" rx="0" fill="#c6c6c6" />
<rect x="2741" y="819.5" width="8.5" height="8" rx="0" fill="#8e8e8e" />
<rect x="2751.5" y="819.5" width="8.5" height="8" rx="0" fill="#c8c8c8" />
<rect x="2762" y="819.5" width="8.5" height="8" rx="0" fill="#8e8e8e" />
<rect x="2741" y="829.5" width="8.5" height="8" rx="0" fill="#8e8e8e" />
<rect x="2751.5" y="829.5" width="8.5" height="8" rx="0" fill="#8e8e8e" />
<rect x="2762" y="829.5" width="8.5" height="8" rx="0" fill="#8e8e8e" />
<defs><linearGradient id="gstrip" x1="0" x2="1"><stop offset="0" stop-color="#111"/><stop offset="1" stop-color="#f4f4f4"/></linearGradient></defs>
<rect x="2740" y="900" width="33" height="21" rx="0" fill="url(#gstrip)" stroke="#cfcfcf" stroke-width="1.5" />
<rect x="2743" y="983" width="26" height="25" rx="0" fill="none" stroke="#c6c6c6" stroke-width="2" />
<circle cx="2756" cy="995.5" r="2.2" fill="#c6c6c6" />
<rect x="2739.5" y="979.5" width="7" height="7" rx="0" fill="#c6c6c6" />
<rect x="2765.5" y="979.5" width="7" height="7" rx="0" fill="#c6c6c6" />
<rect x="2739.5" y="1004.5" width="7" height="7" rx="0" fill="#c6c6c6" />
<rect x="2765.5" y="1004.5" width="7" height="7" rx="0" fill="#c6c6c6" />
<rect x="2752.5" y="979.5" width="7" height="7" rx="0" fill="#c6c6c6" />
<rect x="2752.5" y="1004.5" width="7" height="7" rx="0" fill="#c6c6c6" />
<rect x="2739.5" y="992.0" width="7" height="7" rx="0" fill="#c6c6c6" />
<rect x="2765.5" y="992.0" width="7" height="7" rx="0" fill="#c6c6c6" />
<rect x="2741" y="1035" width="2" height="36" rx="0" fill="#c6c6c6" />
<rect x="2745" y="1039" width="16" height="11" rx="0" fill="#c6c6c6" />
<rect x="2745" y="1054" width="27" height="11" rx="0" fill="#c6c6c6" />
<rect x="2798" y="165" width="502" height="56" rx="0" fill="#434343" />
<rect x="2798" y="219" width="502" height="2" rx="0" fill="#393939" />
<rect x="2798" y="165" width="142" height="56" rx="0" fill="#535353" />
<rect x="2940" y="165" width="2" height="56" rx="0" fill="#3a3a3a" />
<rect x="3064" y="165" width="2" height="56" rx="0" fill="#3a3a3a" />
<text x="2816.5" y="198.5" font-size="23.26" font-weight="bold" fill="#f4f4f4" text-anchor="start" textLength="105.5" lengthAdjust="spacingAndGlyphs" >Properties</text>
<text x="2958.5" y="198.5" font-size="23.26" font-weight="bold" fill="#b4b4b4" text-anchor="start" textLength="90.5" lengthAdjust="spacingAndGlyphs" >Libraries</text>
<text x="2818" y="262" font-size="21.80" fill="#cfcfcf" stroke="#cfcfcf" stroke-width="0.35" text-anchor="start" textLength="126" lengthAdjust="spacingAndGlyphs" >Anchor Point</text>
<rect x="2798" y="286" width="481" height="2" rx="0" fill="#4a4a4a" />
<text x="2818" y="332.5" font-size="22.53" fill="#cfcfcf" stroke="#cfcfcf" stroke-width="0.35" text-anchor="start" textLength="101" lengthAdjust="spacingAndGlyphs" >Transform</text>
<line x1="2820" y1="400" x2="2859" y2="400" stroke="#c6c6c6" stroke-width="1.8" />
<rect x="2834" y="395" width="10" height="10" rx="0" fill="#c6c6c6" />
<text x="2877.5" y="380" font-size="21.80" fill="#cfcfcf" stroke="#cfcfcf" stroke-width="0.35" text-anchor="start" textLength="19" lengthAdjust="spacingAndGlyphs" >X:</text>
<rect x="2908.5" y="351" width="113" height="41" rx="3" fill="#404040" stroke="#5e5e5e" stroke-width="1.5" />
<text x="2919.5" y="378" font-size="22.53" fill="#f2f2f2" stroke="#f2f2f2" stroke-width="0.35" text-anchor="start" textLength="94" lengthAdjust="spacingAndGlyphs" >4.3237 in</text>
<text x="2877.5" y="434" font-size="21.80" fill="#cfcfcf" stroke="#cfcfcf" stroke-width="0.35" text-anchor="start" textLength="19" lengthAdjust="spacingAndGlyphs" >Y:</text>
<rect x="2908.5" y="404" width="113" height="40" rx="3" fill="#404040" stroke="#5e5e5e" stroke-width="1.5" />
<text x="2919.5" y="431" font-size="22.53" fill="#f2f2f2" stroke="#f2f2f2" stroke-width="0.35" text-anchor="start" textLength="48" lengthAdjust="spacingAndGlyphs" >11 in</text>
<text x="3051.5" y="380" font-size="21.80" fill="#cfcfcf" stroke="#cfcfcf" stroke-width="0.35" text-anchor="start" textLength="23" lengthAdjust="spacingAndGlyphs" >W:</text>
<rect x="3086.5" y="351" width="115" height="42" rx="3" fill="#595959" />
<text x="3098" y="378" font-size="21.80" fill="#6c6c6c" stroke="#6c6c6c" stroke-width="0.35" text-anchor="start" textLength="36" lengthAdjust="spacingAndGlyphs" >0 in</text>
<text x="3052" y="434" font-size="21.80" fill="#cfcfcf" stroke="#cfcfcf" stroke-width="0.35" text-anchor="start" textLength="20" lengthAdjust="spacingAndGlyphs" >H:</text>
<rect x="3086.5" y="404" width="115" height="41" rx="3" fill="#595959" />
<text x="3098" y="431" font-size="21.80" fill="#6c6c6c" stroke="#6c6c6c" stroke-width="0.35" text-anchor="start" textLength="36" lengthAdjust="spacingAndGlyphs" >0 in</text>
<rect x="3220" y="375" width="48" height="48" rx="3" fill="#2e2e2e" />
<g fill="none" stroke="#f8f8f8" stroke-width="3"><path d="M3238.8 395 V390.5 A5.7 5.7 0 0 1 3250.2 390.5 V398 A5.7 5.7 0 0 1 3238.8 398"/><path d="M3250.2 400 V408.5 A5.7 5.7 0 0 1 3238.8 408.5 V402 A5.7 5.7 0 0 1 3246 397"/></g>
<path d="M2869 483 H2893 M2869 483 L2886 466 M2884 483 Q2884 476 2880 472" fill="none" stroke="#c6c6c6" stroke-width="2" />
<rect x="2893" y="470" width="3" height="3" rx="0" fill="#c6c6c6" />
<rect x="2893" y="479" width="3" height="3" rx="0" fill="#c6c6c6" />
<rect x="2915.5" y="456.5" width="114" height="40.5" rx="3" fill="#595959" />
<text x="2924" y="484" font-size="21.80" fill="#6c6c6c" stroke="#6c6c6c" stroke-width="0.35" text-anchor="start" textLength="22" lengthAdjust="spacingAndGlyphs" >0°</text>
<path d="M3007 474 L3014 481 L3021 474" fill="none" stroke="#6c6c6c" stroke-width="1.8" />
<path d="M3116 471 L3124 479 L3116 487 Z" fill="none" stroke="#c6c6c6" stroke-width="2" />
<path d="M3141 470.5 L3131.5 479 L3141 487.5 Z" fill="#c6c6c6" />
<line x1="3128" y1="466" x2="3128" y2="492" stroke="#c6c6c6" stroke-width="1.5" stroke-dasharray="2 2"/>
<path d="M3167.5 466 H3185.5 L3176.5 475.5 Z" fill="#c6c6c6" />
<path d="M3168.5 490 H3184.5 L3176.5 483 Z" fill="none" stroke="#c6c6c6" stroke-width="2" />
<line x1="3164" y1="479" x2="3189" y2="479" stroke="#c6c6c6" stroke-width="1.5" stroke-dasharray="2 2"/>
<circle cx="3241" cy="520" r="4.5" fill="#c4c4c4" />
<circle cx="3252" cy="520" r="4.5" fill="#c4c4c4" />
<circle cx="3263" cy="520" r="4.5" fill="#c4c4c4" />
<rect x="2798" y="538.5" width="481" height="2" rx="0" fill="#4a4a4a" />
<text x="2818.5" y="585.5" font-size="21.80" fill="#cfcfcf" stroke="#cfcfcf" stroke-width="0.35" text-anchor="start" textLength="115" lengthAdjust="spacingAndGlyphs" >Appearance</text>
<rect x="2819" y="616" width="35" height="35" rx="0" fill="#ff0000" stroke="#ffffff" stroke-width="2.5" />
<rect x="2817.5" y="614.5" width="38" height="38" rx="0" fill="none" stroke="#2a2a2a" stroke-width="1.5" />
<text x="2880" y="644.5" font-size="22.53" fill="#cfcfcf" stroke="#cfcfcf" stroke-width="0.35" text-anchor="start" textLength="26" lengthAdjust="spacingAndGlyphs" >Fill</text>
<rect x="2819" y="675" width="35" height="35" rx="0" fill="#ffffff" stroke="#2a2a2a" stroke-width="1.5" />
<rect x="2828" y="684" width="17" height="17" rx="0" fill="#4a4a4a" stroke="#2a2a2a" stroke-width="2" />
<line x1="2820" y1="709" x2="2853" y2="676" stroke="#ff1010" stroke-width="3" />
<text x="2880" y="700" font-size="22.53" fill="#cfcfcf" stroke="#cfcfcf" stroke-width="0.35" text-anchor="start" textLength="60" lengthAdjust="spacingAndGlyphs" >Stroke</text>
<line x1="2880" y1="707" x2="2940" y2="707" stroke="#cfcfcf" stroke-width="1.5" stroke-dasharray="2 2"/>
<rect x="2986.5" y="671" width="140.5" height="41" rx="3" fill="#4e4e4e" stroke="#5e5e5e" stroke-width="1.5" />
<rect x="3024" y="672" width="66" height="39" rx="0" fill="#444444" />
<line x1="3024" y1="672" x2="3024" y2="711" stroke="#5e5e5e" stroke-width="1.5" />
<line x1="3090" y1="672" x2="3090" y2="711" stroke="#5e5e5e" stroke-width="1.5" />
<path d="M2998 684 L3005 678 L3012 684" fill="none" stroke="#e8e8e8" stroke-width="1.8" />
<path d="M2998 699 L3005 705 L3012 699" fill="none" stroke="#e8e8e8" stroke-width="1.8" />
<path d="M3101 688 L3108 695 L3115 688" fill="none" stroke="#e8e8e8" stroke-width="1.8" />
<defs><pattern id="opchk" width="16" height="16" patternUnits="userSpaceOnUse" x="2820" y="736"><rect width="16" height="16" fill="#5e5e5e"/><rect width="8" height="8" fill="#4c4c4c"/><rect x="8" y="8" width="8" height="8" fill="#4c4c4c"/></pattern></defs>
<rect x="2820.5" y="736" width="33" height="31" rx="0" fill="url(#opchk)" stroke="#c0c0c0" stroke-width="2" />
<text x="2880" y="757" font-size="22.53" fill="#cfcfcf" stroke="#cfcfcf" stroke-width="0.35" text-anchor="start" textLength="74" lengthAdjust="spacingAndGlyphs" >Opacity</text>
<line x1="2880" y1="764" x2="2954" y2="764" stroke="#cfcfcf" stroke-width="1.5" stroke-dasharray="2 2"/>
<rect x="2986.5" y="730.5" width="140.5" height="40" rx="3" fill="#4e4e4e" stroke="#5e5e5e" stroke-width="1.5" />
<rect x="2988" y="732" width="102" height="37" rx="0" fill="#444444" />
<line x1="3090" y1="731" x2="3090" y2="770" stroke="#5e5e5e" stroke-width="1.5" />
<text x="2996" y="754" font-size="22.53" fill="#f2f2f2" stroke="#f2f2f2" stroke-width="0.35" text-anchor="start" textLength="50" lengthAdjust="spacingAndGlyphs" >100%</text>
<path d="M3105 744 L3112 751 L3105 758" fill="none" stroke="#e8e8e8" stroke-width="1.8" />
<text x="2832" y="830" font-size="26.16" font-style="italic" fill="#a8a8a8" stroke="#a8a8a8" stroke-width="0.35" text-anchor="start" textLength="25" lengthAdjust="spacingAndGlyphs" font-family="Liberation Serif">fx</text>
<path d="M2857 828 L2863 828 L2860 831 Z" fill="#a8a8a8" />
<circle cx="3241" cy="868" r="4.5" fill="#c4c4c4" />
<circle cx="3252" cy="868" r="4.5" fill="#c4c4c4" />
<circle cx="3263" cy="868" r="4.5" fill="#c4c4c4" />
<rect x="2798" y="886.5" width="481" height="2" rx="0" fill="#4a4a4a" />
<text x="2818.5" y="943" font-size="21.80" fill="#cfcfcf" stroke="#cfcfcf" stroke-width="0.35" text-anchor="start" textLength="81" lengthAdjust="spacingAndGlyphs" >Convert:</text>
<rect x="2952" y="920" width="9" height="9" rx="0" fill="#c6c6c6" />
<line x1="2956.5" y1="929" x2="2956.5" y2="948" stroke="#c6c6c6" stroke-width="2" />
<line x1="2959" y1="929" x2="2976" y2="944" stroke="#c6c6c6" stroke-width="2" />
<rect x="3012" y="930" width="9" height="9" rx="0" fill="#c6c6c6" />
<path d="M3005 948 Q3007 935 3015 932 Q3024 922 3034.5 921" fill="none" stroke="#c6c6c6" stroke-width="2" />
<rect x="2798" y="969.5" width="481" height="2" rx="0" fill="#4a4a4a" />
<text x="2818.5" y="1015" font-size="21.80" fill="#cfcfcf" stroke="#cfcfcf" stroke-width="0.35" text-anchor="start" textLength="84" lengthAdjust="spacingAndGlyphs" >Anchors:</text>
<rect x="2952" y="993" width="10" height="3" rx="0" fill="#c6c6c6" />
<g transform="translate(2967,1007) rotate(45) scale(1.0)"><rect x="-6.5" y="-19.5" width="13" height="11" fill="#c6c6c6"/><path d="M-8 -7 L8 -7 L10.5 -1 Q5 11 0 19 Q-5 11 -10.5 -1 Z" fill="#c6c6c6"/><circle cx="0" cy="4.2" r="2.6" fill="#535353"/><line x1="0" y1="5" x2="0" y2="19.5" stroke="#535353" stroke-width="1.6"/></g>
<rect x="3010" y="1016" width="7" height="7" rx="0" fill="#6f6f6f" />
<rect x="3012" y="1010" width="4" height="4" rx="0" fill="#6f6f6f" />
<rect x="3015" y="1004" width="4" height="4" rx="0" fill="#6f6f6f" />
<rect x="3020" y="1000" width="4" height="4" rx="0" fill="#6f6f6f" />
<rect x="3026" y="998" width="4" height="4" rx="0" fill="#6f6f6f" />
<rect x="3033" y="992" width="7" height="7" rx="0" fill="#6f6f6f" />
<rect x="3066" y="1014" width="8" height="8" rx="0" fill="#c6c6c6" />
<rect x="3090" y="993" width="8" height="8" rx="0" fill="#c6c6c6" />
<path d="M3070 1014 Q3072 998 3090 996" fill="none" stroke="#c6c6c6" stroke-width="2" />
<circle cx="3093" cy="1009" r="3.5" fill="none" stroke="#c6c6c6" stroke-width="1.8" />
<circle cx="3093" cy="1020" r="3.5" fill="none" stroke="#c6c6c6" stroke-width="1.8" />
<line x1="3077" y1="1012" x2="3090" y2="1018" stroke="#c6c6c6" stroke-width="1.8" />
<line x1="3077" y1="1018" x2="3090" y2="1011" stroke="#c6c6c6" stroke-width="1.8" />
<rect x="2798" y="1043" width="481" height="2" rx="0" fill="#4a4a4a" />
<text x="2818.5" y="1089" font-size="22.53" fill="#cfcfcf" stroke="#cfcfcf" stroke-width="0.35" text-anchor="start" textLength="51" lengthAdjust="spacingAndGlyphs" >Align</text>
<rect x="2824" y="1125" width="8" height="2" rx="0" fill="#c6c6c6" />
<rect x="2830" y="1120" width="2" height="6" rx="0" fill="#c6c6c6" />
<path d="M2830 1126 H2846 L2854 1134 V1154 H2830 Z" fill="#6a6a6a" stroke="#c6c6c6" stroke-width="2" />
<path d="M2860 1136 L2866 1142 L2872 1136" fill="none" stroke="#c6c6c6" stroke-width="1.8" />
<rect x="2901" y="1123" width="2" height="36" rx="0" fill="#c6c6c6" />
<rect x="2905" y="1127" width="16" height="12" rx="0" fill="#c6c6c6" />
<rect x="2905" y="1143" width="27" height="11" rx="0" fill="#c6c6c6" />
<rect x="2976" y="1123" width="2" height="36" rx="0" fill="#c6c6c6" />
<rect x="2968" y="1127" width="17" height="12" rx="0" fill="#c6c6c6" />
<rect x="2963.5" y="1143" width="26.5" height="11" rx="0" fill="#c6c6c6" />
<rect x="3054" y="1123" width="2" height="36" rx="0" fill="#c6c6c6" />
<rect x="3036" y="1129" width="16" height="10" rx="0" fill="#c6c6c6" />
<rect x="3025" y="1143" width="27" height="11" rx="0" fill="#c6c6c6" />
<rect x="3081" y="1125" width="37" height="2" rx="0" fill="#c6c6c6" />
<rect x="3087" y="1129" width="10" height="29" rx="0" fill="#c6c6c6" />
<rect x="3101" y="1129" width="11" height="12" rx="0" fill="#c6c6c6" />
<rect x="3141" y="1139" width="38" height="2" rx="0" fill="#c6c6c6" />
<rect x="3148" y="1125" width="10" height="29" rx="0" fill="#c6c6c6" />
<rect x="3162" y="1129" width="12" height="21" rx="0" fill="#c6c6c6" />
<rect x="3203" y="1156" width="36" height="2" rx="0" fill="#c6c6c6" />
<rect x="3209" y="1125" width="10" height="29" rx="0" fill="#c6c6c6" />
<rect x="3223" y="1134" width="11" height="20" rx="0" fill="#c6c6c6" />
<circle cx="3242" cy="1193" r="4.5" fill="#c4c4c4" />
<circle cx="3253" cy="1193" r="4.5" fill="#c4c4c4" />
<circle cx="3264" cy="1193" r="4.5" fill="#c4c4c4" />
<rect x="2798" y="1213.5" width="481" height="2" rx="0" fill="#4a4a4a" />
<text x="2818.5" y="1268.5" font-size="22.53" fill="#cfcfcf" stroke="#cfcfcf" stroke-width="0.35" text-anchor="start" textLength="134" lengthAdjust="spacingAndGlyphs" >Quick Actions</text>
<rect x="2819" y="1296" width="413" height="41" rx="3" fill="none" stroke="#6c6c6c" stroke-width="1.8" />
<rect x="3234.5" y="1296" width="43" height="41" rx="3" fill="none" stroke="#6c6c6c" stroke-width="1.8" />
<text x="2946.5" y="1324.5" font-size="23.26" fill="#f4f4f4" stroke="#f4f4f4" stroke-width="0.35" text-anchor="start" textLength="158" lengthAdjust="spacingAndGlyphs" >Start Global Edit</text>
<path d="M3250 1313 L3256 1319 L3262 1313" fill="none" stroke="#e0e0e0" stroke-width="1.8" />
<rect x="142" y="1958" width="1020" height="16" rx="0" fill="#4b4b4b" />
<rect x="150" y="1962" width="101" height="14" rx="2" fill="#3e3e3e" />
<rect x="252" y="1962" width="35" height="14" rx="2" fill="#454545" />
<rect x="297" y="1962" width="102" height="14" rx="2" fill="#3e3e3e" />
<rect x="400" y="1962" width="35" height="14" rx="2" fill="#454545" />
<rect x="519" y="1962" width="82" height="14" rx="2" fill="#3e3e3e" />
<rect x="602" y="1962" width="35" height="14" rx="2" fill="#454545" />
<text x="153" y="1987" font-size="21.80" fill="#d8d8d8" stroke="#d8d8d8" stroke-width="0.35" text-anchor="start" textLength="42" lengthAdjust="spacingAndGlyphs" >25%</text>
<text x="300" y="1987" font-size="21.80" fill="#d8d8d8" stroke="#d8d8d8" stroke-width="0.35" text-anchor="start" textLength="24" lengthAdjust="spacingAndGlyphs" >0°</text>
<text x="523" y="1987" font-size="21.80" fill="#d8d8d8" stroke="#d8d8d8" stroke-width="0.35" text-anchor="start" textLength="10" lengthAdjust="spacingAndGlyphs" >1</text>
<rect x="725" y="1962" width="404" height="14" rx="2" fill="#454545" />
<text x="812" y="1987" font-size="21.80" fill="#b0b0b0" stroke="#b0b0b0" stroke-width="0.35" text-anchor="start" textLength="232" lengthAdjust="spacingAndGlyphs" >Toggle Direct Selection</text>
<rect x="455" y="1968" width="3" height="8" rx="0" fill="#777777" />
<path d="M470 1968 L460 1976 L470 1984 Z" fill="#777777" />
<path d="M501 1968 L491 1976 L501 1984 Z" fill="#777777" />
<path d="M658 1968 L668 1976 L658 1984 Z" fill="#777777" />
<path d="M689 1968 L699 1976 L689 1984 Z" fill="#777777" />
<rect x="702" y="1968" width="3" height="8" rx="0" fill="#777777" />
<path d="M1139 1966 L1152 1976 L1139 1986 Z" fill="#c8c8c8" />
<rect x="1163" y="1958" width="2" height="16" rx="0" fill="#3e3e3e" />
<rect x="1129" y="1962" width="34" height="14" rx="0" fill="#454545" />
<path d="M1183 1966 L1176 1974" fill="none" stroke="#9a9a9a" stroke-width="1.5" />
<path d="M2677 1966 L2684 1974" fill="none" stroke="#9a9a9a" stroke-width="1.5" />
<rect x="1898" y="1960" width="50" height="14" rx="7" fill="#5c5c5c" />
</svg>
</body></html>
